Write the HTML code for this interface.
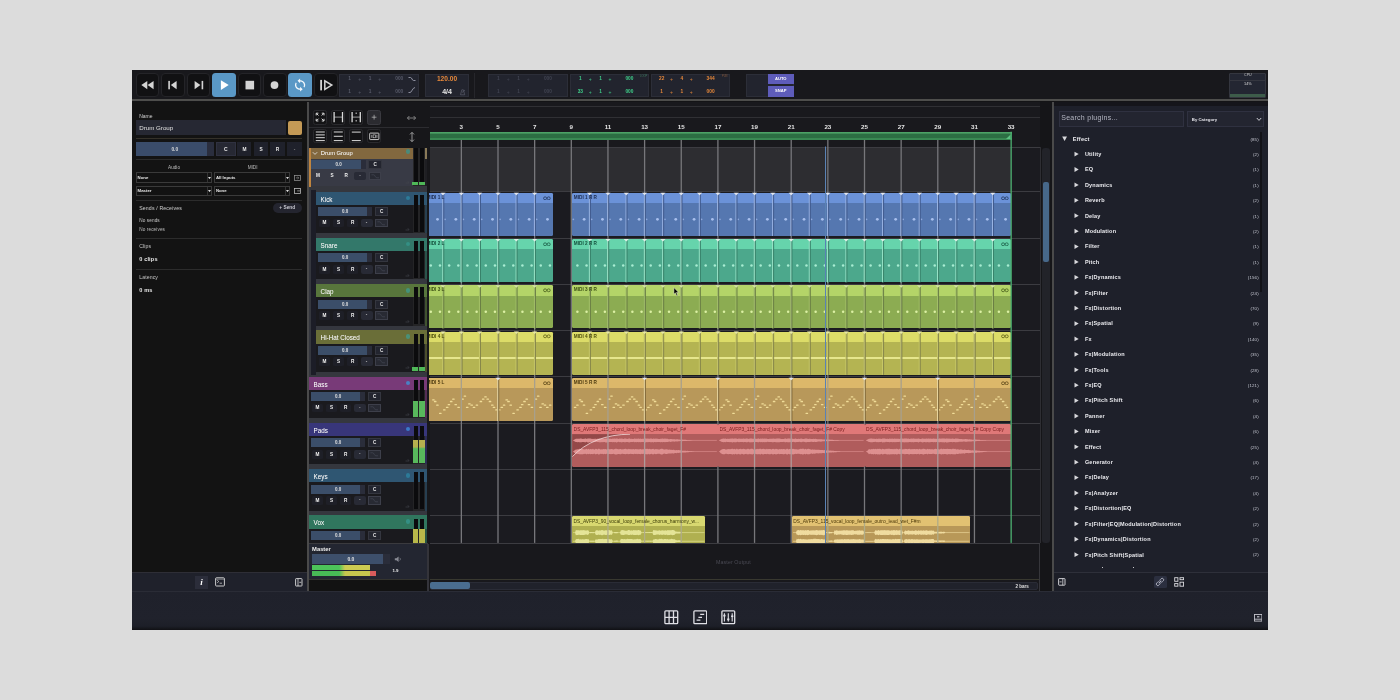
<!DOCTYPE html>
<html><head><meta charset="utf-8"><title>DAW</title>
<style>
html,body{margin:0;padding:0;}
body{width:1400px;height:700px;background:#dcdcdc;overflow:hidden;position:relative;font-family:"Liberation Sans",sans-serif;}
#r{position:absolute;left:0;top:0;width:1400px;height:700px;will-change:transform;filter:blur(0.4px);}
#r>div,#r>svg{position:absolute;box-sizing:border-box;}
.t{white-space:nowrap;font-weight:400;}
</style></head><body><div id="r">
<div style="left:132.00px;top:70.00px;width:1136.00px;height:560.00px;background:#141416;"></div>
<div style="left:132.00px;top:70.00px;width:1136.00px;height:30.00px;background:#18181c;"></div>
<div style="left:132.00px;top:99.00px;width:1136.00px;height:2.00px;background:#4e4e4c;"></div>
<div style="left:135.60px;top:73.20px;width:23.60px;height:24.20px;background:#111113;border-radius:4px;border:1px solid #242428;"></div>
<div style="left:161.20px;top:73.20px;width:23.60px;height:24.20px;background:#111113;border-radius:4px;border:1px solid #242428;"></div>
<div style="left:186.80px;top:73.20px;width:23.60px;height:24.20px;background:#111113;border-radius:4px;border:1px solid #242428;"></div>
<div style="left:211.90px;top:73.20px;width:24.30px;height:24.20px;background:#5a98c6;border-radius:3.5px;"></div>
<div style="left:237.60px;top:73.20px;width:23.60px;height:24.20px;background:#111113;border-radius:4px;border:1px solid #242428;"></div>
<div style="left:263.40px;top:73.20px;width:23.60px;height:24.20px;background:#111113;border-radius:4px;border:1px solid #242428;"></div>
<div style="left:288.10px;top:73.20px;width:24.30px;height:24.20px;background:#5a98c6;border-radius:3.5px;"></div>
<div style="left:314.00px;top:73.20px;width:23.60px;height:24.20px;background:#111113;border-radius:4px;border:1px solid #242428;"></div>
<svg style="left:135.60px;top:73.20px;" width="24" height="24.2" viewBox="0 0 24 24.2"><path d="M11.3 7.9v8.4l-6-4.2z M17.6 7.9v8.4l-6-4.2z" fill="#d4d4d4"/></svg>
<svg style="left:161.20px;top:73.20px;" width="24" height="24.2" viewBox="0 0 24 24.2"><rect x="7.3" y="7.9" width="1.6" height="8.4" fill="#d4d4d4"/><path d="M15.6 7.9v8.4l-5.8-4.2z" fill="#d4d4d4"/></svg>
<svg style="left:186.80px;top:73.20px;" width="24" height="24.2" viewBox="0 0 24 24.2"><rect x="14.6" y="7.9" width="1.6" height="8.4" fill="#d4d4d4"/><path d="M7.6 7.9v8.4l5.8-4.2z" fill="#d4d4d4"/></svg>
<svg style="left:211.90px;top:73.20px;" width="24.3" height="24.2" viewBox="0 0 24.3 24.2"><path d="M8.9 7.2v9.8l7.8-4.9z" fill="#fff"/></svg>
<svg style="left:237.60px;top:73.20px;" width="24" height="24.2" viewBox="0 0 24 24.2"><rect x="7.5" y="7.8" width="8.6" height="8.6" fill="#d4d4d4"/></svg>
<svg style="left:263.40px;top:73.20px;" width="24" height="24.2" viewBox="0 0 24 24.2"><circle cx="11.5" cy="12.1" r="3.9" fill="#d4d4d4"/></svg>
<svg style="left:288.10px;top:73.20px;" width="24.3" height="24.2" viewBox="0 0 24.3 24.2"><g transform="translate(12.1 12.0) scale(0.64 0.6) translate(-12 -12)"><path d="M12 4V1L8 5l4 4V6c3.31 0 6 2.69 6 6 0 1.01-.25 1.97-.7 2.8l1.46 1.46C19.54 15.03 20 13.57 20 12c0-4.42-3.58-8-8-8zm0 14c-3.31 0-6-2.69-6-6 0-1.01.25-1.97.7-2.8L5.24 7.74C4.46 8.97 4 10.43 4 12c0 4.42 3.58 8 8 8v3l4-4-4-4v3z" fill="#f4f8fc"/></g></svg>
<svg style="left:314.00px;top:73.20px;" width="24" height="24.2" viewBox="0 0 24 24.2"><rect x="6.2" y="6.9" width="1.8" height="10.5" fill="#d4d4d4"/><path d="M10.8 7.8v8.6l7-4.3z" fill="none" stroke="#d4d4d4" stroke-width="1.5" stroke-linejoin="miter"/></svg>
<div style="left:339.30px;top:73.70px;width:80.00px;height:23.00px;background:#22242e;border:1px solid #2c2e38;"></div>
<div class="t" style="left:349.70px;top:76.48px;font-size:4.8px;line-height:5.76px;color:#585b6a;width:10.00px;text-align:center;margin-left:-5px;font-weight:700;">1</div>
<div class="t" style="left:359.70px;top:76.36px;font-size:5px;line-height:6.00px;color:#585b6a;width:10.00px;text-align:center;margin-left:-5px;opacity:.9;">+</div>
<div class="t" style="left:370.10px;top:76.48px;font-size:4.8px;line-height:5.76px;color:#585b6a;width:10.00px;text-align:center;margin-left:-5px;font-weight:700;">1</div>
<div class="t" style="left:379.70px;top:76.36px;font-size:5px;line-height:6.00px;color:#585b6a;width:10.00px;text-align:center;margin-left:-5px;opacity:.9;">+</div>
<div class="t" style="left:399.30px;top:76.48px;font-size:4.8px;line-height:5.76px;color:#585b6a;width:16.00px;text-align:center;margin-left:-8px;font-weight:700;">000</div>
<div class="t" style="left:349.70px;top:89.18px;font-size:4.8px;line-height:5.76px;color:#585b6a;width:10.00px;text-align:center;margin-left:-5px;font-weight:700;">1</div>
<div class="t" style="left:359.70px;top:89.06px;font-size:5px;line-height:6.00px;color:#585b6a;width:10.00px;text-align:center;margin-left:-5px;opacity:.9;">+</div>
<div class="t" style="left:370.10px;top:89.18px;font-size:4.8px;line-height:5.76px;color:#585b6a;width:10.00px;text-align:center;margin-left:-5px;font-weight:700;">1</div>
<div class="t" style="left:379.70px;top:89.06px;font-size:5px;line-height:6.00px;color:#585b6a;width:10.00px;text-align:center;margin-left:-5px;opacity:.9;">+</div>
<div class="t" style="left:399.30px;top:89.18px;font-size:4.8px;line-height:5.76px;color:#585b6a;width:16.00px;text-align:center;margin-left:-8px;font-weight:700;">000</div>
<svg style="left:407.00px;top:75.00px;" width="10" height="20" viewBox="0 0 10 20"><path d="M1.5 2.5h2c1.5 0 1.5 3 3 3h2" fill="none" stroke="#9a9cab" stroke-width="0.9"/><path d="M1.5 17.5h1.5c2 0 2-4.5 5-5" fill="none" stroke="#9a9cab" stroke-width="0.9"/></svg>
<div style="left:425.00px;top:73.70px;width:44.00px;height:23.00px;background:#22242e;border:1px solid #2c2e38;"></div>
<div class="t" style="left:425.00px;top:75.32px;font-size:6.6px;line-height:7.92px;color:#e8893a;width:44.00px;text-align:center;font-weight:700;">120.00</div>
<div class="t" style="left:425.00px;top:87.88px;font-size:7px;line-height:8.40px;color:#e6e6e6;width:44.00px;text-align:center;font-weight:700;">4/4</div>
<svg style="left:458.00px;top:87.50px;" width="8" height="8" viewBox="0 0 8 8"><path d="M2.5 6.8l1.3-5h1.6l1.3 5z M4 4.5l3-2.5" fill="none" stroke="#5a5d6c" stroke-width="0.7"/></svg>
<div style="left:474.00px;top:73.00px;width:1.00px;height:24.50px;background:#26262b;"></div>
<div style="left:487.90px;top:73.70px;width:80.00px;height:23.00px;background:#22242e;border:1px solid #2c2e38;"></div>
<div class="t" style="left:498.30px;top:76.48px;font-size:4.8px;line-height:5.76px;color:#414452;width:10.00px;text-align:center;margin-left:-5px;font-weight:700;">1</div>
<div class="t" style="left:508.30px;top:76.36px;font-size:5px;line-height:6.00px;color:#414452;width:10.00px;text-align:center;margin-left:-5px;opacity:.9;">+</div>
<div class="t" style="left:518.70px;top:76.48px;font-size:4.8px;line-height:5.76px;color:#414452;width:10.00px;text-align:center;margin-left:-5px;font-weight:700;">1</div>
<div class="t" style="left:528.30px;top:76.36px;font-size:5px;line-height:6.00px;color:#414452;width:10.00px;text-align:center;margin-left:-5px;opacity:.9;">+</div>
<div class="t" style="left:547.90px;top:76.48px;font-size:4.8px;line-height:5.76px;color:#414452;width:16.00px;text-align:center;margin-left:-8px;font-weight:700;">000</div>
<div class="t" style="left:498.30px;top:89.18px;font-size:4.8px;line-height:5.76px;color:#414452;width:10.00px;text-align:center;margin-left:-5px;font-weight:700;">1</div>
<div class="t" style="left:508.30px;top:89.06px;font-size:5px;line-height:6.00px;color:#414452;width:10.00px;text-align:center;margin-left:-5px;opacity:.9;">+</div>
<div class="t" style="left:518.70px;top:89.18px;font-size:4.8px;line-height:5.76px;color:#414452;width:10.00px;text-align:center;margin-left:-5px;font-weight:700;">1</div>
<div class="t" style="left:528.30px;top:89.06px;font-size:5px;line-height:6.00px;color:#414452;width:10.00px;text-align:center;margin-left:-5px;opacity:.9;">+</div>
<div class="t" style="left:547.90px;top:89.18px;font-size:4.8px;line-height:5.76px;color:#414452;width:16.00px;text-align:center;margin-left:-8px;font-weight:700;">000</div>
<div style="left:570.00px;top:73.70px;width:79.30px;height:23.00px;background:#22242e;border:1px solid #2c2e38;"></div>
<div class="t" style="left:580.31px;top:76.48px;font-size:4.8px;line-height:5.76px;color:#3fd08a;width:10.00px;text-align:center;margin-left:-5px;font-weight:700;">1</div>
<div class="t" style="left:590.22px;top:76.36px;font-size:5px;line-height:6.00px;color:#3fd08a;width:10.00px;text-align:center;margin-left:-5px;opacity:.9;">+</div>
<div class="t" style="left:600.53px;top:76.48px;font-size:4.8px;line-height:5.76px;color:#3fd08a;width:10.00px;text-align:center;margin-left:-5px;font-weight:700;">1</div>
<div class="t" style="left:610.05px;top:76.36px;font-size:5px;line-height:6.00px;color:#3fd08a;width:10.00px;text-align:center;margin-left:-5px;opacity:.9;">+</div>
<div class="t" style="left:629.47px;top:76.48px;font-size:4.8px;line-height:5.76px;color:#3fd08a;width:16.00px;text-align:center;margin-left:-8px;font-weight:700;">000</div>
<div class="t" style="left:580.31px;top:89.18px;font-size:4.8px;line-height:5.76px;color:#3fd08a;width:10.00px;text-align:center;margin-left:-5px;font-weight:700;">33</div>
<div class="t" style="left:590.22px;top:89.06px;font-size:5px;line-height:6.00px;color:#3fd08a;width:10.00px;text-align:center;margin-left:-5px;opacity:.9;">+</div>
<div class="t" style="left:600.53px;top:89.18px;font-size:4.8px;line-height:5.76px;color:#3fd08a;width:10.00px;text-align:center;margin-left:-5px;font-weight:700;">1</div>
<div class="t" style="left:610.05px;top:89.06px;font-size:5px;line-height:6.00px;color:#3fd08a;width:10.00px;text-align:center;margin-left:-5px;opacity:.9;">+</div>
<div class="t" style="left:629.47px;top:89.18px;font-size:4.8px;line-height:5.76px;color:#3fd08a;width:16.00px;text-align:center;margin-left:-8px;font-weight:700;">000</div>
<div class="t" style="left:640.00px;top:74.77px;font-size:2.6px;line-height:3.12px;color:#3b7a5c;">LOOP</div>
<div style="left:651.40px;top:73.70px;width:78.90px;height:23.00px;background:#22242e;border:1px solid #2c2e38;"></div>
<div class="t" style="left:661.66px;top:76.48px;font-size:4.8px;line-height:5.76px;color:#e8893a;width:10.00px;text-align:center;margin-left:-5px;font-weight:700;">22</div>
<div class="t" style="left:671.52px;top:76.36px;font-size:5px;line-height:6.00px;color:#e8893a;width:10.00px;text-align:center;margin-left:-5px;opacity:.9;">+</div>
<div class="t" style="left:681.78px;top:76.48px;font-size:4.8px;line-height:5.76px;color:#e8893a;width:10.00px;text-align:center;margin-left:-5px;font-weight:700;">4</div>
<div class="t" style="left:691.24px;top:76.36px;font-size:5px;line-height:6.00px;color:#e8893a;width:10.00px;text-align:center;margin-left:-5px;opacity:.9;">+</div>
<div class="t" style="left:710.57px;top:76.48px;font-size:4.8px;line-height:5.76px;color:#e8893a;width:16.00px;text-align:center;margin-left:-8px;font-weight:700;">344</div>
<div class="t" style="left:661.66px;top:89.18px;font-size:4.8px;line-height:5.76px;color:#e8893a;width:10.00px;text-align:center;margin-left:-5px;font-weight:700;">1</div>
<div class="t" style="left:671.52px;top:89.06px;font-size:5px;line-height:6.00px;color:#e8893a;width:10.00px;text-align:center;margin-left:-5px;opacity:.9;">+</div>
<div class="t" style="left:681.78px;top:89.18px;font-size:4.8px;line-height:5.76px;color:#e8893a;width:10.00px;text-align:center;margin-left:-5px;font-weight:700;">1</div>
<div class="t" style="left:691.24px;top:89.06px;font-size:5px;line-height:6.00px;color:#e8893a;width:10.00px;text-align:center;margin-left:-5px;opacity:.9;">+</div>
<div class="t" style="left:710.57px;top:89.18px;font-size:4.8px;line-height:5.76px;color:#e8893a;width:16.00px;text-align:center;margin-left:-8px;font-weight:700;">000</div>
<div class="t" style="left:722.00px;top:74.77px;font-size:2.6px;line-height:3.12px;color:#8a5a3a;">PUN</div>
<div style="left:746.40px;top:73.70px;width:47.20px;height:23.00px;background:#22242e;border:1px solid #2c2e38;"></div>
<div style="left:767.90px;top:73.70px;width:25.70px;height:10.80px;background:#5e5cba;"></div>
<div style="left:767.90px;top:85.90px;width:25.70px;height:10.80px;background:#5e5cba;"></div>
<div class="t" style="left:767.90px;top:76.79px;font-size:4.1px;line-height:4.92px;color:#fff;width:25.70px;text-align:center;font-weight:700;">AUTO</div>
<div class="t" style="left:767.90px;top:88.99px;font-size:4.1px;line-height:4.92px;color:#fff;width:25.70px;text-align:center;font-weight:700;">SNAP</div>
<div style="left:1229.30px;top:72.60px;width:37.20px;height:25.30px;background:#232632;border:1px solid #34363f;border-radius:1px;"></div>
<div style="left:1230.30px;top:93.60px;width:35.20px;height:3.60px;background:#3d5c4a;"></div>
<div style="left:1230.00px;top:80.30px;width:36.00px;height:0.60px;background:#34363f;"></div>
<div class="t" style="left:1229.30px;top:73.48px;font-size:3.6px;line-height:4.32px;color:#ccc;width:37.20px;text-align:center;">CPU</div>
<div class="t" style="left:1229.30px;top:81.96px;font-size:3.8px;line-height:4.56px;color:#ddd;width:37.20px;text-align:center;">14%</div>
<div style="left:132.00px;top:101.50px;width:175.00px;height:488.50px;background:#131313;"></div>
<div class="t" style="left:139.20px;top:113.26px;font-size:5.0px;line-height:6.00px;color:#d0d0d0;">Name</div>
<div style="left:136.00px;top:120.30px;width:149.70px;height:14.40px;background:#262833;"></div>
<div class="t" style="left:139.20px;top:123.95px;font-size:6.2px;line-height:7.44px;color:#e0e0e0;">Drum Group</div>
<div style="left:287.90px;top:120.70px;width:14.20px;height:13.90px;background:#c49a56;border-radius:2px;"></div>
<div style="left:136.00px;top:138.10px;width:166.00px;height:0.70px;background:#34312a;"></div>
<div style="left:136.00px;top:141.90px;width:77.60px;height:13.80px;background:#2a2e3e;"></div>
<div style="left:136.00px;top:141.90px;width:71.00px;height:13.80px;background:#3a4c6a;"></div>
<div class="t" style="left:136.00px;top:146.88px;font-size:4.8px;line-height:5.76px;color:#ddd;width:77.60px;text-align:center;font-weight:700;">0.0</div>
<div style="left:215.70px;top:141.90px;width:20.00px;height:13.80px;background:#262833;border:1px solid #2f3140;"></div>
<div class="t" style="left:215.70px;top:145.96px;font-size:5px;line-height:6.00px;color:#e6e6e6;width:20.00px;text-align:center;font-weight:700;">C</div>
<div style="left:237.40px;top:141.90px;width:14.00px;height:13.80px;background:#1f212b;"></div>
<div class="t" style="left:237.40px;top:146.88px;font-size:4.8px;line-height:5.76px;color:#e6e6e6;width:14.00px;text-align:center;font-weight:700;">M</div>
<div style="left:254.00px;top:141.90px;width:14.00px;height:13.80px;background:#1f212b;"></div>
<div class="t" style="left:254.00px;top:146.88px;font-size:4.8px;line-height:5.76px;color:#e6e6e6;width:14.00px;text-align:center;font-weight:700;">S</div>
<div style="left:270.40px;top:141.90px;width:14.30px;height:13.80px;background:#1f212b;"></div>
<div class="t" style="left:270.40px;top:146.88px;font-size:4.8px;line-height:5.76px;color:#e6e6e6;width:14.30px;text-align:center;font-weight:700;">R</div>
<div style="left:286.90px;top:141.90px;width:15.20px;height:13.80px;background:#1f212b;"></div>
<div class="t" style="left:286.90px;top:146.88px;font-size:4.8px;line-height:5.76px;color:#888;width:15.20px;text-align:center;font-weight:700;">-</div>
<div style="left:136.00px;top:158.80px;width:166.00px;height:0.70px;background:#2c2c2c;"></div>
<div class="t" style="left:154.00px;top:165.13px;font-size:4.7px;line-height:5.64px;color:#bbb;width:40.00px;text-align:center;">Audio</div>
<div class="t" style="left:232.60px;top:165.13px;font-size:4.7px;line-height:5.64px;color:#bbb;width:40.00px;text-align:center;">MIDI</div>
<div style="left:136.00px;top:172.40px;width:75.70px;height:10.90px;background:#121212;border:1px solid #3a3a3a;"></div>
<div class="t" style="left:137.60px;top:175.32px;font-size:4.3px;line-height:5.16px;color:#e8e8e8;font-weight:700;">None</div>
<div style="left:207.10px;top:173.40px;width:0.60px;height:8.90px;background:#333;"></div>
<svg style="left:207.70px;top:176.85px;" width="3" height="2.4" viewBox="0 0 3 2.4"><path d="M0 0h3l-1.5 2.2z" fill="#ddd"/></svg>
<div style="left:214.30px;top:172.40px;width:75.40px;height:10.90px;background:#121212;border:1px solid #3a3a3a;"></div>
<div class="t" style="left:215.90px;top:175.32px;font-size:4.3px;line-height:5.16px;color:#e8e8e8;font-weight:700;">All Inputs</div>
<div style="left:285.10px;top:173.40px;width:0.60px;height:8.90px;background:#333;"></div>
<svg style="left:285.70px;top:176.85px;" width="3" height="2.4" viewBox="0 0 3 2.4"><path d="M0 0h3l-1.5 2.2z" fill="#ddd"/></svg>
<div style="left:136.00px;top:185.70px;width:75.70px;height:10.50px;background:#121212;border:1px solid #3a3a3a;"></div>
<div class="t" style="left:137.60px;top:188.42px;font-size:4.3px;line-height:5.16px;color:#e8e8e8;font-weight:700;">Master</div>
<div style="left:207.10px;top:186.70px;width:0.60px;height:8.50px;background:#333;"></div>
<svg style="left:207.70px;top:189.95px;" width="3" height="2.4" viewBox="0 0 3 2.4"><path d="M0 0h3l-1.5 2.2z" fill="#ddd"/></svg>
<div style="left:214.30px;top:185.70px;width:75.40px;height:10.50px;background:#121212;border:1px solid #3a3a3a;"></div>
<div class="t" style="left:215.90px;top:188.42px;font-size:4.3px;line-height:5.16px;color:#e8e8e8;font-weight:700;">None</div>
<div style="left:285.10px;top:186.70px;width:0.60px;height:8.50px;background:#333;"></div>
<svg style="left:285.70px;top:189.95px;" width="3" height="2.4" viewBox="0 0 3 2.4"><path d="M0 0h3l-1.5 2.2z" fill="#ddd"/></svg>
<svg style="left:293.50px;top:174.80px;" width="7" height="6" viewBox="0 0 7 6"><rect x="0.4" y="0.4" width="6" height="5" fill="none" stroke="#999" stroke-width="0.7"/><path d="M2 2.9h2.6M3.6 1.8l1.2 1.1-1.2 1.1" fill="none" stroke="#999" stroke-width="0.6"/></svg>
<svg style="left:293.50px;top:188.00px;" width="7" height="6" viewBox="0 0 7 6"><rect x="0.4" y="0.4" width="6" height="5" fill="none" stroke="#bbb" stroke-width="0.8"/><path d="M3.2 2.9h3" fill="none" stroke="#bbb" stroke-width="0.7"/></svg>
<div style="left:136.00px;top:200.30px;width:166.00px;height:0.70px;background:#2c2c2c;"></div>
<div class="t" style="left:139.20px;top:205.04px;font-size:5.2px;line-height:6.24px;color:#d0d0d0;letter-spacing:0.15px;">Sends / Receives</div>
<div style="left:272.60px;top:203.00px;width:29.40px;height:10.20px;background:#24252f;border-radius:5px;"></div>
<div class="t" style="left:272.60px;top:205.38px;font-size:4.8px;line-height:5.76px;color:#c8c8d0;width:29.40px;text-align:center;font-weight:700;">+ Send</div>
<div class="t" style="left:139.20px;top:217.63px;font-size:4.7px;line-height:5.64px;color:#c8c8c8;letter-spacing:0.1px;">No sends</div>
<div class="t" style="left:139.20px;top:227.03px;font-size:4.7px;line-height:5.64px;color:#bdbdbd;letter-spacing:0.1px;">No receives</div>
<div style="left:136.00px;top:238.40px;width:166.00px;height:0.70px;background:#2c2c2c;"></div>
<div class="t" style="left:139.20px;top:243.04px;font-size:5.2px;line-height:6.24px;color:#c4c4c4;letter-spacing:0.1px;">Clips</div>
<div class="t" style="left:139.20px;top:256.10px;font-size:5.6px;line-height:6.72px;color:#e6e6e6;font-weight:700;letter-spacing:0.15px;">0 clips</div>
<div style="left:136.00px;top:268.50px;width:166.00px;height:0.70px;background:#2c2c2c;"></div>
<div class="t" style="left:139.20px;top:273.84px;font-size:5.2px;line-height:6.24px;color:#c4c4c4;letter-spacing:0.1px;">Latency</div>
<div class="t" style="left:139.20px;top:287.00px;font-size:5.6px;line-height:6.72px;color:#e6e6e6;font-weight:700;letter-spacing:0.15px;">0 ms</div>
<div style="left:132.00px;top:572.20px;width:175.00px;height:19.20px;background:#1f212b;border-top:1px solid #2e2e36;"></div>
<div style="left:195.00px;top:575.60px;width:13.00px;height:13.00px;background:#2b2d3a;"></div>
<div class="t" style="left:195.00px;top:577.10px;font-size:9px;line-height:10.80px;color:#fff;width:13.00px;text-align:center;font-family:'Liberation Serif',serif;font-style:italic;font-weight:700;">i</div>
<svg style="left:215.40px;top:577.00px;" width="10" height="10" viewBox="0 0 10 10"><rect x="0.6" y="0.8" width="8.8" height="8.2" rx="0.8" fill="none" stroke="#ddd" stroke-width="0.9"/><path d="M2.2 3.2l1.6 1.3-1.6 1.3M4.6 6.2h2.4" fill="none" stroke="#ddd" stroke-width="0.7"/><path d="M0.6 2.2h8.8" stroke="#ddd" stroke-width="0.5"/></svg>
<svg style="left:294.60px;top:577.80px;" width="8" height="9" viewBox="0 0 8 9"><rect x="0.6" y="0.6" width="6.4" height="7.4" rx="0.6" fill="none" stroke="#ddd" stroke-width="0.9"/><path d="M3 0.6v7.4" stroke="#ddd" stroke-width="0.8"/><path d="M4.3 4.3h2" stroke="#ddd" stroke-width="0.8"/></svg>
<div style="left:307.00px;top:101.50px;width:1.50px;height:490.00px;background:#4a4a4a;"></div>
<div style="left:308.50px;top:101.50px;width:121.00px;height:488.50px;background:#17171a;"></div>
<div style="left:308.50px;top:126.60px;width:120.00px;height:0.70px;background:#2c2c30;"></div>
<div style="left:313.20px;top:110.40px;width:14.20px;height:14.20px;background:#131315;border:1px solid #2a2a2e;border-radius:2.5px;"></div>
<div style="left:331.00px;top:110.40px;width:14.20px;height:14.20px;background:#131315;border:1px solid #2a2a2e;border-radius:2.5px;"></div>
<div style="left:349.00px;top:110.40px;width:14.20px;height:14.20px;background:#131315;border:1px solid #2a2a2e;border-radius:2.5px;"></div>
<div style="left:366.80px;top:110.40px;width:14.20px;height:14.20px;background:#2b2b30;border:1px solid #3a3a40;border-radius:2.5px;"></div>
<div style="left:313.20px;top:129.00px;width:14.20px;height:14.20px;background:#131315;border:1px solid #2a2a2e;border-radius:2.5px;"></div>
<div style="left:331.00px;top:129.00px;width:14.20px;height:14.20px;background:#131315;border:1px solid #2a2a2e;border-radius:2.5px;"></div>
<div style="left:349.00px;top:129.00px;width:14.20px;height:14.20px;background:#131315;border:1px solid #2a2a2e;border-radius:2.5px;"></div>
<div style="left:366.80px;top:129.00px;width:14.20px;height:14.20px;background:#131315;border:1px solid #2a2a2e;border-radius:2.5px;"></div>
<svg style="left:313.20px;top:110.40px;" width="14.2" height="14.2" viewBox="0 0 14.2 14.2"><g fill="none" stroke="#dcdcdc" stroke-width="1"><path d="M3.2 5.4v-2.2h2.2M3.4 3.4l2.1 2.1 M11 5.4v-2.2h-2.2M10.8 3.4l-2.1 2.1 M3.2 8.8v2.2h2.2M3.4 10.8l2.1-2.1 M11 8.8v2.2h-2.2M10.8 10.8l-2.1-2.1"/></g></svg>
<svg style="left:331.00px;top:110.40px;" width="14.2" height="14.2" viewBox="0 0 14.2 14.2"><g fill="none" stroke="#dcdcdc"><path d="M3.1 2v10.2M11.5 2v10.2" stroke-width="1.3"/><path d="M3.1 7.1h8.4" stroke-width="0.8" opacity=".85"/></g></svg>
<svg style="left:349.00px;top:110.40px;" width="14.2" height="14.2" viewBox="0 0 14.2 14.2"><g fill="none" stroke="#dcdcdc"><path d="M3.1 2v10.2M11.3 2v10.2" stroke-width="1.3"/><path d="M3.1 7.1h8.2" stroke-width="0.8" opacity=".85"/><path d="M7.2 2.6v1.5M7.2 10v1.5" stroke-width="1.2" opacity=".8"/></g></svg>
<svg style="left:366.80px;top:110.40px;" width="14.2" height="14.2" viewBox="0 0 14.2 14.2"><path d="M7.1 4.8v4.8M4.7 7.2h4.8" fill="none" stroke="#c8c8c8" stroke-width="0.65"/></svg>
<svg style="left:313.20px;top:129.00px;" width="14.2" height="14.2" viewBox="0 0 14.2 14.2"><path d="M2.8 3h9M2.8 5.9h9M2.8 8.7h9M2.8 11.6h9" fill="none" stroke="#dcdcdc" stroke-width="1"/></svg>
<svg style="left:331.00px;top:129.00px;" width="14.2" height="14.2" viewBox="0 0 14.2 14.2"><path d="M2.8 3h9M2.8 7.3h9M2.8 11.6h9" fill="none" stroke="#dcdcdc" stroke-width="1"/></svg>
<svg style="left:349.00px;top:129.00px;" width="14.2" height="14.2" viewBox="0 0 14.2 14.2"><path d="M2.8 3.1h9M2.8 11.6h9" fill="none" stroke="#dcdcdc" stroke-width="1"/></svg>
<svg style="left:366.80px;top:129.00px;" width="14.2" height="14.2" viewBox="0 0 14.2 14.2"><rect x="2.7" y="4.1" width="9.2" height="6.5" rx="0.6" fill="none" stroke="#dcdcdc" stroke-width="0.9"/><path d="M4.8 5.8v3.1M9.9 5.8v3.1" fill="none" stroke="#dcdcdc" stroke-width="0.7"/><rect x="6.1" y="5.9" width="2.5" height="2.9" fill="none" stroke="#dcdcdc" stroke-width="0.6"/></svg>
<svg style="left:406.00px;top:113.50px;" width="11" height="8" viewBox="0 0 11 8"><path d="M1.5 4h8M3.4 2l-2 2 2 2M7.6 2l2 2-2 2" fill="none" stroke="#9a9a9a" stroke-width="0.8"/></svg>
<svg style="left:407.50px;top:130.50px;" width="8" height="12" viewBox="0 0 8 12"><path d="M4 1.5v9M2 3.4l2-2 2 2M2 8.6l2 2 2-2" fill="none" stroke="#b8b8b8" stroke-width="0.8"/></svg>
<div style="left:308.50px;top:147.90px;width:119.60px;height:395.10px;background:#35373e;"></div>
<div style="left:310.70px;top:147.90px;width:101.90px;height:38.50px;background:#383a45;"></div>
<div style="left:308.60px;top:147.90px;width:2.10px;height:39.50px;background:#c0853f;"></div>
<div style="left:310.70px;top:147.90px;width:101.90px;height:10.70px;background:#82683f;"></div>
<div class="t" style="left:320.80px;top:150.14px;font-size:5.8px;line-height:6.96px;color:#f4f4f4;text-shadow:0 0 0.3px rgba(255,255,255,.3);">Drum Group</div>
<svg style="left:312.20px;top:150.90px;" width="6" height="5" viewBox="0 0 6 5"><path d="M0.8 1.2l2.2 2.2 2.2-2.2" fill="none" stroke="#e8e8e8" stroke-width="0.8"/></svg>
<div style="left:405.5px;top:149.00px;width:4.6px;height:4.6px;border-radius:50%;background:#4a8a7a;"></div>
<div style="left:311.40px;top:160.00px;width:54.40px;height:9.00px;background:#2a2d3a;"></div>
<div style="left:311.40px;top:160.00px;width:49.40px;height:9.00px;background:#3b4e69;"></div>
<div class="t" style="left:311.40px;top:162.05px;font-size:4.5px;line-height:5.40px;color:#e0e0e0;width:54.40px;text-align:center;font-weight:700;">0.0</div>
<div style="left:368.40px;top:159.90px;width:13.40px;height:9.20px;background:#23252f;border:1px solid #34363f;"></div>
<div class="t" style="left:368.40px;top:161.99px;font-size:4.6px;line-height:5.52px;color:#e8e8e8;width:13.40px;text-align:center;font-weight:700;">C</div>
<div class="t" style="left:311.90px;top:173.33px;font-size:4.7px;line-height:5.64px;color:#f0f0f0;width:12.00px;text-align:center;font-weight:700;">M</div>
<div class="t" style="left:326.05px;top:173.33px;font-size:4.7px;line-height:5.64px;color:#f0f0f0;width:12.00px;text-align:center;font-weight:700;">S</div>
<div class="t" style="left:340.20px;top:173.33px;font-size:4.7px;line-height:5.64px;color:#f0f0f0;width:12.00px;text-align:center;font-weight:700;">R</div>
<div style="left:354.10px;top:171.60px;width:12.00px;height:8.80px;background:#282a35;border-radius:2px;"></div>
<div class="t" style="left:354.10px;top:172.89px;font-size:4.6px;line-height:5.52px;color:#c8c8c8;width:12.00px;text-align:center;font-weight:700;">-</div>
<div style="left:368.60px;top:171.50px;width:12.60px;height:8.80px;background:#282a33;border:1px solid #3d3f4a;"></div>
<svg style="left:368.60px;top:171.50px;" width="12.6" height="8.8" viewBox="0 0 12.6 8.8"><path d="M2.4 2.8h2.2c1.6 0 1.6 3 3.2 3h2.2" fill="none" stroke="#4a4d5a" stroke-width="0.6"/></svg>
<svg style="left:404.60px;top:179.90px;" width="5" height="4" viewBox="0 0 5 4"><path d="M0.5 3h3.6M2.8 1.2l1.4 1.8" fill="none" stroke="#44464f" stroke-width="0.6"/></svg>
<div style="left:412.60px;top:147.90px;width:12.60px;height:38.50px;background:#242426;"></div>
<div style="left:413.60px;top:148.40px;width:4.10px;height:36.80px;background:#0b0b0d;"></div>
<div style="left:419.60px;top:148.40px;width:4.50px;height:36.80px;background:#0b0b0d;"></div>
<div style="left:412.40px;top:181.50px;width:5.60px;height:3.50px;background:#4fb858;"></div>
<div style="left:419.00px;top:181.50px;width:5.70px;height:3.50px;background:#4fb858;"></div>
<div style="left:425.20px;top:147.90px;width:2.10px;height:10.70px;background:#8a7a58;"></div>
<div style="left:425.20px;top:158.60px;width:2.10px;height:27.80px;background:#1f1f23;"></div>
<div style="left:311.00px;top:189.60px;width:4.60px;height:46.25px;background:#1c1d27;"></div>
<div style="left:315.60px;top:191.60px;width:97.00px;height:41.65px;background:#1a1a1e;"></div>
<div style="left:315.60px;top:191.60px;width:111.70px;height:13.30px;background:#2f5672;"></div>
<div class="t" style="left:320.60px;top:195.74px;font-size:6.3px;line-height:7.56px;color:#f4f4f4;text-shadow:0 0 0.3px rgba(255,255,255,.3);">Kick</div>
<div style="left:405.5px;top:195.50px;width:4.6px;height:4.6px;border-radius:50%;background:#2c7a98;"></div>
<div style="left:317.90px;top:207.10px;width:54.40px;height:9.00px;background:#2a2d3a;"></div>
<div style="left:317.90px;top:207.10px;width:49.40px;height:9.00px;background:#3b4e69;"></div>
<div class="t" style="left:317.90px;top:209.15px;font-size:4.5px;line-height:5.40px;color:#e0e0e0;width:54.40px;text-align:center;font-weight:700;">0.0</div>
<div style="left:374.90px;top:207.00px;width:13.40px;height:9.20px;background:#23252f;border:1px solid #34363f;"></div>
<div class="t" style="left:374.90px;top:209.09px;font-size:4.6px;line-height:5.52px;color:#e8e8e8;width:13.40px;text-align:center;font-weight:700;">C</div>
<div style="left:318.80px;top:218.60px;width:11.20px;height:8.80px;background:#1e1f27;border-radius:1.5px;"></div>
<div class="t" style="left:318.40px;top:220.33px;font-size:4.7px;line-height:5.64px;color:#f0f0f0;width:12.00px;text-align:center;font-weight:700;">M</div>
<div style="left:332.95px;top:218.60px;width:11.20px;height:8.80px;background:#1e1f27;border-radius:1.5px;"></div>
<div class="t" style="left:332.55px;top:220.33px;font-size:4.7px;line-height:5.64px;color:#f0f0f0;width:12.00px;text-align:center;font-weight:700;">S</div>
<div style="left:347.10px;top:218.60px;width:11.20px;height:8.80px;background:#1e1f27;border-radius:1.5px;"></div>
<div class="t" style="left:346.70px;top:220.33px;font-size:4.7px;line-height:5.64px;color:#f0f0f0;width:12.00px;text-align:center;font-weight:700;">R</div>
<div style="left:360.60px;top:218.60px;width:12.00px;height:8.80px;background:#282a35;border-radius:2px;"></div>
<div class="t" style="left:360.60px;top:219.89px;font-size:4.6px;line-height:5.52px;color:#c8c8c8;width:12.00px;text-align:center;font-weight:700;">-</div>
<div style="left:375.10px;top:218.50px;width:12.60px;height:8.80px;background:#282a33;border:1px solid #3d3f4a;"></div>
<svg style="left:375.10px;top:218.50px;" width="12.6" height="8.8" viewBox="0 0 12.6 8.8"><path d="M2.4 2.8h2.2c1.6 0 1.6 3 3.2 3h2.2" fill="none" stroke="#4a4d5a" stroke-width="0.6"/></svg>
<svg style="left:404.60px;top:226.60px;" width="5" height="4" viewBox="0 0 5 4"><path d="M0.5 3h3.6M2.8 1.2l1.4 1.8" fill="none" stroke="#44464f" stroke-width="0.6"/></svg>
<div style="left:412.60px;top:204.90px;width:12.60px;height:28.35px;background:#242426;"></div>
<div style="left:413.60px;top:194.80px;width:4.10px;height:36.85px;background:#0b0b0d;"></div>
<div style="left:419.60px;top:194.80px;width:4.50px;height:36.85px;background:#0b0b0d;"></div>
<div style="left:425.20px;top:204.90px;width:2.10px;height:28.35px;background:#273f50;"></div>
<div style="left:311.00px;top:235.85px;width:4.60px;height:46.25px;background:#1c1d27;"></div>
<div style="left:315.60px;top:237.85px;width:97.00px;height:41.65px;background:#1a1a1e;"></div>
<div style="left:315.60px;top:237.85px;width:111.70px;height:13.30px;background:#33786a;"></div>
<div class="t" style="left:320.60px;top:241.99px;font-size:6.3px;line-height:7.56px;color:#f4f4f4;text-shadow:0 0 0.3px rgba(255,255,255,.3);">Snare</div>
<div style="left:405.5px;top:241.75px;width:4.6px;height:4.6px;border-radius:50%;background:#348f84;"></div>
<div style="left:317.90px;top:253.35px;width:54.40px;height:9.00px;background:#2a2d3a;"></div>
<div style="left:317.90px;top:253.35px;width:49.40px;height:9.00px;background:#3b4e69;"></div>
<div class="t" style="left:317.90px;top:255.40px;font-size:4.5px;line-height:5.40px;color:#e0e0e0;width:54.40px;text-align:center;font-weight:700;">0.0</div>
<div style="left:374.90px;top:253.25px;width:13.40px;height:9.20px;background:#23252f;border:1px solid #34363f;"></div>
<div class="t" style="left:374.90px;top:255.34px;font-size:4.6px;line-height:5.52px;color:#e8e8e8;width:13.40px;text-align:center;font-weight:700;">C</div>
<div style="left:318.80px;top:264.85px;width:11.20px;height:8.80px;background:#1e1f27;border-radius:1.5px;"></div>
<div class="t" style="left:318.40px;top:266.58px;font-size:4.7px;line-height:5.64px;color:#f0f0f0;width:12.00px;text-align:center;font-weight:700;">M</div>
<div style="left:332.95px;top:264.85px;width:11.20px;height:8.80px;background:#1e1f27;border-radius:1.5px;"></div>
<div class="t" style="left:332.55px;top:266.58px;font-size:4.7px;line-height:5.64px;color:#f0f0f0;width:12.00px;text-align:center;font-weight:700;">S</div>
<div style="left:347.10px;top:264.85px;width:11.20px;height:8.80px;background:#1e1f27;border-radius:1.5px;"></div>
<div class="t" style="left:346.70px;top:266.58px;font-size:4.7px;line-height:5.64px;color:#f0f0f0;width:12.00px;text-align:center;font-weight:700;">R</div>
<div style="left:360.60px;top:264.85px;width:12.00px;height:8.80px;background:#282a35;border-radius:2px;"></div>
<div class="t" style="left:360.60px;top:266.14px;font-size:4.6px;line-height:5.52px;color:#c8c8c8;width:12.00px;text-align:center;font-weight:700;">-</div>
<div style="left:375.10px;top:264.75px;width:12.60px;height:8.80px;background:#282a33;border:1px solid #3d3f4a;"></div>
<svg style="left:375.10px;top:264.75px;" width="12.6" height="8.8" viewBox="0 0 12.6 8.8"><path d="M2.4 2.8h2.2c1.6 0 1.6 3 3.2 3h2.2" fill="none" stroke="#4a4d5a" stroke-width="0.6"/></svg>
<svg style="left:404.60px;top:272.85px;" width="5" height="4" viewBox="0 0 5 4"><path d="M0.5 3h3.6M2.8 1.2l1.4 1.8" fill="none" stroke="#44464f" stroke-width="0.6"/></svg>
<div style="left:412.60px;top:251.15px;width:12.60px;height:28.35px;background:#242426;"></div>
<div style="left:413.60px;top:241.05px;width:4.10px;height:36.85px;background:#0b0b0d;"></div>
<div style="left:419.60px;top:241.05px;width:4.50px;height:36.85px;background:#0b0b0d;"></div>
<div style="left:425.20px;top:251.15px;width:2.10px;height:28.35px;background:#29544b;"></div>
<div style="left:311.00px;top:282.10px;width:4.60px;height:46.25px;background:#1c1d27;"></div>
<div style="left:315.60px;top:284.10px;width:97.00px;height:41.65px;background:#1a1a1e;"></div>
<div style="left:315.60px;top:284.10px;width:111.70px;height:13.30px;background:#58763c;"></div>
<div class="t" style="left:320.60px;top:288.24px;font-size:6.3px;line-height:7.56px;color:#f4f4f4;text-shadow:0 0 0.3px rgba(255,255,255,.3);">Clap</div>
<div style="left:405.5px;top:288.00px;width:4.6px;height:4.6px;border-radius:50%;background:#45927a;"></div>
<div style="left:317.90px;top:299.60px;width:54.40px;height:9.00px;background:#2a2d3a;"></div>
<div style="left:317.90px;top:299.60px;width:49.40px;height:9.00px;background:#3b4e69;"></div>
<div class="t" style="left:317.90px;top:301.65px;font-size:4.5px;line-height:5.40px;color:#e0e0e0;width:54.40px;text-align:center;font-weight:700;">0.0</div>
<div style="left:374.90px;top:299.50px;width:13.40px;height:9.20px;background:#23252f;border:1px solid #34363f;"></div>
<div class="t" style="left:374.90px;top:301.59px;font-size:4.6px;line-height:5.52px;color:#e8e8e8;width:13.40px;text-align:center;font-weight:700;">C</div>
<div style="left:318.80px;top:311.10px;width:11.20px;height:8.80px;background:#1e1f27;border-radius:1.5px;"></div>
<div class="t" style="left:318.40px;top:312.83px;font-size:4.7px;line-height:5.64px;color:#f0f0f0;width:12.00px;text-align:center;font-weight:700;">M</div>
<div style="left:332.95px;top:311.10px;width:11.20px;height:8.80px;background:#1e1f27;border-radius:1.5px;"></div>
<div class="t" style="left:332.55px;top:312.83px;font-size:4.7px;line-height:5.64px;color:#f0f0f0;width:12.00px;text-align:center;font-weight:700;">S</div>
<div style="left:347.10px;top:311.10px;width:11.20px;height:8.80px;background:#1e1f27;border-radius:1.5px;"></div>
<div class="t" style="left:346.70px;top:312.83px;font-size:4.7px;line-height:5.64px;color:#f0f0f0;width:12.00px;text-align:center;font-weight:700;">R</div>
<div style="left:360.60px;top:311.10px;width:12.00px;height:8.80px;background:#282a35;border-radius:2px;"></div>
<div class="t" style="left:360.60px;top:312.39px;font-size:4.6px;line-height:5.52px;color:#c8c8c8;width:12.00px;text-align:center;font-weight:700;">-</div>
<div style="left:375.10px;top:311.00px;width:12.60px;height:8.80px;background:#282a33;border:1px solid #3d3f4a;"></div>
<svg style="left:375.10px;top:311.00px;" width="12.6" height="8.8" viewBox="0 0 12.6 8.8"><path d="M2.4 2.8h2.2c1.6 0 1.6 3 3.2 3h2.2" fill="none" stroke="#4a4d5a" stroke-width="0.6"/></svg>
<svg style="left:404.60px;top:319.10px;" width="5" height="4" viewBox="0 0 5 4"><path d="M0.5 3h3.6M2.8 1.2l1.4 1.8" fill="none" stroke="#44464f" stroke-width="0.6"/></svg>
<div style="left:412.60px;top:297.40px;width:12.60px;height:28.35px;background:#242426;"></div>
<div style="left:413.60px;top:287.30px;width:4.10px;height:36.85px;background:#0b0b0d;"></div>
<div style="left:419.60px;top:287.30px;width:4.50px;height:36.85px;background:#0b0b0d;"></div>
<div style="left:425.20px;top:297.40px;width:2.10px;height:28.35px;background:#40532f;"></div>
<div style="left:311.00px;top:328.35px;width:4.60px;height:46.25px;background:#1c1d27;"></div>
<div style="left:315.60px;top:330.35px;width:97.00px;height:41.65px;background:#1a1a1e;"></div>
<div style="left:315.60px;top:330.35px;width:111.70px;height:13.30px;background:#6a6e38;"></div>
<div class="t" style="left:320.60px;top:334.49px;font-size:6.3px;line-height:7.56px;color:#f4f4f4;text-shadow:0 0 0.3px rgba(255,255,255,.3);">Hi-Hat Closed</div>
<div style="left:405.5px;top:334.25px;width:4.6px;height:4.6px;border-radius:50%;background:#4a9078;"></div>
<div style="left:317.90px;top:345.85px;width:54.40px;height:9.00px;background:#2a2d3a;"></div>
<div style="left:317.90px;top:345.85px;width:49.40px;height:9.00px;background:#3b4e69;"></div>
<div class="t" style="left:317.90px;top:347.90px;font-size:4.5px;line-height:5.40px;color:#e0e0e0;width:54.40px;text-align:center;font-weight:700;">0.0</div>
<div style="left:374.90px;top:345.75px;width:13.40px;height:9.20px;background:#23252f;border:1px solid #34363f;"></div>
<div class="t" style="left:374.90px;top:347.84px;font-size:4.6px;line-height:5.52px;color:#e8e8e8;width:13.40px;text-align:center;font-weight:700;">C</div>
<div style="left:318.80px;top:357.35px;width:11.20px;height:8.80px;background:#1e1f27;border-radius:1.5px;"></div>
<div class="t" style="left:318.40px;top:359.08px;font-size:4.7px;line-height:5.64px;color:#f0f0f0;width:12.00px;text-align:center;font-weight:700;">M</div>
<div style="left:332.95px;top:357.35px;width:11.20px;height:8.80px;background:#1e1f27;border-radius:1.5px;"></div>
<div class="t" style="left:332.55px;top:359.08px;font-size:4.7px;line-height:5.64px;color:#f0f0f0;width:12.00px;text-align:center;font-weight:700;">S</div>
<div style="left:347.10px;top:357.35px;width:11.20px;height:8.80px;background:#1e1f27;border-radius:1.5px;"></div>
<div class="t" style="left:346.70px;top:359.08px;font-size:4.7px;line-height:5.64px;color:#f0f0f0;width:12.00px;text-align:center;font-weight:700;">R</div>
<div style="left:360.60px;top:357.35px;width:12.00px;height:8.80px;background:#282a35;border-radius:2px;"></div>
<div class="t" style="left:360.60px;top:358.64px;font-size:4.6px;line-height:5.52px;color:#c8c8c8;width:12.00px;text-align:center;font-weight:700;">-</div>
<div style="left:375.10px;top:357.25px;width:12.60px;height:8.80px;background:#282a33;border:1px solid #3d3f4a;"></div>
<svg style="left:375.10px;top:357.25px;" width="12.6" height="8.8" viewBox="0 0 12.6 8.8"><path d="M2.4 2.8h2.2c1.6 0 1.6 3 3.2 3h2.2" fill="none" stroke="#4a4d5a" stroke-width="0.6"/></svg>
<svg style="left:404.60px;top:365.35px;" width="5" height="4" viewBox="0 0 5 4"><path d="M0.5 3h3.6M2.8 1.2l1.4 1.8" fill="none" stroke="#44464f" stroke-width="0.6"/></svg>
<div style="left:412.60px;top:343.65px;width:12.60px;height:28.35px;background:#242426;"></div>
<div style="left:413.60px;top:333.55px;width:4.10px;height:36.85px;background:#0b0b0d;"></div>
<div style="left:419.60px;top:333.55px;width:4.50px;height:36.85px;background:#0b0b0d;"></div>
<div style="left:412.40px;top:367.10px;width:5.60px;height:3.50px;background:#4fb858;"></div>
<div style="left:419.00px;top:367.10px;width:5.70px;height:3.50px;background:#4fb858;"></div>
<div style="left:425.20px;top:343.65px;width:2.10px;height:28.35px;background:#4b4e2c;"></div>
<div style="left:309.10px;top:376.60px;width:103.50px;height:41.65px;background:#1a1a1e;"></div>
<div style="left:309.10px;top:376.60px;width:118.20px;height:13.30px;background:#783a78;"></div>
<div class="t" style="left:313.60px;top:380.74px;font-size:6.3px;line-height:7.56px;color:#f4f4f4;text-shadow:0 0 0.3px rgba(255,255,255,.3);">Bass</div>
<div style="left:405.5px;top:380.50px;width:4.6px;height:4.6px;border-radius:50%;background:#4a80c4;"></div>
<div style="left:311.00px;top:392.10px;width:54.40px;height:9.00px;background:#2a2d3a;"></div>
<div style="left:311.00px;top:392.10px;width:49.40px;height:9.00px;background:#3b4e69;"></div>
<div class="t" style="left:311.00px;top:394.15px;font-size:4.5px;line-height:5.40px;color:#e0e0e0;width:54.40px;text-align:center;font-weight:700;">0.0</div>
<div style="left:368.00px;top:392.00px;width:13.40px;height:9.20px;background:#23252f;border:1px solid #34363f;"></div>
<div class="t" style="left:368.00px;top:394.09px;font-size:4.6px;line-height:5.52px;color:#e8e8e8;width:13.40px;text-align:center;font-weight:700;">C</div>
<div style="left:311.90px;top:403.60px;width:11.20px;height:8.80px;background:#1e1f27;border-radius:1.5px;"></div>
<div class="t" style="left:311.50px;top:405.33px;font-size:4.7px;line-height:5.64px;color:#f0f0f0;width:12.00px;text-align:center;font-weight:700;">M</div>
<div style="left:326.05px;top:403.60px;width:11.20px;height:8.80px;background:#1e1f27;border-radius:1.5px;"></div>
<div class="t" style="left:325.65px;top:405.33px;font-size:4.7px;line-height:5.64px;color:#f0f0f0;width:12.00px;text-align:center;font-weight:700;">S</div>
<div style="left:340.20px;top:403.60px;width:11.20px;height:8.80px;background:#1e1f27;border-radius:1.5px;"></div>
<div class="t" style="left:339.80px;top:405.33px;font-size:4.7px;line-height:5.64px;color:#f0f0f0;width:12.00px;text-align:center;font-weight:700;">R</div>
<div style="left:353.70px;top:403.60px;width:12.00px;height:8.80px;background:#282a35;border-radius:2px;"></div>
<div class="t" style="left:353.70px;top:404.89px;font-size:4.6px;line-height:5.52px;color:#c8c8c8;width:12.00px;text-align:center;font-weight:700;">-</div>
<div style="left:368.20px;top:403.50px;width:12.60px;height:8.80px;background:#282a33;border:1px solid #3d3f4a;"></div>
<svg style="left:368.20px;top:403.50px;" width="12.6" height="8.8" viewBox="0 0 12.6 8.8"><path d="M2.4 2.8h2.2c1.6 0 1.6 3 3.2 3h2.2" fill="none" stroke="#4a4d5a" stroke-width="0.6"/></svg>
<svg style="left:404.60px;top:411.60px;" width="5" height="4" viewBox="0 0 5 4"><path d="M0.5 3h3.6M2.8 1.2l1.4 1.8" fill="none" stroke="#44464f" stroke-width="0.6"/></svg>
<div style="left:412.60px;top:389.90px;width:12.60px;height:28.35px;background:#242426;"></div>
<div style="left:413.60px;top:379.80px;width:4.10px;height:36.85px;background:#0b0b0d;"></div>
<div style="left:419.60px;top:379.80px;width:4.50px;height:36.85px;background:#0b0b0d;"></div>
<div style="left:413.10px;top:401.17px;width:4.90px;height:15.48px;background:#58b85c;"></div>
<div style="left:419.20px;top:401.17px;width:5.40px;height:15.48px;background:#58b85c;"></div>
<div style="left:425.20px;top:389.90px;width:2.10px;height:28.35px;background:#542d54;"></div>
<div style="left:309.10px;top:422.85px;width:103.50px;height:41.65px;background:#1a1a1e;"></div>
<div style="left:309.10px;top:422.85px;width:118.20px;height:13.30px;background:#38367a;"></div>
<div class="t" style="left:313.60px;top:426.99px;font-size:6.3px;line-height:7.56px;color:#f4f4f4;text-shadow:0 0 0.3px rgba(255,255,255,.3);">Pads</div>
<div style="left:405.5px;top:426.75px;width:4.6px;height:4.6px;border-radius:50%;background:#3a7ac8;"></div>
<div style="left:311.00px;top:438.35px;width:54.40px;height:9.00px;background:#2a2d3a;"></div>
<div style="left:311.00px;top:438.35px;width:49.40px;height:9.00px;background:#3b4e69;"></div>
<div class="t" style="left:311.00px;top:440.40px;font-size:4.5px;line-height:5.40px;color:#e0e0e0;width:54.40px;text-align:center;font-weight:700;">0.0</div>
<div style="left:368.00px;top:438.25px;width:13.40px;height:9.20px;background:#23252f;border:1px solid #34363f;"></div>
<div class="t" style="left:368.00px;top:440.34px;font-size:4.6px;line-height:5.52px;color:#e8e8e8;width:13.40px;text-align:center;font-weight:700;">C</div>
<div style="left:311.90px;top:449.85px;width:11.20px;height:8.80px;background:#1e1f27;border-radius:1.5px;"></div>
<div class="t" style="left:311.50px;top:451.58px;font-size:4.7px;line-height:5.64px;color:#f0f0f0;width:12.00px;text-align:center;font-weight:700;">M</div>
<div style="left:326.05px;top:449.85px;width:11.20px;height:8.80px;background:#1e1f27;border-radius:1.5px;"></div>
<div class="t" style="left:325.65px;top:451.58px;font-size:4.7px;line-height:5.64px;color:#f0f0f0;width:12.00px;text-align:center;font-weight:700;">S</div>
<div style="left:340.20px;top:449.85px;width:11.20px;height:8.80px;background:#1e1f27;border-radius:1.5px;"></div>
<div class="t" style="left:339.80px;top:451.58px;font-size:4.7px;line-height:5.64px;color:#f0f0f0;width:12.00px;text-align:center;font-weight:700;">R</div>
<div style="left:353.70px;top:449.85px;width:12.00px;height:8.80px;background:#282a35;border-radius:2px;"></div>
<div class="t" style="left:353.70px;top:451.14px;font-size:4.6px;line-height:5.52px;color:#c8c8c8;width:12.00px;text-align:center;font-weight:700;">-</div>
<div style="left:368.20px;top:449.75px;width:12.60px;height:8.80px;background:#282a33;border:1px solid #3d3f4a;"></div>
<svg style="left:368.20px;top:449.75px;" width="12.6" height="8.8" viewBox="0 0 12.6 8.8"><path d="M2.4 2.8h2.2c1.6 0 1.6 3 3.2 3h2.2" fill="none" stroke="#4a4d5a" stroke-width="0.6"/></svg>
<svg style="left:404.60px;top:457.85px;" width="5" height="4" viewBox="0 0 5 4"><path d="M0.5 3h3.6M2.8 1.2l1.4 1.8" fill="none" stroke="#44464f" stroke-width="0.6"/></svg>
<div style="left:412.60px;top:436.15px;width:12.60px;height:28.35px;background:#242426;"></div>
<div style="left:413.60px;top:426.05px;width:4.10px;height:36.85px;background:#0b0b0d;"></div>
<div style="left:419.60px;top:426.05px;width:4.50px;height:36.85px;background:#0b0b0d;"></div>
<div style="left:413.10px;top:440.05px;width:4.90px;height:22.85px;background:linear-gradient(#b8b050 0%,#b4b04e 30%,#58b85c 38%);"></div>
<div style="left:419.20px;top:440.05px;width:5.40px;height:22.85px;background:linear-gradient(#b8b050 0%,#b4b04e 30%,#58b85c 38%);"></div>
<div style="left:425.20px;top:436.15px;width:2.10px;height:28.35px;background:#2c2b55;"></div>
<div style="left:309.10px;top:469.10px;width:103.50px;height:41.65px;background:#1a1a1e;"></div>
<div style="left:309.10px;top:469.10px;width:118.20px;height:13.30px;background:#2f5672;"></div>
<div class="t" style="left:313.60px;top:473.24px;font-size:6.3px;line-height:7.56px;color:#f4f4f4;text-shadow:0 0 0.3px rgba(255,255,255,.3);">Keys</div>
<div style="left:405.5px;top:473.00px;width:4.6px;height:4.6px;border-radius:50%;background:#2c7a98;"></div>
<div style="left:311.00px;top:484.60px;width:54.40px;height:9.00px;background:#2a2d3a;"></div>
<div style="left:311.00px;top:484.60px;width:49.40px;height:9.00px;background:#3b4e69;"></div>
<div class="t" style="left:311.00px;top:486.65px;font-size:4.5px;line-height:5.40px;color:#e0e0e0;width:54.40px;text-align:center;font-weight:700;">0.0</div>
<div style="left:368.00px;top:484.50px;width:13.40px;height:9.20px;background:#23252f;border:1px solid #34363f;"></div>
<div class="t" style="left:368.00px;top:486.59px;font-size:4.6px;line-height:5.52px;color:#e8e8e8;width:13.40px;text-align:center;font-weight:700;">C</div>
<div style="left:311.90px;top:496.10px;width:11.20px;height:8.80px;background:#1e1f27;border-radius:1.5px;"></div>
<div class="t" style="left:311.50px;top:497.83px;font-size:4.7px;line-height:5.64px;color:#f0f0f0;width:12.00px;text-align:center;font-weight:700;">M</div>
<div style="left:326.05px;top:496.10px;width:11.20px;height:8.80px;background:#1e1f27;border-radius:1.5px;"></div>
<div class="t" style="left:325.65px;top:497.83px;font-size:4.7px;line-height:5.64px;color:#f0f0f0;width:12.00px;text-align:center;font-weight:700;">S</div>
<div style="left:340.20px;top:496.10px;width:11.20px;height:8.80px;background:#1e1f27;border-radius:1.5px;"></div>
<div class="t" style="left:339.80px;top:497.83px;font-size:4.7px;line-height:5.64px;color:#f0f0f0;width:12.00px;text-align:center;font-weight:700;">R</div>
<div style="left:353.70px;top:496.10px;width:12.00px;height:8.80px;background:#282a35;border-radius:2px;"></div>
<div class="t" style="left:353.70px;top:497.39px;font-size:4.6px;line-height:5.52px;color:#c8c8c8;width:12.00px;text-align:center;font-weight:700;">-</div>
<div style="left:368.20px;top:496.00px;width:12.60px;height:8.80px;background:#282a33;border:1px solid #3d3f4a;"></div>
<svg style="left:368.20px;top:496.00px;" width="12.6" height="8.8" viewBox="0 0 12.6 8.8"><path d="M2.4 2.8h2.2c1.6 0 1.6 3 3.2 3h2.2" fill="none" stroke="#4a4d5a" stroke-width="0.6"/></svg>
<svg style="left:404.60px;top:504.10px;" width="5" height="4" viewBox="0 0 5 4"><path d="M0.5 3h3.6M2.8 1.2l1.4 1.8" fill="none" stroke="#44464f" stroke-width="0.6"/></svg>
<div style="left:412.60px;top:482.40px;width:12.60px;height:28.35px;background:#242426;"></div>
<div style="left:413.60px;top:472.30px;width:4.10px;height:36.85px;background:#0b0b0d;"></div>
<div style="left:419.60px;top:472.30px;width:4.50px;height:36.85px;background:#0b0b0d;"></div>
<div style="left:425.20px;top:482.40px;width:2.10px;height:28.35px;background:#273f50;"></div>
<div style="left:309.10px;top:515.35px;width:103.50px;height:27.65px;background:#1a1a1e;"></div>
<div style="left:309.10px;top:515.35px;width:118.20px;height:13.30px;background:#30765e;"></div>
<div class="t" style="left:313.60px;top:519.49px;font-size:6.3px;line-height:7.56px;color:#f4f4f4;text-shadow:0 0 0.3px rgba(255,255,255,.3);">Vox</div>
<div style="left:405.5px;top:519.25px;width:4.6px;height:4.6px;border-radius:50%;background:#348f84;"></div>
<div style="left:311.00px;top:530.85px;width:54.40px;height:9.00px;background:#2a2d3a;"></div>
<div style="left:311.00px;top:530.85px;width:49.40px;height:9.00px;background:#3b4e69;"></div>
<div class="t" style="left:311.00px;top:532.90px;font-size:4.5px;line-height:5.40px;color:#e0e0e0;width:54.40px;text-align:center;font-weight:700;">0.0</div>
<div style="left:368.00px;top:530.75px;width:13.40px;height:9.20px;background:#23252f;border:1px solid #34363f;"></div>
<div class="t" style="left:368.00px;top:532.84px;font-size:4.6px;line-height:5.52px;color:#e8e8e8;width:13.40px;text-align:center;font-weight:700;">C</div>
<div style="left:412.60px;top:528.65px;width:12.60px;height:14.35px;background:#242426;"></div>
<div style="left:413.60px;top:518.55px;width:4.10px;height:22.85px;background:#0b0b0d;"></div>
<div style="left:419.60px;top:518.55px;width:4.50px;height:22.85px;background:#0b0b0d;"></div>
<div style="left:413.10px;top:528.60px;width:4.90px;height:14.40px;background:#b8b84a;"></div>
<div style="left:419.20px;top:528.60px;width:5.40px;height:14.40px;background:#b8b84a;"></div>
<div style="left:425.20px;top:528.65px;width:2.10px;height:14.35px;background:#275344;"></div>
<div style="left:427.30px;top:147.90px;width:2.20px;height:395.10px;background:#18181b;"></div>
<div style="left:308.50px;top:542.90px;width:119.60px;height:1.00px;background:#3a3a3e;"></div>
<div style="left:308.90px;top:543.90px;width:118.20px;height:35.40px;background:#232631;"></div>
<div style="left:427.10px;top:543.90px;width:2.00px;height:46.80px;background:#34343a;"></div>
<div class="t" style="left:312.10px;top:546.19px;font-size:5.8px;line-height:6.96px;color:#f0f0f0;font-weight:700;">Master</div>
<div style="left:312.10px;top:554.30px;width:77.60px;height:9.30px;background:#2a2d3a;"></div>
<div style="left:312.10px;top:554.30px;width:70.80px;height:9.30px;background:#3d4f6b;"></div>
<div class="t" style="left:312.10px;top:556.06px;font-size:5.0px;line-height:6.00px;color:#e4e4e4;width:77.60px;text-align:center;font-weight:700;">0.0</div>
<svg style="left:393.60px;top:555.80px;" width="8" height="6.4" viewBox="0 0 8 6.4"><path d="M0.8 2.2h1.6l2.2-1.7v5.4l-2.2-1.7h-1.6z" fill="#888a94"/><path d="M5.6 1.8c1 .8 1 2 0 2.8" fill="none" stroke="#888a94" stroke-width="0.7"/></svg>
<div style="left:312.10px;top:565.40px;width:57.60px;height:4.60px;background:linear-gradient(90deg,#4cc45a 0%,#4cc45a 47%,#cccc52 57%,#cccc52 100%);"></div>
<div style="left:312.10px;top:571.10px;width:58.40px;height:4.90px;background:linear-gradient(90deg,#48ba56 0%,#48ba56 47%,#c6c64e 57%,#c6c64e 100%);"></div>
<div style="left:370.30px;top:571.10px;width:5.70px;height:4.90px;background:#d85c5c;"></div>
<div class="t" style="left:392.40px;top:568.31px;font-size:4.4px;line-height:5.28px;color:#ececec;font-weight:700;">1.9</div>
<div style="left:308.90px;top:579.30px;width:118.20px;height:0.80px;background:#34342e;"></div>
<div style="left:308.90px;top:580.10px;width:118.20px;height:10.60px;background:#121212;"></div>
<div style="left:429.50px;top:101.50px;width:610.00px;height:46.00px;background:#19191d;"></div>
<div style="left:429.50px;top:106.40px;width:610.00px;height:0.80px;background:#303034;"></div>
<div style="left:429.50px;top:116.60px;width:610.00px;height:0.80px;background:#303034;"></div>
<div style="left:429.50px;top:147.20px;width:610.00px;height:396.00px;background:#1b1b20;"></div>
<div style="left:429.50px;top:147.20px;width:581.50px;height:44.00px;background:#2d2d31;"></div>
<div style="left:429.50px;top:147.20px;width:610.00px;height:0.90px;background:#3c3c41;"></div>
<div style="left:429.50px;top:191.40px;width:610.00px;height:0.90px;background:#3c3c41;"></div>
<div style="left:429.50px;top:237.60px;width:610.00px;height:0.90px;background:#3c3c41;"></div>
<div style="left:429.50px;top:283.90px;width:610.00px;height:0.90px;background:#3c3c41;"></div>
<div style="left:429.50px;top:330.10px;width:610.00px;height:0.90px;background:#3c3c41;"></div>
<div style="left:429.50px;top:376.40px;width:610.00px;height:0.90px;background:#3c3c41;"></div>
<div style="left:429.50px;top:422.60px;width:610.00px;height:0.90px;background:#3c3c41;"></div>
<div style="left:429.50px;top:468.90px;width:610.00px;height:0.90px;background:#3c3c41;"></div>
<div style="left:429.50px;top:515.10px;width:610.00px;height:0.90px;background:#3c3c41;"></div>
<div style="left:429.50px;top:542.90px;width:610.00px;height:0.90px;background:#3c3c41;"></div>
<div class="t" style="left:451.35px;top:122.55px;font-size:6.2px;line-height:7.44px;color:#e4e4e4;width:20.00px;text-align:center;font-weight:700;">3</div>
<div class="t" style="left:488.00px;top:122.55px;font-size:6.2px;line-height:7.44px;color:#e4e4e4;width:20.00px;text-align:center;font-weight:700;">5</div>
<div class="t" style="left:524.65px;top:122.55px;font-size:6.2px;line-height:7.44px;color:#e4e4e4;width:20.00px;text-align:center;font-weight:700;">7</div>
<div class="t" style="left:561.30px;top:122.55px;font-size:6.2px;line-height:7.44px;color:#e4e4e4;width:20.00px;text-align:center;font-weight:700;">9</div>
<div class="t" style="left:597.95px;top:122.55px;font-size:6.2px;line-height:7.44px;color:#e4e4e4;width:20.00px;text-align:center;font-weight:700;">11</div>
<div class="t" style="left:634.60px;top:122.55px;font-size:6.2px;line-height:7.44px;color:#e4e4e4;width:20.00px;text-align:center;font-weight:700;">13</div>
<div class="t" style="left:671.25px;top:122.55px;font-size:6.2px;line-height:7.44px;color:#e4e4e4;width:20.00px;text-align:center;font-weight:700;">15</div>
<div class="t" style="left:707.90px;top:122.55px;font-size:6.2px;line-height:7.44px;color:#e4e4e4;width:20.00px;text-align:center;font-weight:700;">17</div>
<div class="t" style="left:744.55px;top:122.55px;font-size:6.2px;line-height:7.44px;color:#e4e4e4;width:20.00px;text-align:center;font-weight:700;">19</div>
<div class="t" style="left:781.20px;top:122.55px;font-size:6.2px;line-height:7.44px;color:#e4e4e4;width:20.00px;text-align:center;font-weight:700;">21</div>
<div class="t" style="left:817.85px;top:122.55px;font-size:6.2px;line-height:7.44px;color:#e4e4e4;width:20.00px;text-align:center;font-weight:700;">23</div>
<div class="t" style="left:854.50px;top:122.55px;font-size:6.2px;line-height:7.44px;color:#e4e4e4;width:20.00px;text-align:center;font-weight:700;">25</div>
<div class="t" style="left:891.15px;top:122.55px;font-size:6.2px;line-height:7.44px;color:#e4e4e4;width:20.00px;text-align:center;font-weight:700;">27</div>
<div class="t" style="left:927.80px;top:122.55px;font-size:6.2px;line-height:7.44px;color:#e4e4e4;width:20.00px;text-align:center;font-weight:700;">29</div>
<div class="t" style="left:964.45px;top:122.55px;font-size:6.2px;line-height:7.44px;color:#e4e4e4;width:20.00px;text-align:center;font-weight:700;">31</div>
<div class="t" style="left:1001.10px;top:122.55px;font-size:6.2px;line-height:7.44px;color:#e4e4e4;width:20.00px;text-align:center;font-weight:700;">33</div>
<div style="left:429.50px;top:131.70px;width:582.10px;height:8.20px;background:linear-gradient(#4ea468 0%,#4aa064 15%,#2c6e43 25%,#2c6e43 72%,#3a8a54 82%,#3a8a54 100%);"></div>
<svg style="left:1004.50px;top:133.60px;" width="6" height="6" viewBox="0 0 6 6"><path d="M5.6 0.4v4.6h-4.6z" fill="#5cc080"/></svg>
<svg style="left:0;top:0;" width="1400" height="700" viewBox="0 0 1400 700"><rect x="460.70" y="139.90" width="1.30" height="403.00" fill="#77777b"/><rect x="497.35" y="139.90" width="1.30" height="403.00" fill="#77777b"/><rect x="534.00" y="139.90" width="1.30" height="403.00" fill="#77777b"/><rect x="570.65" y="139.90" width="1.30" height="403.00" fill="#77777b"/><rect x="607.30" y="139.90" width="1.30" height="403.00" fill="#77777b"/><rect x="643.95" y="139.90" width="1.30" height="403.00" fill="#77777b"/><rect x="680.60" y="139.90" width="1.30" height="403.00" fill="#77777b"/><rect x="717.25" y="139.90" width="1.30" height="403.00" fill="#77777b"/><rect x="753.90" y="139.90" width="1.30" height="403.00" fill="#77777b"/><rect x="790.55" y="139.90" width="1.30" height="403.00" fill="#77777b"/><rect x="827.20" y="139.90" width="1.30" height="403.00" fill="#77777b"/><rect x="863.85" y="139.90" width="1.30" height="403.00" fill="#77777b"/><rect x="900.50" y="139.90" width="1.30" height="403.00" fill="#77777b"/><rect x="937.15" y="139.90" width="1.30" height="403.00" fill="#77777b"/><rect x="973.80" y="139.90" width="1.30" height="403.00" fill="#77777b"/></svg>
<div style="left:429.30px;top:192.90px;width:123.30px;height:43.10px;background:#5577b0;border-radius:0 1.5px 1.5px 0;"></div>
<div style="left:429.30px;top:192.90px;width:123.30px;height:10.20px;background:#6b92d8;border-radius:0 1.5px 0 0;"></div>
<svg style="left:0;top:0;" width="1400" height="700" viewBox="0 0 1400 700"><circle cx="437.53" cy="219.30" r="1.4" fill="#a9c0ee"/><circle cx="455.85" cy="219.30" r="1.4" fill="#a9c0ee"/><circle cx="445.04" cy="219.30" r="0.9" fill="#8ea8dc"/><circle cx="474.18" cy="219.30" r="1.4" fill="#a9c0ee"/><circle cx="463.37" cy="219.30" r="0.9" fill="#8ea8dc"/><circle cx="492.50" cy="219.30" r="1.4" fill="#a9c0ee"/><circle cx="481.69" cy="219.30" r="0.9" fill="#8ea8dc"/><circle cx="510.83" cy="219.30" r="1.4" fill="#a9c0ee"/><circle cx="500.02" cy="219.30" r="0.9" fill="#8ea8dc"/><circle cx="529.15" cy="219.30" r="1.4" fill="#a9c0ee"/><circle cx="518.34" cy="219.30" r="0.9" fill="#8ea8dc"/><circle cx="547.48" cy="219.30" r="1.4" fill="#a9c0ee"/><circle cx="536.67" cy="219.30" r="0.9" fill="#8ea8dc"/></svg>
<svg style="left:0;top:0;" width="1400" height="700" viewBox="0 0 1400 700"><rect x="460.70" y="192.90" width="1.30" height="43.10" fill="#8d97ad"/><rect x="497.35" y="192.90" width="1.30" height="43.10" fill="#8d97ad"/><rect x="534.00" y="192.90" width="1.30" height="43.10" fill="#8d97ad"/></svg>
<svg style="left:0;top:0;" width="1400" height="700" viewBox="0 0 1400 700"><rect x="442.28" y="192.90" width="1.05" height="43.10" fill="#9ab4e4"/><rect x="443.33" y="192.90" width="0.95" height="43.10" fill="#40598c"/><path d="M440.43 192.70h5.2l-2.6 2.6z" fill="#e4e8f0"/><rect x="460.60" y="192.90" width="1.05" height="43.10" fill="#9ab4e4"/><rect x="461.65" y="192.90" width="0.95" height="43.10" fill="#40598c"/><path d="M458.75 192.70h5.2l-2.6 2.6z" fill="#e4e8f0"/><rect x="478.93" y="192.90" width="1.05" height="43.10" fill="#9ab4e4"/><rect x="479.98" y="192.90" width="0.95" height="43.10" fill="#40598c"/><path d="M477.07 192.70h5.2l-2.6 2.6z" fill="#e4e8f0"/><rect x="497.25" y="192.90" width="1.05" height="43.10" fill="#9ab4e4"/><rect x="498.30" y="192.90" width="0.95" height="43.10" fill="#40598c"/><path d="M495.40 192.70h5.2l-2.6 2.6z" fill="#e4e8f0"/><rect x="515.58" y="192.90" width="1.05" height="43.10" fill="#9ab4e4"/><rect x="516.62" y="192.90" width="0.95" height="43.10" fill="#40598c"/><path d="M513.73 192.70h5.2l-2.6 2.6z" fill="#e4e8f0"/><rect x="533.90" y="192.90" width="1.05" height="43.10" fill="#9ab4e4"/><rect x="534.95" y="192.90" width="0.95" height="43.10" fill="#40598c"/><path d="M532.05 192.70h5.2l-2.6 2.6z" fill="#e4e8f0"/></svg>
<div class="t" style="left:429.30px;top:194.80px;width:60px;height:7px;overflow:hidden;"><span style="position:absolute;left:-2.80px;top:0;font-size:4.7px;font-weight:700;line-height:6.4px;color:#1c2c50;">MIDI 1 L</span></div>
<svg style="left:543.00px;top:195.50px;" width="8" height="4.6" viewBox="0 0 8 4.6"><ellipse cx="2.1" cy="2.3" rx="1.55" ry="1.45" fill="none" stroke="#1c2c50" stroke-width="0.7"/><ellipse cx="5.7" cy="2.3" rx="1.55" ry="1.45" fill="none" stroke="#1c2c50" stroke-width="0.7"/></svg>
<div style="left:572.00px;top:192.90px;width:438.60px;height:43.10px;background:#5577b0;border-radius:1.5px;"></div>
<div style="left:572.00px;top:192.90px;width:438.60px;height:10.20px;background:#6b92d8;border-radius:1.5px 1.5px 0 0;"></div>
<svg style="left:0;top:0;" width="1400" height="700" viewBox="0 0 1400 700"><circle cx="584.13" cy="219.30" r="1.4" fill="#a9c0ee"/><circle cx="573.32" cy="219.30" r="0.9" fill="#8ea8dc"/><circle cx="602.45" cy="219.30" r="1.4" fill="#a9c0ee"/><circle cx="591.64" cy="219.30" r="0.9" fill="#8ea8dc"/><circle cx="620.78" cy="219.30" r="1.4" fill="#a9c0ee"/><circle cx="609.97" cy="219.30" r="0.9" fill="#8ea8dc"/><circle cx="639.10" cy="219.30" r="1.4" fill="#a9c0ee"/><circle cx="628.29" cy="219.30" r="0.9" fill="#8ea8dc"/><circle cx="657.43" cy="219.30" r="1.4" fill="#a9c0ee"/><circle cx="646.62" cy="219.30" r="0.9" fill="#8ea8dc"/><circle cx="675.75" cy="219.30" r="1.4" fill="#a9c0ee"/><circle cx="664.94" cy="219.30" r="0.9" fill="#8ea8dc"/><circle cx="694.08" cy="219.30" r="1.4" fill="#a9c0ee"/><circle cx="683.27" cy="219.30" r="0.9" fill="#8ea8dc"/><circle cx="712.40" cy="219.30" r="1.4" fill="#a9c0ee"/><circle cx="701.59" cy="219.30" r="0.9" fill="#8ea8dc"/><circle cx="730.73" cy="219.30" r="1.4" fill="#a9c0ee"/><circle cx="719.92" cy="219.30" r="0.9" fill="#8ea8dc"/><circle cx="749.05" cy="219.30" r="1.4" fill="#a9c0ee"/><circle cx="738.24" cy="219.30" r="0.9" fill="#8ea8dc"/><circle cx="767.38" cy="219.30" r="1.4" fill="#a9c0ee"/><circle cx="756.57" cy="219.30" r="0.9" fill="#8ea8dc"/><circle cx="785.70" cy="219.30" r="1.4" fill="#a9c0ee"/><circle cx="774.89" cy="219.30" r="0.9" fill="#8ea8dc"/><circle cx="804.03" cy="219.30" r="1.4" fill="#a9c0ee"/><circle cx="793.22" cy="219.30" r="0.9" fill="#8ea8dc"/><circle cx="822.35" cy="219.30" r="1.4" fill="#a9c0ee"/><circle cx="811.54" cy="219.30" r="0.9" fill="#8ea8dc"/><circle cx="840.68" cy="219.30" r="1.4" fill="#a9c0ee"/><circle cx="829.87" cy="219.30" r="0.9" fill="#8ea8dc"/><circle cx="859.00" cy="219.30" r="1.4" fill="#a9c0ee"/><circle cx="848.19" cy="219.30" r="0.9" fill="#8ea8dc"/><circle cx="877.33" cy="219.30" r="1.4" fill="#a9c0ee"/><circle cx="866.52" cy="219.30" r="0.9" fill="#8ea8dc"/><circle cx="895.65" cy="219.30" r="1.4" fill="#a9c0ee"/><circle cx="884.84" cy="219.30" r="0.9" fill="#8ea8dc"/><circle cx="913.98" cy="219.30" r="1.4" fill="#a9c0ee"/><circle cx="903.17" cy="219.30" r="0.9" fill="#8ea8dc"/><circle cx="932.30" cy="219.30" r="1.4" fill="#a9c0ee"/><circle cx="921.49" cy="219.30" r="0.9" fill="#8ea8dc"/><circle cx="950.63" cy="219.30" r="1.4" fill="#a9c0ee"/><circle cx="939.82" cy="219.30" r="0.9" fill="#8ea8dc"/><circle cx="968.95" cy="219.30" r="1.4" fill="#a9c0ee"/><circle cx="958.14" cy="219.30" r="0.9" fill="#8ea8dc"/><circle cx="987.28" cy="219.30" r="1.4" fill="#a9c0ee"/><circle cx="976.47" cy="219.30" r="0.9" fill="#8ea8dc"/><circle cx="1005.60" cy="219.30" r="1.4" fill="#a9c0ee"/><circle cx="994.79" cy="219.30" r="0.9" fill="#8ea8dc"/></svg>
<svg style="left:0;top:0;" width="1400" height="700" viewBox="0 0 1400 700"><rect x="607.30" y="192.90" width="1.30" height="43.10" fill="#8d97ad"/><rect x="643.95" y="192.90" width="1.30" height="43.10" fill="#8d97ad"/><rect x="680.60" y="192.90" width="1.30" height="43.10" fill="#8d97ad"/><rect x="717.25" y="192.90" width="1.30" height="43.10" fill="#8d97ad"/><rect x="753.90" y="192.90" width="1.30" height="43.10" fill="#8d97ad"/><rect x="790.55" y="192.90" width="1.30" height="43.10" fill="#8d97ad"/><rect x="827.20" y="192.90" width="1.30" height="43.10" fill="#8d97ad"/><rect x="863.85" y="192.90" width="1.30" height="43.10" fill="#8d97ad"/><rect x="900.50" y="192.90" width="1.30" height="43.10" fill="#8d97ad"/><rect x="937.15" y="192.90" width="1.30" height="43.10" fill="#8d97ad"/><rect x="973.80" y="192.90" width="1.30" height="43.10" fill="#8d97ad"/></svg>
<svg style="left:0;top:0;" width="1400" height="700" viewBox="0 0 1400 700"><rect x="588.88" y="192.90" width="1.05" height="43.10" fill="#9ab4e4"/><rect x="589.92" y="192.90" width="0.95" height="43.10" fill="#40598c"/><path d="M587.02 192.70h5.2l-2.6 2.6z" fill="#e4e8f0"/><rect x="607.20" y="192.90" width="1.05" height="43.10" fill="#9ab4e4"/><rect x="608.25" y="192.90" width="0.95" height="43.10" fill="#40598c"/><path d="M605.35 192.70h5.2l-2.6 2.6z" fill="#e4e8f0"/><rect x="625.52" y="192.90" width="1.05" height="43.10" fill="#9ab4e4"/><rect x="626.57" y="192.90" width="0.95" height="43.10" fill="#40598c"/><path d="M623.67 192.70h5.2l-2.6 2.6z" fill="#e4e8f0"/><rect x="643.85" y="192.90" width="1.05" height="43.10" fill="#9ab4e4"/><rect x="644.90" y="192.90" width="0.95" height="43.10" fill="#40598c"/><path d="M642.00 192.70h5.2l-2.6 2.6z" fill="#e4e8f0"/><rect x="662.17" y="192.90" width="1.05" height="43.10" fill="#9ab4e4"/><rect x="663.22" y="192.90" width="0.95" height="43.10" fill="#40598c"/><path d="M660.32 192.70h5.2l-2.6 2.6z" fill="#e4e8f0"/><rect x="680.50" y="192.90" width="1.05" height="43.10" fill="#9ab4e4"/><rect x="681.55" y="192.90" width="0.95" height="43.10" fill="#40598c"/><path d="M678.65 192.70h5.2l-2.6 2.6z" fill="#e4e8f0"/><rect x="698.83" y="192.90" width="1.05" height="43.10" fill="#9ab4e4"/><rect x="699.88" y="192.90" width="0.95" height="43.10" fill="#40598c"/><path d="M696.98 192.70h5.2l-2.6 2.6z" fill="#e4e8f0"/><rect x="717.15" y="192.90" width="1.05" height="43.10" fill="#9ab4e4"/><rect x="718.20" y="192.90" width="0.95" height="43.10" fill="#40598c"/><path d="M715.30 192.70h5.2l-2.6 2.6z" fill="#e4e8f0"/><rect x="735.48" y="192.90" width="1.05" height="43.10" fill="#9ab4e4"/><rect x="736.52" y="192.90" width="0.95" height="43.10" fill="#40598c"/><path d="M733.62 192.70h5.2l-2.6 2.6z" fill="#e4e8f0"/><rect x="753.80" y="192.90" width="1.05" height="43.10" fill="#9ab4e4"/><rect x="754.85" y="192.90" width="0.95" height="43.10" fill="#40598c"/><path d="M751.95 192.70h5.2l-2.6 2.6z" fill="#e4e8f0"/><rect x="772.12" y="192.90" width="1.05" height="43.10" fill="#9ab4e4"/><rect x="773.17" y="192.90" width="0.95" height="43.10" fill="#40598c"/><path d="M770.27 192.70h5.2l-2.6 2.6z" fill="#e4e8f0"/><rect x="790.45" y="192.90" width="1.05" height="43.10" fill="#9ab4e4"/><rect x="791.50" y="192.90" width="0.95" height="43.10" fill="#40598c"/><path d="M788.60 192.70h5.2l-2.6 2.6z" fill="#e4e8f0"/><rect x="808.78" y="192.90" width="1.05" height="43.10" fill="#9ab4e4"/><rect x="809.83" y="192.90" width="0.95" height="43.10" fill="#40598c"/><path d="M806.93 192.70h5.2l-2.6 2.6z" fill="#e4e8f0"/><rect x="827.10" y="192.90" width="1.05" height="43.10" fill="#9ab4e4"/><rect x="828.15" y="192.90" width="0.95" height="43.10" fill="#40598c"/><path d="M825.25 192.70h5.2l-2.6 2.6z" fill="#e4e8f0"/><rect x="845.42" y="192.90" width="1.05" height="43.10" fill="#9ab4e4"/><rect x="846.47" y="192.90" width="0.95" height="43.10" fill="#40598c"/><path d="M843.57 192.70h5.2l-2.6 2.6z" fill="#e4e8f0"/><rect x="863.75" y="192.90" width="1.05" height="43.10" fill="#9ab4e4"/><rect x="864.80" y="192.90" width="0.95" height="43.10" fill="#40598c"/><path d="M861.90 192.70h5.2l-2.6 2.6z" fill="#e4e8f0"/><rect x="882.08" y="192.90" width="1.05" height="43.10" fill="#9ab4e4"/><rect x="883.12" y="192.90" width="0.95" height="43.10" fill="#40598c"/><path d="M880.23 192.70h5.2l-2.6 2.6z" fill="#e4e8f0"/><rect x="900.40" y="192.90" width="1.05" height="43.10" fill="#9ab4e4"/><rect x="901.45" y="192.90" width="0.95" height="43.10" fill="#40598c"/><path d="M898.55 192.70h5.2l-2.6 2.6z" fill="#e4e8f0"/><rect x="918.73" y="192.90" width="1.05" height="43.10" fill="#9ab4e4"/><rect x="919.77" y="192.90" width="0.95" height="43.10" fill="#40598c"/><path d="M916.88 192.70h5.2l-2.6 2.6z" fill="#e4e8f0"/><rect x="937.05" y="192.90" width="1.05" height="43.10" fill="#9ab4e4"/><rect x="938.10" y="192.90" width="0.95" height="43.10" fill="#40598c"/><path d="M935.20 192.70h5.2l-2.6 2.6z" fill="#e4e8f0"/><rect x="955.38" y="192.90" width="1.05" height="43.10" fill="#9ab4e4"/><rect x="956.42" y="192.90" width="0.95" height="43.10" fill="#40598c"/><path d="M953.52 192.70h5.2l-2.6 2.6z" fill="#e4e8f0"/><rect x="973.70" y="192.90" width="1.05" height="43.10" fill="#9ab4e4"/><rect x="974.75" y="192.90" width="0.95" height="43.10" fill="#40598c"/><path d="M971.85 192.70h5.2l-2.6 2.6z" fill="#e4e8f0"/><rect x="992.02" y="192.90" width="1.05" height="43.10" fill="#9ab4e4"/><rect x="993.07" y="192.90" width="0.95" height="43.10" fill="#40598c"/><path d="M990.17 192.70h5.2l-2.6 2.6z" fill="#e4e8f0"/></svg>
<div class="t" style="left:572.00px;top:194.80px;width:60px;height:7px;overflow:hidden;"><span style="position:absolute;left:1.80px;top:0;font-size:4.7px;font-weight:700;line-height:6.4px;color:#1c2c50;">MIDI 1 R R</span></div>
<svg style="left:1001.00px;top:195.50px;" width="8" height="4.6" viewBox="0 0 8 4.6"><ellipse cx="2.1" cy="2.3" rx="1.55" ry="1.45" fill="none" stroke="#1c2c50" stroke-width="0.7"/><ellipse cx="5.7" cy="2.3" rx="1.55" ry="1.45" fill="none" stroke="#1c2c50" stroke-width="0.7"/></svg>
<div style="left:429.30px;top:239.20px;width:123.30px;height:43.10px;background:#4ca88c;border-radius:0 1.5px 1.5px 0;"></div>
<div style="left:429.30px;top:239.20px;width:123.30px;height:10.20px;background:#66d4ac;border-radius:0 1.5px 0 0;"></div>
<svg style="left:0;top:0;" width="1400" height="700" viewBox="0 0 1400 700"><circle cx="430.80" cy="265.60" r="1.25" fill="#a8ecd2"/><circle cx="439.96" cy="265.60" r="1.25" fill="#a8ecd2"/><circle cx="449.13" cy="265.60" r="1.25" fill="#a8ecd2"/><circle cx="458.29" cy="265.60" r="1.25" fill="#a8ecd2"/><circle cx="467.45" cy="265.60" r="1.25" fill="#a8ecd2"/><circle cx="476.61" cy="265.60" r="1.25" fill="#a8ecd2"/><circle cx="485.78" cy="265.60" r="1.25" fill="#a8ecd2"/><circle cx="494.94" cy="265.60" r="1.25" fill="#a8ecd2"/><circle cx="504.10" cy="265.60" r="1.25" fill="#a8ecd2"/><circle cx="513.26" cy="265.60" r="1.25" fill="#a8ecd2"/><circle cx="522.43" cy="265.60" r="1.25" fill="#a8ecd2"/><circle cx="531.59" cy="265.60" r="1.25" fill="#a8ecd2"/><circle cx="540.75" cy="265.60" r="1.25" fill="#a8ecd2"/><circle cx="549.91" cy="265.60" r="1.25" fill="#a8ecd2"/></svg>
<svg style="left:0;top:0;" width="1400" height="700" viewBox="0 0 1400 700"><rect x="460.70" y="239.20" width="1.30" height="43.10" fill="#8dbcaa"/><rect x="497.35" y="239.20" width="1.30" height="43.10" fill="#8dbcaa"/><rect x="534.00" y="239.20" width="1.30" height="43.10" fill="#8dbcaa"/></svg>
<svg style="left:0;top:0;" width="1400" height="700" viewBox="0 0 1400 700"><rect x="442.28" y="239.20" width="1.05" height="43.10" fill="#98e4c8"/><rect x="443.33" y="239.20" width="0.95" height="43.10" fill="#378068"/><path d="M440.43 239.00h5.2l-2.6 2.6z" fill="#e0f0e8"/><rect x="460.60" y="239.20" width="1.05" height="43.10" fill="#98e4c8"/><rect x="461.65" y="239.20" width="0.95" height="43.10" fill="#378068"/><path d="M458.75 239.00h5.2l-2.6 2.6z" fill="#e0f0e8"/><rect x="478.93" y="239.20" width="1.05" height="43.10" fill="#98e4c8"/><rect x="479.98" y="239.20" width="0.95" height="43.10" fill="#378068"/><path d="M477.07 239.00h5.2l-2.6 2.6z" fill="#e0f0e8"/><rect x="497.25" y="239.20" width="1.05" height="43.10" fill="#98e4c8"/><rect x="498.30" y="239.20" width="0.95" height="43.10" fill="#378068"/><path d="M495.40 239.00h5.2l-2.6 2.6z" fill="#e0f0e8"/><rect x="515.58" y="239.20" width="1.05" height="43.10" fill="#98e4c8"/><rect x="516.62" y="239.20" width="0.95" height="43.10" fill="#378068"/><path d="M513.73 239.00h5.2l-2.6 2.6z" fill="#e0f0e8"/><rect x="533.90" y="239.20" width="1.05" height="43.10" fill="#98e4c8"/><rect x="534.95" y="239.20" width="0.95" height="43.10" fill="#378068"/><path d="M532.05 239.00h5.2l-2.6 2.6z" fill="#e0f0e8"/></svg>
<div class="t" style="left:429.30px;top:241.10px;width:60px;height:7px;overflow:hidden;"><span style="position:absolute;left:-2.80px;top:0;font-size:4.7px;font-weight:700;line-height:6.4px;color:#14503c;">MIDI 2 L</span></div>
<svg style="left:543.00px;top:241.80px;" width="8" height="4.6" viewBox="0 0 8 4.6"><ellipse cx="2.1" cy="2.3" rx="1.55" ry="1.45" fill="none" stroke="#14503c" stroke-width="0.7"/><ellipse cx="5.7" cy="2.3" rx="1.55" ry="1.45" fill="none" stroke="#14503c" stroke-width="0.7"/></svg>
<div style="left:572.00px;top:239.20px;width:438.60px;height:43.10px;background:#4ca88c;border-radius:1.5px;"></div>
<div style="left:572.00px;top:239.20px;width:438.60px;height:10.20px;background:#66d4ac;border-radius:1.5px 1.5px 0 0;"></div>
<svg style="left:0;top:0;" width="1400" height="700" viewBox="0 0 1400 700"><circle cx="577.40" cy="265.60" r="1.25" fill="#a8ecd2"/><circle cx="586.56" cy="265.60" r="1.25" fill="#a8ecd2"/><circle cx="595.73" cy="265.60" r="1.25" fill="#a8ecd2"/><circle cx="604.89" cy="265.60" r="1.25" fill="#a8ecd2"/><circle cx="614.05" cy="265.60" r="1.25" fill="#a8ecd2"/><circle cx="623.21" cy="265.60" r="1.25" fill="#a8ecd2"/><circle cx="632.38" cy="265.60" r="1.25" fill="#a8ecd2"/><circle cx="641.54" cy="265.60" r="1.25" fill="#a8ecd2"/><circle cx="650.70" cy="265.60" r="1.25" fill="#a8ecd2"/><circle cx="659.86" cy="265.60" r="1.25" fill="#a8ecd2"/><circle cx="669.03" cy="265.60" r="1.25" fill="#a8ecd2"/><circle cx="678.19" cy="265.60" r="1.25" fill="#a8ecd2"/><circle cx="687.35" cy="265.60" r="1.25" fill="#a8ecd2"/><circle cx="696.51" cy="265.60" r="1.25" fill="#a8ecd2"/><circle cx="705.68" cy="265.60" r="1.25" fill="#a8ecd2"/><circle cx="714.84" cy="265.60" r="1.25" fill="#a8ecd2"/><circle cx="724.00" cy="265.60" r="1.25" fill="#a8ecd2"/><circle cx="733.16" cy="265.60" r="1.25" fill="#a8ecd2"/><circle cx="742.33" cy="265.60" r="1.25" fill="#a8ecd2"/><circle cx="751.49" cy="265.60" r="1.25" fill="#a8ecd2"/><circle cx="760.65" cy="265.60" r="1.25" fill="#a8ecd2"/><circle cx="769.81" cy="265.60" r="1.25" fill="#a8ecd2"/><circle cx="778.98" cy="265.60" r="1.25" fill="#a8ecd2"/><circle cx="788.14" cy="265.60" r="1.25" fill="#a8ecd2"/><circle cx="797.30" cy="265.60" r="1.25" fill="#a8ecd2"/><circle cx="806.46" cy="265.60" r="1.25" fill="#a8ecd2"/><circle cx="815.63" cy="265.60" r="1.25" fill="#a8ecd2"/><circle cx="824.79" cy="265.60" r="1.25" fill="#a8ecd2"/><circle cx="833.95" cy="265.60" r="1.25" fill="#a8ecd2"/><circle cx="843.11" cy="265.60" r="1.25" fill="#a8ecd2"/><circle cx="852.28" cy="265.60" r="1.25" fill="#a8ecd2"/><circle cx="861.44" cy="265.60" r="1.25" fill="#a8ecd2"/><circle cx="870.60" cy="265.60" r="1.25" fill="#a8ecd2"/><circle cx="879.76" cy="265.60" r="1.25" fill="#a8ecd2"/><circle cx="888.93" cy="265.60" r="1.25" fill="#a8ecd2"/><circle cx="898.09" cy="265.60" r="1.25" fill="#a8ecd2"/><circle cx="907.25" cy="265.60" r="1.25" fill="#a8ecd2"/><circle cx="916.41" cy="265.60" r="1.25" fill="#a8ecd2"/><circle cx="925.58" cy="265.60" r="1.25" fill="#a8ecd2"/><circle cx="934.74" cy="265.60" r="1.25" fill="#a8ecd2"/><circle cx="943.90" cy="265.60" r="1.25" fill="#a8ecd2"/><circle cx="953.06" cy="265.60" r="1.25" fill="#a8ecd2"/><circle cx="962.23" cy="265.60" r="1.25" fill="#a8ecd2"/><circle cx="971.39" cy="265.60" r="1.25" fill="#a8ecd2"/><circle cx="980.55" cy="265.60" r="1.25" fill="#a8ecd2"/><circle cx="989.71" cy="265.60" r="1.25" fill="#a8ecd2"/><circle cx="998.88" cy="265.60" r="1.25" fill="#a8ecd2"/><circle cx="1008.04" cy="265.60" r="1.25" fill="#a8ecd2"/></svg>
<svg style="left:0;top:0;" width="1400" height="700" viewBox="0 0 1400 700"><rect x="607.30" y="239.20" width="1.30" height="43.10" fill="#8dbcaa"/><rect x="643.95" y="239.20" width="1.30" height="43.10" fill="#8dbcaa"/><rect x="680.60" y="239.20" width="1.30" height="43.10" fill="#8dbcaa"/><rect x="717.25" y="239.20" width="1.30" height="43.10" fill="#8dbcaa"/><rect x="753.90" y="239.20" width="1.30" height="43.10" fill="#8dbcaa"/><rect x="790.55" y="239.20" width="1.30" height="43.10" fill="#8dbcaa"/><rect x="827.20" y="239.20" width="1.30" height="43.10" fill="#8dbcaa"/><rect x="863.85" y="239.20" width="1.30" height="43.10" fill="#8dbcaa"/><rect x="900.50" y="239.20" width="1.30" height="43.10" fill="#8dbcaa"/><rect x="937.15" y="239.20" width="1.30" height="43.10" fill="#8dbcaa"/><rect x="973.80" y="239.20" width="1.30" height="43.10" fill="#8dbcaa"/></svg>
<svg style="left:0;top:0;" width="1400" height="700" viewBox="0 0 1400 700"><rect x="588.88" y="239.20" width="1.05" height="43.10" fill="#98e4c8"/><rect x="589.92" y="239.20" width="0.95" height="43.10" fill="#378068"/><path d="M587.02 239.00h5.2l-2.6 2.6z" fill="#e0f0e8"/><rect x="607.20" y="239.20" width="1.05" height="43.10" fill="#98e4c8"/><rect x="608.25" y="239.20" width="0.95" height="43.10" fill="#378068"/><path d="M605.35 239.00h5.2l-2.6 2.6z" fill="#e0f0e8"/><rect x="625.52" y="239.20" width="1.05" height="43.10" fill="#98e4c8"/><rect x="626.57" y="239.20" width="0.95" height="43.10" fill="#378068"/><path d="M623.67 239.00h5.2l-2.6 2.6z" fill="#e0f0e8"/><rect x="643.85" y="239.20" width="1.05" height="43.10" fill="#98e4c8"/><rect x="644.90" y="239.20" width="0.95" height="43.10" fill="#378068"/><path d="M642.00 239.00h5.2l-2.6 2.6z" fill="#e0f0e8"/><rect x="662.17" y="239.20" width="1.05" height="43.10" fill="#98e4c8"/><rect x="663.22" y="239.20" width="0.95" height="43.10" fill="#378068"/><path d="M660.32 239.00h5.2l-2.6 2.6z" fill="#e0f0e8"/><rect x="680.50" y="239.20" width="1.05" height="43.10" fill="#98e4c8"/><rect x="681.55" y="239.20" width="0.95" height="43.10" fill="#378068"/><path d="M678.65 239.00h5.2l-2.6 2.6z" fill="#e0f0e8"/><rect x="698.83" y="239.20" width="1.05" height="43.10" fill="#98e4c8"/><rect x="699.88" y="239.20" width="0.95" height="43.10" fill="#378068"/><path d="M696.98 239.00h5.2l-2.6 2.6z" fill="#e0f0e8"/><rect x="717.15" y="239.20" width="1.05" height="43.10" fill="#98e4c8"/><rect x="718.20" y="239.20" width="0.95" height="43.10" fill="#378068"/><path d="M715.30 239.00h5.2l-2.6 2.6z" fill="#e0f0e8"/><rect x="735.48" y="239.20" width="1.05" height="43.10" fill="#98e4c8"/><rect x="736.52" y="239.20" width="0.95" height="43.10" fill="#378068"/><path d="M733.62 239.00h5.2l-2.6 2.6z" fill="#e0f0e8"/><rect x="753.80" y="239.20" width="1.05" height="43.10" fill="#98e4c8"/><rect x="754.85" y="239.20" width="0.95" height="43.10" fill="#378068"/><path d="M751.95 239.00h5.2l-2.6 2.6z" fill="#e0f0e8"/><rect x="772.12" y="239.20" width="1.05" height="43.10" fill="#98e4c8"/><rect x="773.17" y="239.20" width="0.95" height="43.10" fill="#378068"/><path d="M770.27 239.00h5.2l-2.6 2.6z" fill="#e0f0e8"/><rect x="790.45" y="239.20" width="1.05" height="43.10" fill="#98e4c8"/><rect x="791.50" y="239.20" width="0.95" height="43.10" fill="#378068"/><path d="M788.60 239.00h5.2l-2.6 2.6z" fill="#e0f0e8"/><rect x="808.78" y="239.20" width="1.05" height="43.10" fill="#98e4c8"/><rect x="809.83" y="239.20" width="0.95" height="43.10" fill="#378068"/><path d="M806.93 239.00h5.2l-2.6 2.6z" fill="#e0f0e8"/><rect x="827.10" y="239.20" width="1.05" height="43.10" fill="#98e4c8"/><rect x="828.15" y="239.20" width="0.95" height="43.10" fill="#378068"/><path d="M825.25 239.00h5.2l-2.6 2.6z" fill="#e0f0e8"/><rect x="845.42" y="239.20" width="1.05" height="43.10" fill="#98e4c8"/><rect x="846.47" y="239.20" width="0.95" height="43.10" fill="#378068"/><path d="M843.57 239.00h5.2l-2.6 2.6z" fill="#e0f0e8"/><rect x="863.75" y="239.20" width="1.05" height="43.10" fill="#98e4c8"/><rect x="864.80" y="239.20" width="0.95" height="43.10" fill="#378068"/><path d="M861.90 239.00h5.2l-2.6 2.6z" fill="#e0f0e8"/><rect x="882.08" y="239.20" width="1.05" height="43.10" fill="#98e4c8"/><rect x="883.12" y="239.20" width="0.95" height="43.10" fill="#378068"/><path d="M880.23 239.00h5.2l-2.6 2.6z" fill="#e0f0e8"/><rect x="900.40" y="239.20" width="1.05" height="43.10" fill="#98e4c8"/><rect x="901.45" y="239.20" width="0.95" height="43.10" fill="#378068"/><path d="M898.55 239.00h5.2l-2.6 2.6z" fill="#e0f0e8"/><rect x="918.73" y="239.20" width="1.05" height="43.10" fill="#98e4c8"/><rect x="919.77" y="239.20" width="0.95" height="43.10" fill="#378068"/><path d="M916.88 239.00h5.2l-2.6 2.6z" fill="#e0f0e8"/><rect x="937.05" y="239.20" width="1.05" height="43.10" fill="#98e4c8"/><rect x="938.10" y="239.20" width="0.95" height="43.10" fill="#378068"/><path d="M935.20 239.00h5.2l-2.6 2.6z" fill="#e0f0e8"/><rect x="955.38" y="239.20" width="1.05" height="43.10" fill="#98e4c8"/><rect x="956.42" y="239.20" width="0.95" height="43.10" fill="#378068"/><path d="M953.52 239.00h5.2l-2.6 2.6z" fill="#e0f0e8"/><rect x="973.70" y="239.20" width="1.05" height="43.10" fill="#98e4c8"/><rect x="974.75" y="239.20" width="0.95" height="43.10" fill="#378068"/><path d="M971.85 239.00h5.2l-2.6 2.6z" fill="#e0f0e8"/><rect x="992.02" y="239.20" width="1.05" height="43.10" fill="#98e4c8"/><rect x="993.07" y="239.20" width="0.95" height="43.10" fill="#378068"/><path d="M990.17 239.00h5.2l-2.6 2.6z" fill="#e0f0e8"/></svg>
<div class="t" style="left:572.00px;top:241.10px;width:60px;height:7px;overflow:hidden;"><span style="position:absolute;left:1.80px;top:0;font-size:4.7px;font-weight:700;line-height:6.4px;color:#14503c;">MIDI 2 R R</span></div>
<svg style="left:1001.00px;top:241.80px;" width="8" height="4.6" viewBox="0 0 8 4.6"><ellipse cx="2.1" cy="2.3" rx="1.55" ry="1.45" fill="none" stroke="#14503c" stroke-width="0.7"/><ellipse cx="5.7" cy="2.3" rx="1.55" ry="1.45" fill="none" stroke="#14503c" stroke-width="0.7"/></svg>
<div style="left:429.30px;top:285.40px;width:123.30px;height:43.10px;background:#8cac52;border-radius:0 1.5px 1.5px 0;"></div>
<div style="left:429.30px;top:285.40px;width:123.30px;height:10.20px;background:#b4d468;border-radius:0 1.5px 0 0;"></div>
<svg style="left:0;top:0;" width="1400" height="700" viewBox="0 0 1400 700"><circle cx="430.80" cy="311.80" r="1.25" fill="#dcf0a4"/><circle cx="439.96" cy="311.80" r="1.25" fill="#dcf0a4"/><circle cx="449.13" cy="311.80" r="1.25" fill="#dcf0a4"/><circle cx="458.29" cy="311.80" r="1.25" fill="#dcf0a4"/><circle cx="467.45" cy="311.80" r="1.25" fill="#dcf0a4"/><circle cx="476.61" cy="311.80" r="1.25" fill="#dcf0a4"/><circle cx="485.78" cy="311.80" r="1.25" fill="#dcf0a4"/><circle cx="494.94" cy="311.80" r="1.25" fill="#dcf0a4"/><circle cx="504.10" cy="311.80" r="1.25" fill="#dcf0a4"/><circle cx="513.26" cy="311.80" r="1.25" fill="#dcf0a4"/><circle cx="522.43" cy="311.80" r="1.25" fill="#dcf0a4"/><circle cx="531.59" cy="311.80" r="1.25" fill="#dcf0a4"/><circle cx="540.75" cy="311.80" r="1.25" fill="#dcf0a4"/><circle cx="549.91" cy="311.80" r="1.25" fill="#dcf0a4"/></svg>
<svg style="left:0;top:0;" width="1400" height="700" viewBox="0 0 1400 700"><rect x="460.70" y="285.40" width="1.30" height="43.10" fill="#929a84"/><rect x="497.35" y="285.40" width="1.30" height="43.10" fill="#929a84"/><rect x="534.00" y="285.40" width="1.30" height="43.10" fill="#929a84"/></svg>
<svg style="left:0;top:0;" width="1400" height="700" viewBox="0 0 1400 700"><rect x="442.28" y="285.40" width="1.05" height="43.10" fill="#a4c068"/><rect x="443.33" y="285.40" width="0.95" height="43.10" fill="#687c44"/><path d="M440.43 285.20h5.2l-2.6 2.6z" fill="#d4e4a4"/><rect x="460.60" y="285.40" width="1.05" height="43.10" fill="#a4c068"/><rect x="461.65" y="285.40" width="0.95" height="43.10" fill="#687c44"/><path d="M458.75 285.20h5.2l-2.6 2.6z" fill="#d4e4a4"/><rect x="478.93" y="285.40" width="1.05" height="43.10" fill="#a4c068"/><rect x="479.98" y="285.40" width="0.95" height="43.10" fill="#687c44"/><path d="M477.07 285.20h5.2l-2.6 2.6z" fill="#d4e4a4"/><rect x="497.25" y="285.40" width="1.05" height="43.10" fill="#a4c068"/><rect x="498.30" y="285.40" width="0.95" height="43.10" fill="#687c44"/><path d="M495.40 285.20h5.2l-2.6 2.6z" fill="#d4e4a4"/><rect x="515.58" y="285.40" width="1.05" height="43.10" fill="#a4c068"/><rect x="516.62" y="285.40" width="0.95" height="43.10" fill="#687c44"/><path d="M513.73 285.20h5.2l-2.6 2.6z" fill="#d4e4a4"/><rect x="533.90" y="285.40" width="1.05" height="43.10" fill="#a4c068"/><rect x="534.95" y="285.40" width="0.95" height="43.10" fill="#687c44"/><path d="M532.05 285.20h5.2l-2.6 2.6z" fill="#d4e4a4"/></svg>
<div class="t" style="left:429.30px;top:287.30px;width:60px;height:7px;overflow:hidden;"><span style="position:absolute;left:-2.80px;top:0;font-size:4.7px;font-weight:700;line-height:6.4px;color:#3c5014;">MIDI 3 L</span></div>
<svg style="left:543.00px;top:288.00px;" width="8" height="4.6" viewBox="0 0 8 4.6"><ellipse cx="2.1" cy="2.3" rx="1.55" ry="1.45" fill="none" stroke="#3c5014" stroke-width="0.7"/><ellipse cx="5.7" cy="2.3" rx="1.55" ry="1.45" fill="none" stroke="#3c5014" stroke-width="0.7"/></svg>
<div style="left:572.00px;top:285.40px;width:438.60px;height:43.10px;background:#8cac52;border-radius:1.5px;"></div>
<div style="left:572.00px;top:285.40px;width:438.60px;height:10.20px;background:#b4d468;border-radius:1.5px 1.5px 0 0;"></div>
<svg style="left:0;top:0;" width="1400" height="700" viewBox="0 0 1400 700"><circle cx="577.40" cy="311.80" r="1.25" fill="#dcf0a4"/><circle cx="586.56" cy="311.80" r="1.25" fill="#dcf0a4"/><circle cx="595.73" cy="311.80" r="1.25" fill="#dcf0a4"/><circle cx="604.89" cy="311.80" r="1.25" fill="#dcf0a4"/><circle cx="614.05" cy="311.80" r="1.25" fill="#dcf0a4"/><circle cx="623.21" cy="311.80" r="1.25" fill="#dcf0a4"/><circle cx="632.38" cy="311.80" r="1.25" fill="#dcf0a4"/><circle cx="641.54" cy="311.80" r="1.25" fill="#dcf0a4"/><circle cx="650.70" cy="311.80" r="1.25" fill="#dcf0a4"/><circle cx="659.86" cy="311.80" r="1.25" fill="#dcf0a4"/><circle cx="669.03" cy="311.80" r="1.25" fill="#dcf0a4"/><circle cx="678.19" cy="311.80" r="1.25" fill="#dcf0a4"/><circle cx="687.35" cy="311.80" r="1.25" fill="#dcf0a4"/><circle cx="696.51" cy="311.80" r="1.25" fill="#dcf0a4"/><circle cx="705.68" cy="311.80" r="1.25" fill="#dcf0a4"/><circle cx="714.84" cy="311.80" r="1.25" fill="#dcf0a4"/><circle cx="724.00" cy="311.80" r="1.25" fill="#dcf0a4"/><circle cx="733.16" cy="311.80" r="1.25" fill="#dcf0a4"/><circle cx="742.33" cy="311.80" r="1.25" fill="#dcf0a4"/><circle cx="751.49" cy="311.80" r="1.25" fill="#dcf0a4"/><circle cx="760.65" cy="311.80" r="1.25" fill="#dcf0a4"/><circle cx="769.81" cy="311.80" r="1.25" fill="#dcf0a4"/><circle cx="778.98" cy="311.80" r="1.25" fill="#dcf0a4"/><circle cx="788.14" cy="311.80" r="1.25" fill="#dcf0a4"/><circle cx="797.30" cy="311.80" r="1.25" fill="#dcf0a4"/><circle cx="806.46" cy="311.80" r="1.25" fill="#dcf0a4"/><circle cx="815.63" cy="311.80" r="1.25" fill="#dcf0a4"/><circle cx="824.79" cy="311.80" r="1.25" fill="#dcf0a4"/><circle cx="833.95" cy="311.80" r="1.25" fill="#dcf0a4"/><circle cx="843.11" cy="311.80" r="1.25" fill="#dcf0a4"/><circle cx="852.28" cy="311.80" r="1.25" fill="#dcf0a4"/><circle cx="861.44" cy="311.80" r="1.25" fill="#dcf0a4"/><circle cx="870.60" cy="311.80" r="1.25" fill="#dcf0a4"/><circle cx="879.76" cy="311.80" r="1.25" fill="#dcf0a4"/><circle cx="888.93" cy="311.80" r="1.25" fill="#dcf0a4"/><circle cx="898.09" cy="311.80" r="1.25" fill="#dcf0a4"/><circle cx="907.25" cy="311.80" r="1.25" fill="#dcf0a4"/><circle cx="916.41" cy="311.80" r="1.25" fill="#dcf0a4"/><circle cx="925.58" cy="311.80" r="1.25" fill="#dcf0a4"/><circle cx="934.74" cy="311.80" r="1.25" fill="#dcf0a4"/><circle cx="943.90" cy="311.80" r="1.25" fill="#dcf0a4"/><circle cx="953.06" cy="311.80" r="1.25" fill="#dcf0a4"/><circle cx="962.23" cy="311.80" r="1.25" fill="#dcf0a4"/><circle cx="971.39" cy="311.80" r="1.25" fill="#dcf0a4"/><circle cx="980.55" cy="311.80" r="1.25" fill="#dcf0a4"/><circle cx="989.71" cy="311.80" r="1.25" fill="#dcf0a4"/><circle cx="998.88" cy="311.80" r="1.25" fill="#dcf0a4"/><circle cx="1008.04" cy="311.80" r="1.25" fill="#dcf0a4"/></svg>
<svg style="left:0;top:0;" width="1400" height="700" viewBox="0 0 1400 700"><rect x="607.30" y="285.40" width="1.30" height="43.10" fill="#929a84"/><rect x="643.95" y="285.40" width="1.30" height="43.10" fill="#929a84"/><rect x="680.60" y="285.40" width="1.30" height="43.10" fill="#929a84"/><rect x="717.25" y="285.40" width="1.30" height="43.10" fill="#929a84"/><rect x="753.90" y="285.40" width="1.30" height="43.10" fill="#929a84"/><rect x="790.55" y="285.40" width="1.30" height="43.10" fill="#929a84"/><rect x="827.20" y="285.40" width="1.30" height="43.10" fill="#929a84"/><rect x="863.85" y="285.40" width="1.30" height="43.10" fill="#929a84"/><rect x="900.50" y="285.40" width="1.30" height="43.10" fill="#929a84"/><rect x="937.15" y="285.40" width="1.30" height="43.10" fill="#929a84"/><rect x="973.80" y="285.40" width="1.30" height="43.10" fill="#929a84"/></svg>
<svg style="left:0;top:0;" width="1400" height="700" viewBox="0 0 1400 700"><rect x="588.88" y="285.40" width="1.05" height="43.10" fill="#a4c068"/><rect x="589.92" y="285.40" width="0.95" height="43.10" fill="#687c44"/><path d="M587.02 285.20h5.2l-2.6 2.6z" fill="#d4e4a4"/><rect x="607.20" y="285.40" width="1.05" height="43.10" fill="#a4c068"/><rect x="608.25" y="285.40" width="0.95" height="43.10" fill="#687c44"/><path d="M605.35 285.20h5.2l-2.6 2.6z" fill="#d4e4a4"/><rect x="625.52" y="285.40" width="1.05" height="43.10" fill="#a4c068"/><rect x="626.57" y="285.40" width="0.95" height="43.10" fill="#687c44"/><path d="M623.67 285.20h5.2l-2.6 2.6z" fill="#d4e4a4"/><rect x="643.85" y="285.40" width="1.05" height="43.10" fill="#a4c068"/><rect x="644.90" y="285.40" width="0.95" height="43.10" fill="#687c44"/><path d="M642.00 285.20h5.2l-2.6 2.6z" fill="#d4e4a4"/><rect x="662.17" y="285.40" width="1.05" height="43.10" fill="#a4c068"/><rect x="663.22" y="285.40" width="0.95" height="43.10" fill="#687c44"/><path d="M660.32 285.20h5.2l-2.6 2.6z" fill="#d4e4a4"/><rect x="680.50" y="285.40" width="1.05" height="43.10" fill="#a4c068"/><rect x="681.55" y="285.40" width="0.95" height="43.10" fill="#687c44"/><path d="M678.65 285.20h5.2l-2.6 2.6z" fill="#d4e4a4"/><rect x="698.83" y="285.40" width="1.05" height="43.10" fill="#a4c068"/><rect x="699.88" y="285.40" width="0.95" height="43.10" fill="#687c44"/><path d="M696.98 285.20h5.2l-2.6 2.6z" fill="#d4e4a4"/><rect x="717.15" y="285.40" width="1.05" height="43.10" fill="#a4c068"/><rect x="718.20" y="285.40" width="0.95" height="43.10" fill="#687c44"/><path d="M715.30 285.20h5.2l-2.6 2.6z" fill="#d4e4a4"/><rect x="735.48" y="285.40" width="1.05" height="43.10" fill="#a4c068"/><rect x="736.52" y="285.40" width="0.95" height="43.10" fill="#687c44"/><path d="M733.62 285.20h5.2l-2.6 2.6z" fill="#d4e4a4"/><rect x="753.80" y="285.40" width="1.05" height="43.10" fill="#a4c068"/><rect x="754.85" y="285.40" width="0.95" height="43.10" fill="#687c44"/><path d="M751.95 285.20h5.2l-2.6 2.6z" fill="#d4e4a4"/><rect x="772.12" y="285.40" width="1.05" height="43.10" fill="#a4c068"/><rect x="773.17" y="285.40" width="0.95" height="43.10" fill="#687c44"/><path d="M770.27 285.20h5.2l-2.6 2.6z" fill="#d4e4a4"/><rect x="790.45" y="285.40" width="1.05" height="43.10" fill="#a4c068"/><rect x="791.50" y="285.40" width="0.95" height="43.10" fill="#687c44"/><path d="M788.60 285.20h5.2l-2.6 2.6z" fill="#d4e4a4"/><rect x="808.78" y="285.40" width="1.05" height="43.10" fill="#a4c068"/><rect x="809.83" y="285.40" width="0.95" height="43.10" fill="#687c44"/><path d="M806.93 285.20h5.2l-2.6 2.6z" fill="#d4e4a4"/><rect x="827.10" y="285.40" width="1.05" height="43.10" fill="#a4c068"/><rect x="828.15" y="285.40" width="0.95" height="43.10" fill="#687c44"/><path d="M825.25 285.20h5.2l-2.6 2.6z" fill="#d4e4a4"/><rect x="845.42" y="285.40" width="1.05" height="43.10" fill="#a4c068"/><rect x="846.47" y="285.40" width="0.95" height="43.10" fill="#687c44"/><path d="M843.57 285.20h5.2l-2.6 2.6z" fill="#d4e4a4"/><rect x="863.75" y="285.40" width="1.05" height="43.10" fill="#a4c068"/><rect x="864.80" y="285.40" width="0.95" height="43.10" fill="#687c44"/><path d="M861.90 285.20h5.2l-2.6 2.6z" fill="#d4e4a4"/><rect x="882.08" y="285.40" width="1.05" height="43.10" fill="#a4c068"/><rect x="883.12" y="285.40" width="0.95" height="43.10" fill="#687c44"/><path d="M880.23 285.20h5.2l-2.6 2.6z" fill="#d4e4a4"/><rect x="900.40" y="285.40" width="1.05" height="43.10" fill="#a4c068"/><rect x="901.45" y="285.40" width="0.95" height="43.10" fill="#687c44"/><path d="M898.55 285.20h5.2l-2.6 2.6z" fill="#d4e4a4"/><rect x="918.73" y="285.40" width="1.05" height="43.10" fill="#a4c068"/><rect x="919.77" y="285.40" width="0.95" height="43.10" fill="#687c44"/><path d="M916.88 285.20h5.2l-2.6 2.6z" fill="#d4e4a4"/><rect x="937.05" y="285.40" width="1.05" height="43.10" fill="#a4c068"/><rect x="938.10" y="285.40" width="0.95" height="43.10" fill="#687c44"/><path d="M935.20 285.20h5.2l-2.6 2.6z" fill="#d4e4a4"/><rect x="955.38" y="285.40" width="1.05" height="43.10" fill="#a4c068"/><rect x="956.42" y="285.40" width="0.95" height="43.10" fill="#687c44"/><path d="M953.52 285.20h5.2l-2.6 2.6z" fill="#d4e4a4"/><rect x="973.70" y="285.40" width="1.05" height="43.10" fill="#a4c068"/><rect x="974.75" y="285.40" width="0.95" height="43.10" fill="#687c44"/><path d="M971.85 285.20h5.2l-2.6 2.6z" fill="#d4e4a4"/><rect x="992.02" y="285.40" width="1.05" height="43.10" fill="#a4c068"/><rect x="993.07" y="285.40" width="0.95" height="43.10" fill="#687c44"/><path d="M990.17 285.20h5.2l-2.6 2.6z" fill="#d4e4a4"/></svg>
<div class="t" style="left:572.00px;top:287.30px;width:60px;height:7px;overflow:hidden;"><span style="position:absolute;left:1.80px;top:0;font-size:4.7px;font-weight:700;line-height:6.4px;color:#3c5014;">MIDI 3 R R</span></div>
<svg style="left:1001.00px;top:288.00px;" width="8" height="4.6" viewBox="0 0 8 4.6"><ellipse cx="2.1" cy="2.3" rx="1.55" ry="1.45" fill="none" stroke="#3c5014" stroke-width="0.7"/><ellipse cx="5.7" cy="2.3" rx="1.55" ry="1.45" fill="none" stroke="#3c5014" stroke-width="0.7"/></svg>
<div style="left:429.30px;top:331.70px;width:123.30px;height:43.10px;background:#b4b452;border-radius:0 1.5px 1.5px 0;"></div>
<div style="left:429.30px;top:331.70px;width:123.30px;height:10.20px;background:#dcdc68;border-radius:0 1.5px 0 0;"></div>
<div style="left:429.30px;top:357.20px;width:123.30px;height:1.90px;background:#e6e68c;"></div>
<svg style="left:0;top:0;" width="1400" height="700" viewBox="0 0 1400 700"><rect x="460.70" y="331.70" width="1.30" height="43.10" fill="#9c9a84"/><rect x="497.35" y="331.70" width="1.30" height="43.10" fill="#9c9a84"/><rect x="534.00" y="331.70" width="1.30" height="43.10" fill="#9c9a84"/></svg>
<svg style="left:0;top:0;" width="1400" height="700" viewBox="0 0 1400 700"><rect x="442.28" y="331.70" width="1.05" height="43.10" fill="#c8c868"/><rect x="443.33" y="331.70" width="0.95" height="43.10" fill="#84844a"/><path d="M440.43 331.50h5.2l-2.6 2.6z" fill="#e8e8a8"/><rect x="460.60" y="331.70" width="1.05" height="43.10" fill="#c8c868"/><rect x="461.65" y="331.70" width="0.95" height="43.10" fill="#84844a"/><path d="M458.75 331.50h5.2l-2.6 2.6z" fill="#e8e8a8"/><rect x="478.93" y="331.70" width="1.05" height="43.10" fill="#c8c868"/><rect x="479.98" y="331.70" width="0.95" height="43.10" fill="#84844a"/><path d="M477.07 331.50h5.2l-2.6 2.6z" fill="#e8e8a8"/><rect x="497.25" y="331.70" width="1.05" height="43.10" fill="#c8c868"/><rect x="498.30" y="331.70" width="0.95" height="43.10" fill="#84844a"/><path d="M495.40 331.50h5.2l-2.6 2.6z" fill="#e8e8a8"/><rect x="515.58" y="331.70" width="1.05" height="43.10" fill="#c8c868"/><rect x="516.62" y="331.70" width="0.95" height="43.10" fill="#84844a"/><path d="M513.73 331.50h5.2l-2.6 2.6z" fill="#e8e8a8"/><rect x="533.90" y="331.70" width="1.05" height="43.10" fill="#c8c868"/><rect x="534.95" y="331.70" width="0.95" height="43.10" fill="#84844a"/><path d="M532.05 331.50h5.2l-2.6 2.6z" fill="#e8e8a8"/></svg>
<div class="t" style="left:429.30px;top:333.60px;width:60px;height:7px;overflow:hidden;"><span style="position:absolute;left:-2.80px;top:0;font-size:4.7px;font-weight:700;line-height:6.4px;color:#50500c;">MIDI 4 L</span></div>
<svg style="left:543.00px;top:334.30px;" width="8" height="4.6" viewBox="0 0 8 4.6"><ellipse cx="2.1" cy="2.3" rx="1.55" ry="1.45" fill="none" stroke="#50500c" stroke-width="0.7"/><ellipse cx="5.7" cy="2.3" rx="1.55" ry="1.45" fill="none" stroke="#50500c" stroke-width="0.7"/></svg>
<div style="left:572.00px;top:331.70px;width:438.60px;height:43.10px;background:#b4b452;border-radius:1.5px;"></div>
<div style="left:572.00px;top:331.70px;width:438.60px;height:10.20px;background:#dcdc68;border-radius:1.5px 1.5px 0 0;"></div>
<div style="left:572.00px;top:357.20px;width:438.60px;height:1.90px;background:#e6e68c;"></div>
<svg style="left:0;top:0;" width="1400" height="700" viewBox="0 0 1400 700"><rect x="607.30" y="331.70" width="1.30" height="43.10" fill="#9c9a84"/><rect x="643.95" y="331.70" width="1.30" height="43.10" fill="#9c9a84"/><rect x="680.60" y="331.70" width="1.30" height="43.10" fill="#9c9a84"/><rect x="717.25" y="331.70" width="1.30" height="43.10" fill="#9c9a84"/><rect x="753.90" y="331.70" width="1.30" height="43.10" fill="#9c9a84"/><rect x="790.55" y="331.70" width="1.30" height="43.10" fill="#9c9a84"/><rect x="827.20" y="331.70" width="1.30" height="43.10" fill="#9c9a84"/><rect x="863.85" y="331.70" width="1.30" height="43.10" fill="#9c9a84"/><rect x="900.50" y="331.70" width="1.30" height="43.10" fill="#9c9a84"/><rect x="937.15" y="331.70" width="1.30" height="43.10" fill="#9c9a84"/><rect x="973.80" y="331.70" width="1.30" height="43.10" fill="#9c9a84"/></svg>
<svg style="left:0;top:0;" width="1400" height="700" viewBox="0 0 1400 700"><rect x="588.88" y="331.70" width="1.05" height="43.10" fill="#c8c868"/><rect x="589.92" y="331.70" width="0.95" height="43.10" fill="#84844a"/><path d="M587.02 331.50h5.2l-2.6 2.6z" fill="#e8e8a8"/><rect x="607.20" y="331.70" width="1.05" height="43.10" fill="#c8c868"/><rect x="608.25" y="331.70" width="0.95" height="43.10" fill="#84844a"/><path d="M605.35 331.50h5.2l-2.6 2.6z" fill="#e8e8a8"/><rect x="625.52" y="331.70" width="1.05" height="43.10" fill="#c8c868"/><rect x="626.57" y="331.70" width="0.95" height="43.10" fill="#84844a"/><path d="M623.67 331.50h5.2l-2.6 2.6z" fill="#e8e8a8"/><rect x="643.85" y="331.70" width="1.05" height="43.10" fill="#c8c868"/><rect x="644.90" y="331.70" width="0.95" height="43.10" fill="#84844a"/><path d="M642.00 331.50h5.2l-2.6 2.6z" fill="#e8e8a8"/><rect x="662.17" y="331.70" width="1.05" height="43.10" fill="#c8c868"/><rect x="663.22" y="331.70" width="0.95" height="43.10" fill="#84844a"/><path d="M660.32 331.50h5.2l-2.6 2.6z" fill="#e8e8a8"/><rect x="680.50" y="331.70" width="1.05" height="43.10" fill="#c8c868"/><rect x="681.55" y="331.70" width="0.95" height="43.10" fill="#84844a"/><path d="M678.65 331.50h5.2l-2.6 2.6z" fill="#e8e8a8"/><rect x="698.83" y="331.70" width="1.05" height="43.10" fill="#c8c868"/><rect x="699.88" y="331.70" width="0.95" height="43.10" fill="#84844a"/><path d="M696.98 331.50h5.2l-2.6 2.6z" fill="#e8e8a8"/><rect x="717.15" y="331.70" width="1.05" height="43.10" fill="#c8c868"/><rect x="718.20" y="331.70" width="0.95" height="43.10" fill="#84844a"/><path d="M715.30 331.50h5.2l-2.6 2.6z" fill="#e8e8a8"/><rect x="735.48" y="331.70" width="1.05" height="43.10" fill="#c8c868"/><rect x="736.52" y="331.70" width="0.95" height="43.10" fill="#84844a"/><path d="M733.62 331.50h5.2l-2.6 2.6z" fill="#e8e8a8"/><rect x="753.80" y="331.70" width="1.05" height="43.10" fill="#c8c868"/><rect x="754.85" y="331.70" width="0.95" height="43.10" fill="#84844a"/><path d="M751.95 331.50h5.2l-2.6 2.6z" fill="#e8e8a8"/><rect x="772.12" y="331.70" width="1.05" height="43.10" fill="#c8c868"/><rect x="773.17" y="331.70" width="0.95" height="43.10" fill="#84844a"/><path d="M770.27 331.50h5.2l-2.6 2.6z" fill="#e8e8a8"/><rect x="790.45" y="331.70" width="1.05" height="43.10" fill="#c8c868"/><rect x="791.50" y="331.70" width="0.95" height="43.10" fill="#84844a"/><path d="M788.60 331.50h5.2l-2.6 2.6z" fill="#e8e8a8"/><rect x="808.78" y="331.70" width="1.05" height="43.10" fill="#c8c868"/><rect x="809.83" y="331.70" width="0.95" height="43.10" fill="#84844a"/><path d="M806.93 331.50h5.2l-2.6 2.6z" fill="#e8e8a8"/><rect x="827.10" y="331.70" width="1.05" height="43.10" fill="#c8c868"/><rect x="828.15" y="331.70" width="0.95" height="43.10" fill="#84844a"/><path d="M825.25 331.50h5.2l-2.6 2.6z" fill="#e8e8a8"/><rect x="845.42" y="331.70" width="1.05" height="43.10" fill="#c8c868"/><rect x="846.47" y="331.70" width="0.95" height="43.10" fill="#84844a"/><path d="M843.57 331.50h5.2l-2.6 2.6z" fill="#e8e8a8"/><rect x="863.75" y="331.70" width="1.05" height="43.10" fill="#c8c868"/><rect x="864.80" y="331.70" width="0.95" height="43.10" fill="#84844a"/><path d="M861.90 331.50h5.2l-2.6 2.6z" fill="#e8e8a8"/><rect x="882.08" y="331.70" width="1.05" height="43.10" fill="#c8c868"/><rect x="883.12" y="331.70" width="0.95" height="43.10" fill="#84844a"/><path d="M880.23 331.50h5.2l-2.6 2.6z" fill="#e8e8a8"/><rect x="900.40" y="331.70" width="1.05" height="43.10" fill="#c8c868"/><rect x="901.45" y="331.70" width="0.95" height="43.10" fill="#84844a"/><path d="M898.55 331.50h5.2l-2.6 2.6z" fill="#e8e8a8"/><rect x="918.73" y="331.70" width="1.05" height="43.10" fill="#c8c868"/><rect x="919.77" y="331.70" width="0.95" height="43.10" fill="#84844a"/><path d="M916.88 331.50h5.2l-2.6 2.6z" fill="#e8e8a8"/><rect x="937.05" y="331.70" width="1.05" height="43.10" fill="#c8c868"/><rect x="938.10" y="331.70" width="0.95" height="43.10" fill="#84844a"/><path d="M935.20 331.50h5.2l-2.6 2.6z" fill="#e8e8a8"/><rect x="955.38" y="331.70" width="1.05" height="43.10" fill="#c8c868"/><rect x="956.42" y="331.70" width="0.95" height="43.10" fill="#84844a"/><path d="M953.52 331.50h5.2l-2.6 2.6z" fill="#e8e8a8"/><rect x="973.70" y="331.70" width="1.05" height="43.10" fill="#c8c868"/><rect x="974.75" y="331.70" width="0.95" height="43.10" fill="#84844a"/><path d="M971.85 331.50h5.2l-2.6 2.6z" fill="#e8e8a8"/><rect x="992.02" y="331.70" width="1.05" height="43.10" fill="#c8c868"/><rect x="993.07" y="331.70" width="0.95" height="43.10" fill="#84844a"/><path d="M990.17 331.50h5.2l-2.6 2.6z" fill="#e8e8a8"/></svg>
<div class="t" style="left:572.00px;top:333.60px;width:60px;height:7px;overflow:hidden;"><span style="position:absolute;left:1.80px;top:0;font-size:4.7px;font-weight:700;line-height:6.4px;color:#50500c;">MIDI 4 R R</span></div>
<svg style="left:1001.00px;top:334.30px;" width="8" height="4.6" viewBox="0 0 8 4.6"><ellipse cx="2.1" cy="2.3" rx="1.55" ry="1.45" fill="none" stroke="#50500c" stroke-width="0.7"/><ellipse cx="5.7" cy="2.3" rx="1.55" ry="1.45" fill="none" stroke="#50500c" stroke-width="0.7"/></svg>
<div style="left:429.30px;top:377.90px;width:123.30px;height:43.10px;background:#b8985a;border-radius:0 1.5px 1.5px 0;"></div>
<div style="left:429.30px;top:377.90px;width:123.30px;height:10.20px;background:#dcb86a;border-radius:0 1.5px 0 0;"></div>
<svg style="left:0;top:0;" width="1400" height="700" viewBox="0 0 1400 700"><rect x="432.10" y="399.25" width="2.6" height="1.3" rx="0.5" fill="#f0dc98"/><rect x="433.90" y="400.85" width="2.6" height="1.3" rx="0.5" fill="#f0dc98"/><rect x="436.10" y="404.45" width="2.6" height="1.3" rx="0.5" fill="#f0dc98"/><rect x="439.00" y="412.65" width="2.6" height="1.3" rx="0.5" fill="#f0dc98"/><rect x="443.00" y="409.25" width="2.6" height="1.3" rx="0.5" fill="#f0dc98"/><rect x="445.90" y="406.75" width="2.6" height="1.3" rx="0.5" fill="#f0dc98"/><rect x="447.60" y="404.05" width="2.6" height="1.3" rx="0.5" fill="#f0dc98"/><rect x="449.90" y="400.85" width="2.6" height="1.3" rx="0.5" fill="#f0dc98"/><rect x="452.10" y="398.55" width="2.6" height="1.3" rx="0.5" fill="#f0dc98"/><rect x="454.40" y="404.05" width="2.6" height="1.3" rx="0.5" fill="#f0dc98"/><rect x="457.30" y="406.75" width="2.6" height="1.3" rx="0.5" fill="#f0dc98"/><rect x="461.30" y="398.55" width="2.6" height="1.3" rx="0.5" fill="#f0dc98"/><rect x="463.60" y="395.45" width="2.6" height="1.3" rx="0.5" fill="#f0dc98"/><rect x="465.90" y="406.75" width="2.6" height="1.3" rx="0.5" fill="#f0dc98"/><rect x="468.10" y="403.25" width="2.6" height="1.3" rx="0.5" fill="#f0dc98"/><rect x="470.40" y="404.45" width="2.6" height="1.3" rx="0.5" fill="#f0dc98"/><rect x="472.70" y="406.75" width="2.6" height="1.3" rx="0.5" fill="#f0dc98"/><rect x="475.60" y="404.45" width="2.6" height="1.3" rx="0.5" fill="#f0dc98"/><rect x="479.60" y="400.85" width="2.6" height="1.3" rx="0.5" fill="#f0dc98"/><rect x="481.90" y="398.55" width="2.6" height="1.3" rx="0.5" fill="#f0dc98"/><rect x="484.20" y="396.25" width="2.6" height="1.3" rx="0.5" fill="#f0dc98"/><rect x="486.40" y="398.55" width="2.6" height="1.3" rx="0.5" fill="#f0dc98"/><rect x="488.70" y="400.85" width="2.6" height="1.3" rx="0.5" fill="#f0dc98"/><rect x="491.00" y="404.45" width="2.6" height="1.3" rx="0.5" fill="#f0dc98"/><rect x="492.70" y="406.75" width="2.6" height="1.3" rx="0.5" fill="#f0dc98"/><rect x="495.20" y="409.25" width="2.6" height="1.3" rx="0.5" fill="#f0dc98"/><rect x="498.00" y="409.25" width="2.6" height="1.3" rx="0.5" fill="#f0dc98"/><rect x="500.50" y="406.75" width="2.6" height="1.3" rx="0.5" fill="#f0dc98"/><rect x="502.80" y="404.45" width="2.6" height="1.3" rx="0.5" fill="#f0dc98"/><rect x="505.40" y="399.25" width="2.6" height="1.3" rx="0.5" fill="#f0dc98"/><rect x="507.20" y="400.85" width="2.6" height="1.3" rx="0.5" fill="#f0dc98"/><rect x="509.40" y="404.45" width="2.6" height="1.3" rx="0.5" fill="#f0dc98"/><rect x="512.30" y="412.65" width="2.6" height="1.3" rx="0.5" fill="#f0dc98"/><rect x="516.30" y="409.25" width="2.6" height="1.3" rx="0.5" fill="#f0dc98"/><rect x="519.20" y="406.75" width="2.6" height="1.3" rx="0.5" fill="#f0dc98"/><rect x="520.90" y="404.05" width="2.6" height="1.3" rx="0.5" fill="#f0dc98"/><rect x="523.20" y="400.85" width="2.6" height="1.3" rx="0.5" fill="#f0dc98"/><rect x="525.40" y="398.55" width="2.6" height="1.3" rx="0.5" fill="#f0dc98"/><rect x="527.70" y="404.05" width="2.6" height="1.3" rx="0.5" fill="#f0dc98"/><rect x="530.60" y="406.75" width="2.6" height="1.3" rx="0.5" fill="#f0dc98"/><rect x="534.60" y="398.55" width="2.6" height="1.3" rx="0.5" fill="#f0dc98"/><rect x="536.90" y="395.45" width="2.6" height="1.3" rx="0.5" fill="#f0dc98"/><rect x="539.20" y="406.75" width="2.6" height="1.3" rx="0.5" fill="#f0dc98"/><rect x="541.40" y="403.25" width="2.6" height="1.3" rx="0.5" fill="#f0dc98"/><rect x="543.70" y="404.45" width="2.6" height="1.3" rx="0.5" fill="#f0dc98"/><rect x="546.00" y="406.75" width="2.6" height="1.3" rx="0.5" fill="#f0dc98"/><rect x="548.90" y="404.45" width="2.6" height="1.3" rx="0.5" fill="#f0dc98"/></svg>
<svg style="left:0;top:0;" width="1400" height="700" viewBox="0 0 1400 700"><rect x="460.70" y="377.90" width="1.30" height="43.10" fill="#a8a08c"/><rect x="497.35" y="377.90" width="1.30" height="43.10" fill="#a8a08c"/><rect x="534.00" y="377.90" width="1.30" height="43.10" fill="#a8a08c"/></svg>
<svg style="left:0;top:0;" width="1400" height="700" viewBox="0 0 1400 700"><rect x="497.25" y="377.90" width="1.05" height="43.10" fill="#ecd8a0"/><rect x="498.30" y="377.90" width="0.95" height="43.10" fill="#806838"/><path d="M495.40 377.70h5.2l-2.6 2.6z" fill="#e4e8f0"/></svg>
<div class="t" style="left:429.30px;top:379.80px;width:60px;height:7px;overflow:hidden;"><span style="position:absolute;left:-2.80px;top:0;font-size:4.7px;font-weight:700;line-height:6.4px;color:#4c3a10;">MIDI 5 L</span></div>
<svg style="left:543.00px;top:380.50px;" width="8" height="4.6" viewBox="0 0 8 4.6"><ellipse cx="2.1" cy="2.3" rx="1.55" ry="1.45" fill="none" stroke="#4c3a10" stroke-width="0.7"/><ellipse cx="5.7" cy="2.3" rx="1.55" ry="1.45" fill="none" stroke="#4c3a10" stroke-width="0.7"/></svg>
<div style="left:572.00px;top:377.90px;width:438.60px;height:43.10px;background:#b8985a;border-radius:1.5px;"></div>
<div style="left:572.00px;top:377.90px;width:438.60px;height:10.20px;background:#dcb86a;border-radius:1.5px 1.5px 0 0;"></div>
<svg style="left:0;top:0;" width="1400" height="700" viewBox="0 0 1400 700"><rect x="573.80" y="406.75" width="2.6" height="1.3" rx="0.5" fill="#f0dc98"/><rect x="576.10" y="404.45" width="2.6" height="1.3" rx="0.5" fill="#f0dc98"/><rect x="578.70" y="399.25" width="2.6" height="1.3" rx="0.5" fill="#f0dc98"/><rect x="580.50" y="400.85" width="2.6" height="1.3" rx="0.5" fill="#f0dc98"/><rect x="582.70" y="404.45" width="2.6" height="1.3" rx="0.5" fill="#f0dc98"/><rect x="585.60" y="412.65" width="2.6" height="1.3" rx="0.5" fill="#f0dc98"/><rect x="589.60" y="409.25" width="2.6" height="1.3" rx="0.5" fill="#f0dc98"/><rect x="592.50" y="406.75" width="2.6" height="1.3" rx="0.5" fill="#f0dc98"/><rect x="594.20" y="404.05" width="2.6" height="1.3" rx="0.5" fill="#f0dc98"/><rect x="596.50" y="400.85" width="2.6" height="1.3" rx="0.5" fill="#f0dc98"/><rect x="598.70" y="398.55" width="2.6" height="1.3" rx="0.5" fill="#f0dc98"/><rect x="601.00" y="404.05" width="2.6" height="1.3" rx="0.5" fill="#f0dc98"/><rect x="603.90" y="406.75" width="2.6" height="1.3" rx="0.5" fill="#f0dc98"/><rect x="607.90" y="398.55" width="2.6" height="1.3" rx="0.5" fill="#f0dc98"/><rect x="610.20" y="395.45" width="2.6" height="1.3" rx="0.5" fill="#f0dc98"/><rect x="612.50" y="406.75" width="2.6" height="1.3" rx="0.5" fill="#f0dc98"/><rect x="614.70" y="403.25" width="2.6" height="1.3" rx="0.5" fill="#f0dc98"/><rect x="617.00" y="404.45" width="2.6" height="1.3" rx="0.5" fill="#f0dc98"/><rect x="619.30" y="406.75" width="2.6" height="1.3" rx="0.5" fill="#f0dc98"/><rect x="622.20" y="404.45" width="2.6" height="1.3" rx="0.5" fill="#f0dc98"/><rect x="626.20" y="400.85" width="2.6" height="1.3" rx="0.5" fill="#f0dc98"/><rect x="628.50" y="398.55" width="2.6" height="1.3" rx="0.5" fill="#f0dc98"/><rect x="630.80" y="396.25" width="2.6" height="1.3" rx="0.5" fill="#f0dc98"/><rect x="633.00" y="398.55" width="2.6" height="1.3" rx="0.5" fill="#f0dc98"/><rect x="635.30" y="400.85" width="2.6" height="1.3" rx="0.5" fill="#f0dc98"/><rect x="637.60" y="404.45" width="2.6" height="1.3" rx="0.5" fill="#f0dc98"/><rect x="639.30" y="406.75" width="2.6" height="1.3" rx="0.5" fill="#f0dc98"/><rect x="641.80" y="409.25" width="2.6" height="1.3" rx="0.5" fill="#f0dc98"/><rect x="644.60" y="409.25" width="2.6" height="1.3" rx="0.5" fill="#f0dc98"/><rect x="647.10" y="406.75" width="2.6" height="1.3" rx="0.5" fill="#f0dc98"/><rect x="649.40" y="404.45" width="2.6" height="1.3" rx="0.5" fill="#f0dc98"/><rect x="652.00" y="399.25" width="2.6" height="1.3" rx="0.5" fill="#f0dc98"/><rect x="653.80" y="400.85" width="2.6" height="1.3" rx="0.5" fill="#f0dc98"/><rect x="656.00" y="404.45" width="2.6" height="1.3" rx="0.5" fill="#f0dc98"/><rect x="658.90" y="412.65" width="2.6" height="1.3" rx="0.5" fill="#f0dc98"/><rect x="662.90" y="409.25" width="2.6" height="1.3" rx="0.5" fill="#f0dc98"/><rect x="665.80" y="406.75" width="2.6" height="1.3" rx="0.5" fill="#f0dc98"/><rect x="667.50" y="404.05" width="2.6" height="1.3" rx="0.5" fill="#f0dc98"/><rect x="669.80" y="400.85" width="2.6" height="1.3" rx="0.5" fill="#f0dc98"/><rect x="672.00" y="398.55" width="2.6" height="1.3" rx="0.5" fill="#f0dc98"/><rect x="674.30" y="404.05" width="2.6" height="1.3" rx="0.5" fill="#f0dc98"/><rect x="677.20" y="406.75" width="2.6" height="1.3" rx="0.5" fill="#f0dc98"/><rect x="681.20" y="398.55" width="2.6" height="1.3" rx="0.5" fill="#f0dc98"/><rect x="683.50" y="395.45" width="2.6" height="1.3" rx="0.5" fill="#f0dc98"/><rect x="685.80" y="406.75" width="2.6" height="1.3" rx="0.5" fill="#f0dc98"/><rect x="688.00" y="403.25" width="2.6" height="1.3" rx="0.5" fill="#f0dc98"/><rect x="690.30" y="404.45" width="2.6" height="1.3" rx="0.5" fill="#f0dc98"/><rect x="692.60" y="406.75" width="2.6" height="1.3" rx="0.5" fill="#f0dc98"/><rect x="695.50" y="404.45" width="2.6" height="1.3" rx="0.5" fill="#f0dc98"/><rect x="699.50" y="400.85" width="2.6" height="1.3" rx="0.5" fill="#f0dc98"/><rect x="701.80" y="398.55" width="2.6" height="1.3" rx="0.5" fill="#f0dc98"/><rect x="704.10" y="396.25" width="2.6" height="1.3" rx="0.5" fill="#f0dc98"/><rect x="706.30" y="398.55" width="2.6" height="1.3" rx="0.5" fill="#f0dc98"/><rect x="708.60" y="400.85" width="2.6" height="1.3" rx="0.5" fill="#f0dc98"/><rect x="710.90" y="404.45" width="2.6" height="1.3" rx="0.5" fill="#f0dc98"/><rect x="712.60" y="406.75" width="2.6" height="1.3" rx="0.5" fill="#f0dc98"/><rect x="715.10" y="409.25" width="2.6" height="1.3" rx="0.5" fill="#f0dc98"/><rect x="717.90" y="409.25" width="2.6" height="1.3" rx="0.5" fill="#f0dc98"/><rect x="720.40" y="406.75" width="2.6" height="1.3" rx="0.5" fill="#f0dc98"/><rect x="722.70" y="404.45" width="2.6" height="1.3" rx="0.5" fill="#f0dc98"/><rect x="725.30" y="399.25" width="2.6" height="1.3" rx="0.5" fill="#f0dc98"/><rect x="727.10" y="400.85" width="2.6" height="1.3" rx="0.5" fill="#f0dc98"/><rect x="729.30" y="404.45" width="2.6" height="1.3" rx="0.5" fill="#f0dc98"/><rect x="732.20" y="412.65" width="2.6" height="1.3" rx="0.5" fill="#f0dc98"/><rect x="736.20" y="409.25" width="2.6" height="1.3" rx="0.5" fill="#f0dc98"/><rect x="739.10" y="406.75" width="2.6" height="1.3" rx="0.5" fill="#f0dc98"/><rect x="740.80" y="404.05" width="2.6" height="1.3" rx="0.5" fill="#f0dc98"/><rect x="743.10" y="400.85" width="2.6" height="1.3" rx="0.5" fill="#f0dc98"/><rect x="745.30" y="398.55" width="2.6" height="1.3" rx="0.5" fill="#f0dc98"/><rect x="747.60" y="404.05" width="2.6" height="1.3" rx="0.5" fill="#f0dc98"/><rect x="750.50" y="406.75" width="2.6" height="1.3" rx="0.5" fill="#f0dc98"/><rect x="754.50" y="398.55" width="2.6" height="1.3" rx="0.5" fill="#f0dc98"/><rect x="756.80" y="395.45" width="2.6" height="1.3" rx="0.5" fill="#f0dc98"/><rect x="759.10" y="406.75" width="2.6" height="1.3" rx="0.5" fill="#f0dc98"/><rect x="761.30" y="403.25" width="2.6" height="1.3" rx="0.5" fill="#f0dc98"/><rect x="763.60" y="404.45" width="2.6" height="1.3" rx="0.5" fill="#f0dc98"/><rect x="765.90" y="406.75" width="2.6" height="1.3" rx="0.5" fill="#f0dc98"/><rect x="768.80" y="404.45" width="2.6" height="1.3" rx="0.5" fill="#f0dc98"/><rect x="772.80" y="400.85" width="2.6" height="1.3" rx="0.5" fill="#f0dc98"/><rect x="775.10" y="398.55" width="2.6" height="1.3" rx="0.5" fill="#f0dc98"/><rect x="777.40" y="396.25" width="2.6" height="1.3" rx="0.5" fill="#f0dc98"/><rect x="779.60" y="398.55" width="2.6" height="1.3" rx="0.5" fill="#f0dc98"/><rect x="781.90" y="400.85" width="2.6" height="1.3" rx="0.5" fill="#f0dc98"/><rect x="784.20" y="404.45" width="2.6" height="1.3" rx="0.5" fill="#f0dc98"/><rect x="785.90" y="406.75" width="2.6" height="1.3" rx="0.5" fill="#f0dc98"/><rect x="788.40" y="409.25" width="2.6" height="1.3" rx="0.5" fill="#f0dc98"/><rect x="791.20" y="409.25" width="2.6" height="1.3" rx="0.5" fill="#f0dc98"/><rect x="793.70" y="406.75" width="2.6" height="1.3" rx="0.5" fill="#f0dc98"/><rect x="796.00" y="404.45" width="2.6" height="1.3" rx="0.5" fill="#f0dc98"/><rect x="798.60" y="399.25" width="2.6" height="1.3" rx="0.5" fill="#f0dc98"/><rect x="800.40" y="400.85" width="2.6" height="1.3" rx="0.5" fill="#f0dc98"/><rect x="802.60" y="404.45" width="2.6" height="1.3" rx="0.5" fill="#f0dc98"/><rect x="805.50" y="412.65" width="2.6" height="1.3" rx="0.5" fill="#f0dc98"/><rect x="809.50" y="409.25" width="2.6" height="1.3" rx="0.5" fill="#f0dc98"/><rect x="812.40" y="406.75" width="2.6" height="1.3" rx="0.5" fill="#f0dc98"/><rect x="814.10" y="404.05" width="2.6" height="1.3" rx="0.5" fill="#f0dc98"/><rect x="816.40" y="400.85" width="2.6" height="1.3" rx="0.5" fill="#f0dc98"/><rect x="818.60" y="398.55" width="2.6" height="1.3" rx="0.5" fill="#f0dc98"/><rect x="820.90" y="404.05" width="2.6" height="1.3" rx="0.5" fill="#f0dc98"/><rect x="823.80" y="406.75" width="2.6" height="1.3" rx="0.5" fill="#f0dc98"/><rect x="827.80" y="398.55" width="2.6" height="1.3" rx="0.5" fill="#f0dc98"/><rect x="830.10" y="395.45" width="2.6" height="1.3" rx="0.5" fill="#f0dc98"/><rect x="832.40" y="406.75" width="2.6" height="1.3" rx="0.5" fill="#f0dc98"/><rect x="834.60" y="403.25" width="2.6" height="1.3" rx="0.5" fill="#f0dc98"/><rect x="836.90" y="404.45" width="2.6" height="1.3" rx="0.5" fill="#f0dc98"/><rect x="839.20" y="406.75" width="2.6" height="1.3" rx="0.5" fill="#f0dc98"/><rect x="842.10" y="404.45" width="2.6" height="1.3" rx="0.5" fill="#f0dc98"/><rect x="846.10" y="400.85" width="2.6" height="1.3" rx="0.5" fill="#f0dc98"/><rect x="848.40" y="398.55" width="2.6" height="1.3" rx="0.5" fill="#f0dc98"/><rect x="850.70" y="396.25" width="2.6" height="1.3" rx="0.5" fill="#f0dc98"/><rect x="852.90" y="398.55" width="2.6" height="1.3" rx="0.5" fill="#f0dc98"/><rect x="855.20" y="400.85" width="2.6" height="1.3" rx="0.5" fill="#f0dc98"/><rect x="857.50" y="404.45" width="2.6" height="1.3" rx="0.5" fill="#f0dc98"/><rect x="859.20" y="406.75" width="2.6" height="1.3" rx="0.5" fill="#f0dc98"/><rect x="861.70" y="409.25" width="2.6" height="1.3" rx="0.5" fill="#f0dc98"/><rect x="864.50" y="409.25" width="2.6" height="1.3" rx="0.5" fill="#f0dc98"/><rect x="867.00" y="406.75" width="2.6" height="1.3" rx="0.5" fill="#f0dc98"/><rect x="869.30" y="404.45" width="2.6" height="1.3" rx="0.5" fill="#f0dc98"/><rect x="871.90" y="399.25" width="2.6" height="1.3" rx="0.5" fill="#f0dc98"/><rect x="873.70" y="400.85" width="2.6" height="1.3" rx="0.5" fill="#f0dc98"/><rect x="875.90" y="404.45" width="2.6" height="1.3" rx="0.5" fill="#f0dc98"/><rect x="878.80" y="412.65" width="2.6" height="1.3" rx="0.5" fill="#f0dc98"/><rect x="882.80" y="409.25" width="2.6" height="1.3" rx="0.5" fill="#f0dc98"/><rect x="885.70" y="406.75" width="2.6" height="1.3" rx="0.5" fill="#f0dc98"/><rect x="887.40" y="404.05" width="2.6" height="1.3" rx="0.5" fill="#f0dc98"/><rect x="889.70" y="400.85" width="2.6" height="1.3" rx="0.5" fill="#f0dc98"/><rect x="891.90" y="398.55" width="2.6" height="1.3" rx="0.5" fill="#f0dc98"/><rect x="894.20" y="404.05" width="2.6" height="1.3" rx="0.5" fill="#f0dc98"/><rect x="897.10" y="406.75" width="2.6" height="1.3" rx="0.5" fill="#f0dc98"/><rect x="901.10" y="398.55" width="2.6" height="1.3" rx="0.5" fill="#f0dc98"/><rect x="903.40" y="395.45" width="2.6" height="1.3" rx="0.5" fill="#f0dc98"/><rect x="905.70" y="406.75" width="2.6" height="1.3" rx="0.5" fill="#f0dc98"/><rect x="907.90" y="403.25" width="2.6" height="1.3" rx="0.5" fill="#f0dc98"/><rect x="910.20" y="404.45" width="2.6" height="1.3" rx="0.5" fill="#f0dc98"/><rect x="912.50" y="406.75" width="2.6" height="1.3" rx="0.5" fill="#f0dc98"/><rect x="915.40" y="404.45" width="2.6" height="1.3" rx="0.5" fill="#f0dc98"/><rect x="919.40" y="400.85" width="2.6" height="1.3" rx="0.5" fill="#f0dc98"/><rect x="921.70" y="398.55" width="2.6" height="1.3" rx="0.5" fill="#f0dc98"/><rect x="924.00" y="396.25" width="2.6" height="1.3" rx="0.5" fill="#f0dc98"/><rect x="926.20" y="398.55" width="2.6" height="1.3" rx="0.5" fill="#f0dc98"/><rect x="928.50" y="400.85" width="2.6" height="1.3" rx="0.5" fill="#f0dc98"/><rect x="930.80" y="404.45" width="2.6" height="1.3" rx="0.5" fill="#f0dc98"/><rect x="932.50" y="406.75" width="2.6" height="1.3" rx="0.5" fill="#f0dc98"/><rect x="935.00" y="409.25" width="2.6" height="1.3" rx="0.5" fill="#f0dc98"/><rect x="937.80" y="409.25" width="2.6" height="1.3" rx="0.5" fill="#f0dc98"/><rect x="940.30" y="406.75" width="2.6" height="1.3" rx="0.5" fill="#f0dc98"/><rect x="942.60" y="404.45" width="2.6" height="1.3" rx="0.5" fill="#f0dc98"/><rect x="945.20" y="399.25" width="2.6" height="1.3" rx="0.5" fill="#f0dc98"/><rect x="947.00" y="400.85" width="2.6" height="1.3" rx="0.5" fill="#f0dc98"/><rect x="949.20" y="404.45" width="2.6" height="1.3" rx="0.5" fill="#f0dc98"/><rect x="952.10" y="412.65" width="2.6" height="1.3" rx="0.5" fill="#f0dc98"/><rect x="956.10" y="409.25" width="2.6" height="1.3" rx="0.5" fill="#f0dc98"/><rect x="959.00" y="406.75" width="2.6" height="1.3" rx="0.5" fill="#f0dc98"/><rect x="960.70" y="404.05" width="2.6" height="1.3" rx="0.5" fill="#f0dc98"/><rect x="963.00" y="400.85" width="2.6" height="1.3" rx="0.5" fill="#f0dc98"/><rect x="965.20" y="398.55" width="2.6" height="1.3" rx="0.5" fill="#f0dc98"/><rect x="967.50" y="404.05" width="2.6" height="1.3" rx="0.5" fill="#f0dc98"/><rect x="970.40" y="406.75" width="2.6" height="1.3" rx="0.5" fill="#f0dc98"/><rect x="974.40" y="398.55" width="2.6" height="1.3" rx="0.5" fill="#f0dc98"/><rect x="976.70" y="395.45" width="2.6" height="1.3" rx="0.5" fill="#f0dc98"/><rect x="979.00" y="406.75" width="2.6" height="1.3" rx="0.5" fill="#f0dc98"/><rect x="981.20" y="403.25" width="2.6" height="1.3" rx="0.5" fill="#f0dc98"/><rect x="983.50" y="404.45" width="2.6" height="1.3" rx="0.5" fill="#f0dc98"/><rect x="985.80" y="406.75" width="2.6" height="1.3" rx="0.5" fill="#f0dc98"/><rect x="988.70" y="404.45" width="2.6" height="1.3" rx="0.5" fill="#f0dc98"/><rect x="992.70" y="400.85" width="2.6" height="1.3" rx="0.5" fill="#f0dc98"/><rect x="995.00" y="398.55" width="2.6" height="1.3" rx="0.5" fill="#f0dc98"/><rect x="997.30" y="396.25" width="2.6" height="1.3" rx="0.5" fill="#f0dc98"/><rect x="999.50" y="398.55" width="2.6" height="1.3" rx="0.5" fill="#f0dc98"/><rect x="1001.80" y="400.85" width="2.6" height="1.3" rx="0.5" fill="#f0dc98"/><rect x="1004.10" y="404.45" width="2.6" height="1.3" rx="0.5" fill="#f0dc98"/><rect x="1005.80" y="406.75" width="2.6" height="1.3" rx="0.5" fill="#f0dc98"/></svg>
<svg style="left:0;top:0;" width="1400" height="700" viewBox="0 0 1400 700"><rect x="607.30" y="377.90" width="1.30" height="43.10" fill="#a8a08c"/><rect x="643.95" y="377.90" width="1.30" height="43.10" fill="#a8a08c"/><rect x="680.60" y="377.90" width="1.30" height="43.10" fill="#a8a08c"/><rect x="717.25" y="377.90" width="1.30" height="43.10" fill="#a8a08c"/><rect x="753.90" y="377.90" width="1.30" height="43.10" fill="#a8a08c"/><rect x="790.55" y="377.90" width="1.30" height="43.10" fill="#a8a08c"/><rect x="827.20" y="377.90" width="1.30" height="43.10" fill="#a8a08c"/><rect x="863.85" y="377.90" width="1.30" height="43.10" fill="#a8a08c"/><rect x="900.50" y="377.90" width="1.30" height="43.10" fill="#a8a08c"/><rect x="937.15" y="377.90" width="1.30" height="43.10" fill="#a8a08c"/><rect x="973.80" y="377.90" width="1.30" height="43.10" fill="#a8a08c"/></svg>
<svg style="left:0;top:0;" width="1400" height="700" viewBox="0 0 1400 700"><rect x="643.85" y="377.90" width="1.05" height="43.10" fill="#ecd8a0"/><rect x="644.90" y="377.90" width="0.95" height="43.10" fill="#806838"/><path d="M642.00 377.70h5.2l-2.6 2.6z" fill="#e4e8f0"/><rect x="717.15" y="377.90" width="1.05" height="43.10" fill="#ecd8a0"/><rect x="718.20" y="377.90" width="0.95" height="43.10" fill="#806838"/><path d="M715.30 377.70h5.2l-2.6 2.6z" fill="#e4e8f0"/><rect x="790.45" y="377.90" width="1.05" height="43.10" fill="#ecd8a0"/><rect x="791.50" y="377.90" width="0.95" height="43.10" fill="#806838"/><path d="M788.60 377.70h5.2l-2.6 2.6z" fill="#e4e8f0"/><rect x="863.75" y="377.90" width="1.05" height="43.10" fill="#ecd8a0"/><rect x="864.80" y="377.90" width="0.95" height="43.10" fill="#806838"/><path d="M861.90 377.70h5.2l-2.6 2.6z" fill="#e4e8f0"/><rect x="937.05" y="377.90" width="1.05" height="43.10" fill="#ecd8a0"/><rect x="938.10" y="377.90" width="0.95" height="43.10" fill="#806838"/><path d="M935.20 377.70h5.2l-2.6 2.6z" fill="#e4e8f0"/></svg>
<div class="t" style="left:572.00px;top:379.80px;width:60px;height:7px;overflow:hidden;"><span style="position:absolute;left:1.80px;top:0;font-size:4.7px;font-weight:700;line-height:6.4px;color:#4c3a10;">MIDI 5 R R</span></div>
<svg style="left:1001.00px;top:380.50px;" width="8" height="4.6" viewBox="0 0 8 4.6"><ellipse cx="2.1" cy="2.3" rx="1.55" ry="1.45" fill="none" stroke="#4c3a10" stroke-width="0.7"/><ellipse cx="5.7" cy="2.3" rx="1.55" ry="1.45" fill="none" stroke="#4c3a10" stroke-width="0.7"/></svg>
<div style="left:572.00px;top:424.30px;width:146.10px;height:42.90px;background:#b05c5c;border-radius:1.5px;overflow:hidden;"></div>
<svg style="left:572.00px;top:424.30px;" width="146.10" height="42.90" viewBox="0 0 146.10 42.90"><path d="M0.4 32.6 C 14 18, 34 10.4, 58 10.2 L0.4 10.2Z" fill="#7c3838" opacity="0.55"/><path d="M1.20 16.40 L2.10 15.85 L3.00 15.17 L3.90 14.80 L4.80 14.68 L5.70 14.63 L6.60 14.86 L7.50 14.67 L8.40 14.61 L9.30 14.52 L10.20 14.91 L11.10 14.79 L12.00 14.91 L12.90 14.51 L13.80 14.57 L14.70 14.94 L15.60 14.41 L16.50 14.42 L17.40 14.59 L18.30 14.62 L19.20 14.87 L20.10 14.95 L21.00 14.66 L21.90 14.93 L22.80 14.85 L23.70 14.82 L24.60 14.94 L25.50 14.70 L26.40 14.71 L27.30 14.49 L28.20 14.67 L29.10 14.60 L30.00 14.68 L30.90 14.59 L31.80 14.70 L32.70 14.80 L33.60 14.40 L34.50 14.40 L35.40 14.49 L36.30 14.56 L37.20 14.78 L38.10 14.83 L39.00 14.80 L39.90 14.92 L40.80 14.53 L41.70 14.74 L42.60 14.49 L43.50 14.74 L44.40 14.42 L45.30 14.49 L46.20 14.96 L47.10 14.84 L48.00 14.45 L48.90 14.70 L49.80 14.41 L50.70 14.74 L51.60 14.92 L52.50 14.61 L53.40 14.52 L54.30 14.81 L55.20 14.91 L56.10 14.77 L57.00 14.42 L57.90 14.54 L58.80 14.89 L59.70 14.82 L60.60 14.90 L61.50 14.93 L62.40 14.51 L63.30 14.86 L64.20 14.65 L65.10 14.71 L66.00 14.85 L66.90 14.55 L67.80 14.89 L68.70 14.60 L69.60 14.89 L70.50 14.72 L71.40 14.84 L72.30 14.81 L73.20 14.42 L74.10 14.51 L75.00 14.79 L75.90 14.46 L76.80 14.84 L77.70 14.74 L78.60 14.48 L79.50 14.60 L80.40 14.90 L81.30 14.41 L82.20 14.84 L83.10 14.82 L84.00 14.53 L84.90 14.78 L85.80 14.79 L86.70 14.92 L87.60 14.91 L88.50 14.63 L89.40 14.82 L90.30 14.62 L91.20 14.80 L92.10 14.80 L93.00 14.58 L93.90 14.87 L94.80 14.87 L95.70 14.78 L96.60 15.14 L97.50 15.19 L98.40 14.91 L99.30 15.00 L100.20 15.28 L101.10 15.34 L102.00 15.18 L102.90 15.15 L103.80 15.46 L104.70 15.25 L105.60 15.33 L106.50 15.46 L107.40 15.56 L108.30 15.69 L109.20 15.74 L110.10 15.56 L111.00 15.77 L111.90 15.72 L112.80 15.85 L113.70 15.79 L114.60 15.88 L115.50 15.97 L116.40 16.03 L117.30 16.01 L118.20 16.12 L119.10 16.15 L120.00 16.16 L120.90 16.19 L121.80 16.25 L122.70 16.32 L123.60 16.30 L124.50 16.32 L125.40 16.33 L126.30 16.32 L127.20 16.32 L128.10 16.33 L129.00 16.32 L129.90 16.32 L130.80 16.31 L131.70 16.32 L132.60 16.32 L133.50 16.30 L134.40 16.30 L135.30 16.31 L136.20 16.31 L137.10 16.31 L138.00 16.32 L138.90 16.33 L139.80 16.33 L140.70 16.30 L141.60 16.31 L142.50 16.30 L143.40 16.33 L144.30 16.31 L144.30 16.49 L143.40 16.47 L142.50 16.50 L141.60 16.49 L140.70 16.50 L139.80 16.47 L138.90 16.47 L138.00 16.48 L137.10 16.49 L136.20 16.49 L135.30 16.49 L134.40 16.50 L133.50 16.50 L132.60 16.48 L131.70 16.48 L130.80 16.49 L129.90 16.48 L129.00 16.48 L128.10 16.47 L127.20 16.48 L126.30 16.48 L125.40 16.47 L124.50 16.48 L123.60 16.50 L122.70 16.48 L121.80 16.55 L120.90 16.61 L120.00 16.64 L119.10 16.65 L118.20 16.68 L117.30 16.79 L116.40 16.77 L115.50 16.83 L114.60 16.92 L113.70 17.01 L112.80 16.95 L111.90 17.08 L111.00 17.03 L110.10 17.24 L109.20 17.06 L108.30 17.11 L107.40 17.24 L106.50 17.34 L105.60 17.47 L104.70 17.55 L103.80 17.34 L102.90 17.65 L102.00 17.62 L101.10 17.46 L100.20 17.52 L99.30 17.80 L98.40 17.89 L97.50 17.61 L96.60 17.66 L95.70 18.02 L94.80 17.93 L93.90 17.93 L93.00 18.22 L92.10 18.00 L91.20 18.00 L90.30 18.18 L89.40 17.98 L88.50 18.17 L87.60 17.89 L86.70 17.88 L85.80 18.01 L84.90 18.02 L84.00 18.27 L83.10 17.98 L82.20 17.96 L81.30 18.39 L80.40 17.90 L79.50 18.20 L78.60 18.32 L77.70 18.06 L76.80 17.96 L75.90 18.34 L75.00 18.01 L74.10 18.29 L73.20 18.38 L72.30 17.99 L71.40 17.96 L70.50 18.08 L69.60 17.91 L68.70 18.20 L67.80 17.91 L66.90 18.25 L66.00 17.95 L65.10 18.09 L64.20 18.15 L63.30 17.94 L62.40 18.29 L61.50 17.87 L60.60 17.90 L59.70 17.98 L58.80 17.91 L57.90 18.26 L57.00 18.38 L56.10 18.03 L55.20 17.89 L54.30 17.99 L53.40 18.28 L52.50 18.19 L51.60 17.88 L50.70 18.06 L49.80 18.39 L48.90 18.10 L48.00 18.35 L47.10 17.96 L46.20 17.84 L45.30 18.31 L44.40 18.38 L43.50 18.06 L42.60 18.31 L41.70 18.06 L40.80 18.27 L39.90 17.88 L39.00 18.00 L38.10 17.97 L37.20 18.02 L36.30 18.24 L35.40 18.31 L34.50 18.40 L33.60 18.40 L32.70 18.00 L31.80 18.10 L30.90 18.21 L30.00 18.12 L29.10 18.20 L28.20 18.13 L27.30 18.31 L26.40 18.09 L25.50 18.10 L24.60 17.86 L23.70 17.98 L22.80 17.95 L21.90 17.87 L21.00 18.14 L20.10 17.85 L19.20 17.93 L18.30 18.18 L17.40 18.21 L16.50 18.38 L15.60 18.39 L14.70 17.86 L13.80 18.23 L12.90 18.29 L12.00 17.89 L11.10 18.01 L10.20 17.89 L9.30 18.28 L8.40 18.19 L7.50 18.13 L6.60 17.94 L5.70 18.17 L4.80 18.12 L3.90 18.00 L3.00 17.63 L2.10 16.95 L1.20 16.40Z" fill="#de9090"/><path d="M1 16.4H145.1" stroke="#de9090" stroke-width="0.5"/><path d="M1.20 27.60 L2.10 26.78 L3.00 25.95 L3.90 25.53 L4.80 25.50 L5.70 25.21 L6.60 25.29 L7.50 24.85 L8.40 24.95 L9.30 25.02 L10.20 25.06 L11.10 24.98 L12.00 25.39 L12.90 25.15 L13.80 25.38 L14.70 24.78 L15.60 25.46 L16.50 24.85 L17.40 25.45 L18.30 24.95 L19.20 25.24 L20.10 25.18 L21.00 24.83 L21.90 25.50 L22.80 25.46 L23.70 24.77 L24.60 25.10 L25.50 25.44 L26.40 24.71 L27.30 24.74 L28.20 25.42 L29.10 25.17 L30.00 25.40 L30.90 25.26 L31.80 25.01 L32.70 25.38 L33.60 24.95 L34.50 25.47 L35.40 25.37 L36.30 24.85 L37.20 25.19 L38.10 25.17 L39.00 25.03 L39.90 25.12 L40.80 25.20 L41.70 25.49 L42.60 24.92 L43.50 24.73 L44.40 24.72 L45.30 24.97 L46.20 25.22 L47.10 25.22 L48.00 24.95 L48.90 24.96 L49.80 25.42 L50.70 25.32 L51.60 25.22 L52.50 25.10 L53.40 24.85 L54.30 25.11 L55.20 25.49 L56.10 24.84 L57.00 25.16 L57.90 25.09 L58.80 25.33 L59.70 25.17 L60.60 25.20 L61.50 24.89 L62.40 25.43 L63.30 25.07 L64.20 25.37 L65.10 24.95 L66.00 25.48 L66.90 25.29 L67.80 25.23 L68.70 24.99 L69.60 25.47 L70.50 25.14 L71.40 25.34 L72.30 25.28 L73.20 25.13 L74.10 24.73 L75.00 25.12 L75.90 24.74 L76.80 25.38 L77.70 24.76 L78.60 25.22 L79.50 25.36 L80.40 24.90 L81.30 24.77 L82.20 25.51 L83.10 25.29 L84.00 24.89 L84.90 25.23 L85.80 25.32 L86.70 25.50 L87.60 25.48 L88.50 25.01 L89.40 24.71 L90.30 24.70 L91.20 25.17 L92.10 25.60 L93.00 25.44 L93.90 25.16 L94.80 25.20 L95.70 25.40 L96.60 25.74 L97.50 25.61 L98.40 25.71 L99.30 25.68 L100.20 25.96 L101.10 25.64 L102.00 25.74 L102.90 26.19 L103.80 26.19 L104.70 25.98 L105.60 26.32 L106.50 26.09 L107.40 26.34 L108.30 26.34 L109.20 26.40 L110.10 26.64 L111.00 26.68 L111.90 26.75 L112.80 26.69 L113.70 26.75 L114.60 26.96 L115.50 26.85 L116.40 27.02 L117.30 27.11 L118.20 27.14 L119.10 27.13 L120.00 27.26 L120.90 27.32 L121.80 27.36 L122.70 27.46 L123.60 27.46 L124.50 27.48 L125.40 27.47 L126.30 27.46 L127.20 27.46 L128.10 27.47 L129.00 27.48 L129.90 27.48 L130.80 27.47 L131.70 27.47 L132.60 27.49 L133.50 27.47 L134.40 27.46 L135.30 27.46 L136.20 27.46 L137.10 27.46 L138.00 27.47 L138.90 27.46 L139.80 27.48 L140.70 27.49 L141.60 27.48 L142.50 27.48 L143.40 27.46 L144.30 27.47 L144.30 27.73 L143.40 27.74 L142.50 27.72 L141.60 27.72 L140.70 27.71 L139.80 27.72 L138.90 27.74 L138.00 27.73 L137.10 27.74 L136.20 27.74 L135.30 27.74 L134.40 27.74 L133.50 27.73 L132.60 27.71 L131.70 27.73 L130.80 27.73 L129.90 27.72 L129.00 27.72 L128.10 27.73 L127.20 27.74 L126.30 27.74 L125.40 27.73 L124.50 27.72 L123.60 27.74 L122.70 27.74 L121.80 27.84 L120.90 27.88 L120.00 27.94 L119.10 28.07 L118.20 28.06 L117.30 28.09 L116.40 28.18 L115.50 28.35 L114.60 28.24 L113.70 28.45 L112.80 28.51 L111.90 28.45 L111.00 28.52 L110.10 28.56 L109.20 28.80 L108.30 28.86 L107.40 28.86 L106.50 29.11 L105.60 28.88 L104.70 29.22 L103.80 29.01 L102.90 29.01 L102.00 29.46 L101.10 29.56 L100.20 29.24 L99.30 29.52 L98.40 29.49 L97.50 29.59 L96.60 29.46 L95.70 29.80 L94.80 30.00 L93.90 30.04 L93.00 29.76 L92.10 29.60 L91.20 30.03 L90.30 30.50 L89.40 30.49 L88.50 30.19 L87.60 29.72 L86.70 29.70 L85.80 29.88 L84.90 29.97 L84.00 30.31 L83.10 29.91 L82.20 29.69 L81.30 30.43 L80.40 30.30 L79.50 29.84 L78.60 29.98 L77.70 30.44 L76.80 29.82 L75.90 30.46 L75.00 30.08 L74.10 30.47 L73.20 30.07 L72.30 29.92 L71.40 29.86 L70.50 30.06 L69.60 29.73 L68.70 30.21 L67.80 29.97 L66.90 29.91 L66.00 29.72 L65.10 30.25 L64.20 29.83 L63.30 30.13 L62.40 29.77 L61.50 30.31 L60.60 30.00 L59.70 30.03 L58.80 29.87 L57.90 30.11 L57.00 30.04 L56.10 30.36 L55.20 29.71 L54.30 30.09 L53.40 30.35 L52.50 30.10 L51.60 29.98 L50.70 29.88 L49.80 29.78 L48.90 30.24 L48.00 30.25 L47.10 29.98 L46.20 29.98 L45.30 30.23 L44.40 30.48 L43.50 30.47 L42.60 30.28 L41.70 29.71 L40.80 30.00 L39.90 30.08 L39.00 30.17 L38.10 30.03 L37.20 30.01 L36.30 30.35 L35.40 29.83 L34.50 29.73 L33.60 30.25 L32.70 29.82 L31.80 30.19 L30.90 29.94 L30.00 29.80 L29.10 30.03 L28.20 29.78 L27.30 30.46 L26.40 30.49 L25.50 29.76 L24.60 30.10 L23.70 30.43 L22.80 29.74 L21.90 29.70 L21.00 30.37 L20.10 30.02 L19.20 29.96 L18.30 30.25 L17.40 29.75 L16.50 30.35 L15.60 29.74 L14.70 30.42 L13.80 29.82 L12.90 30.05 L12.00 29.81 L11.10 30.22 L10.20 30.14 L9.30 30.18 L8.40 30.25 L7.50 30.35 L6.60 29.91 L5.70 29.99 L4.80 29.70 L3.90 29.67 L3.00 29.25 L2.10 28.42 L1.20 27.60Z" fill="#de9090"/><path d="M1 27.6H145.1" stroke="#de9090" stroke-width="0.5"/><path d="M0.4 32.6 C 14 18, 34 10.4, 58 10.2" fill="none" stroke="#f4dada" stroke-width="0.8"/></svg>
<div style="left:572.00px;top:424.30px;width:146.10px;height:10.10px;background:#e07878;border-radius:1.5px 1.5px 0 0;"></div>
<svg style="left:0;top:0;" width="1400" height="700" viewBox="0 0 1400 700"><rect x="607.30" y="424.30" width="1.30" height="42.90" fill="#b09a9a"/><rect x="643.95" y="424.30" width="1.30" height="42.90" fill="#b09a9a"/><rect x="680.60" y="424.30" width="1.30" height="42.90" fill="#b09a9a"/></svg>
<div class="t" style="left:573.60px;top:426.90px;width:143.10px;height:7px;overflow:hidden;font-size:4.9px;line-height:6px;color:#781c1c;">DS_AVFP3_115_chord_loop_break_choir_faget_F#</div>
<div style="left:717.90px;top:424.30px;width:146.80px;height:42.90px;background:#b05c5c;border-radius:1.5px;overflow:hidden;"></div>
<svg style="left:717.90px;top:424.30px;" width="146.80" height="42.90" viewBox="0 0 146.80 42.90"><path d="M1.20 16.40 L2.10 15.87 L3.00 15.36 L3.90 14.82 L4.80 14.73 L5.70 14.59 L6.60 14.82 L7.50 14.60 L8.40 14.95 L9.30 14.79 L10.20 14.77 L11.10 14.88 L12.00 14.54 L12.90 14.79 L13.80 14.52 L14.70 14.42 L15.60 14.82 L16.50 14.46 L17.40 14.51 L18.30 14.59 L19.20 14.94 L20.10 14.70 L21.00 14.61 L21.90 14.79 L22.80 14.83 L23.70 14.79 L24.60 14.82 L25.50 14.52 L26.40 14.77 L27.30 14.72 L28.20 14.60 L29.10 14.43 L30.00 14.80 L30.90 14.94 L31.80 14.41 L32.70 14.49 L33.60 14.52 L34.50 14.67 L35.40 14.83 L36.30 14.87 L37.20 14.79 L38.10 14.70 L39.00 14.92 L39.90 14.57 L40.80 14.55 L41.70 14.95 L42.60 14.49 L43.50 14.68 L44.40 14.45 L45.30 14.69 L46.20 14.51 L47.10 14.71 L48.00 14.62 L48.90 14.68 L49.80 14.95 L50.70 14.88 L51.60 14.83 L52.50 14.73 L53.40 14.75 L54.30 14.66 L55.20 14.59 L56.10 14.74 L57.00 14.78 L57.90 14.67 L58.80 14.43 L59.70 14.52 L60.60 14.59 L61.50 14.50 L62.40 14.83 L63.30 14.90 L64.20 14.91 L65.10 14.89 L66.00 14.95 L66.90 14.61 L67.80 14.45 L68.70 14.90 L69.60 14.58 L70.50 14.43 L71.40 14.53 L72.30 14.87 L73.20 14.60 L74.10 14.82 L75.00 14.86 L75.90 14.95 L76.80 14.67 L77.70 14.45 L78.60 14.90 L79.50 14.88 L80.40 14.74 L81.30 14.94 L82.20 14.70 L83.10 14.55 L84.00 14.70 L84.90 14.94 L85.80 14.94 L86.70 14.85 L87.60 14.59 L88.50 14.44 L89.40 14.68 L90.30 14.90 L91.20 14.86 L92.10 14.79 L93.00 15.00 L93.90 15.03 L94.80 14.92 L95.70 14.76 L96.60 15.09 L97.50 14.84 L98.40 14.90 L99.30 15.14 L100.20 15.26 L101.10 15.32 L102.00 15.18 L102.90 15.17 L103.80 15.21 L104.70 15.47 L105.60 15.44 L106.50 15.61 L107.40 15.57 L108.30 15.61 L109.20 15.70 L110.10 15.75 L111.00 15.58 L111.90 15.78 L112.80 15.78 L113.70 15.82 L114.60 15.87 L115.50 15.90 L116.40 15.96 L117.30 16.00 L118.20 16.10 L119.10 16.08 L120.00 16.12 L120.90 16.17 L121.80 16.24 L122.70 16.32 L123.60 16.31 L124.50 16.31 L125.40 16.33 L126.30 16.32 L127.20 16.32 L128.10 16.31 L129.00 16.32 L129.90 16.32 L130.80 16.32 L131.70 16.32 L132.60 16.31 L133.50 16.31 L134.40 16.32 L135.30 16.32 L136.20 16.31 L137.10 16.33 L138.00 16.30 L138.90 16.33 L139.80 16.31 L140.70 16.32 L141.60 16.30 L142.50 16.31 L143.40 16.32 L144.30 16.31 L145.20 16.30 L145.20 16.50 L144.30 16.49 L143.40 16.48 L142.50 16.49 L141.60 16.50 L140.70 16.48 L139.80 16.49 L138.90 16.47 L138.00 16.50 L137.10 16.47 L136.20 16.49 L135.30 16.48 L134.40 16.48 L133.50 16.49 L132.60 16.49 L131.70 16.48 L130.80 16.48 L129.90 16.48 L129.00 16.48 L128.10 16.49 L127.20 16.48 L126.30 16.48 L125.40 16.47 L124.50 16.49 L123.60 16.49 L122.70 16.48 L121.80 16.56 L120.90 16.63 L120.00 16.68 L119.10 16.72 L118.20 16.70 L117.30 16.80 L116.40 16.84 L115.50 16.90 L114.60 16.93 L113.70 16.98 L112.80 17.02 L111.90 17.02 L111.00 17.22 L110.10 17.05 L109.20 17.10 L108.30 17.19 L107.40 17.23 L106.50 17.19 L105.60 17.36 L104.70 17.33 L103.80 17.59 L102.90 17.63 L102.00 17.62 L101.10 17.48 L100.20 17.54 L99.30 17.66 L98.40 17.90 L97.50 17.96 L96.60 17.71 L95.70 18.04 L94.80 17.88 L93.90 17.77 L93.00 17.80 L92.10 18.01 L91.20 17.94 L90.30 17.90 L89.40 18.12 L88.50 18.36 L87.60 18.21 L86.70 17.95 L85.80 17.86 L84.90 17.86 L84.00 18.10 L83.10 18.25 L82.20 18.10 L81.30 17.86 L80.40 18.06 L79.50 17.92 L78.60 17.90 L77.70 18.35 L76.80 18.13 L75.90 17.85 L75.00 17.94 L74.10 17.98 L73.20 18.20 L72.30 17.93 L71.40 18.27 L70.50 18.37 L69.60 18.22 L68.70 17.90 L67.80 18.35 L66.90 18.19 L66.00 17.85 L65.10 17.91 L64.20 17.89 L63.30 17.90 L62.40 17.97 L61.50 18.30 L60.60 18.21 L59.70 18.28 L58.80 18.37 L57.90 18.13 L57.00 18.02 L56.10 18.06 L55.20 18.21 L54.30 18.14 L53.40 18.05 L52.50 18.07 L51.60 17.97 L50.70 17.92 L49.80 17.85 L48.90 18.12 L48.00 18.18 L47.10 18.09 L46.20 18.29 L45.30 18.11 L44.40 18.35 L43.50 18.12 L42.60 18.31 L41.70 17.85 L40.80 18.25 L39.90 18.23 L39.00 17.88 L38.10 18.10 L37.20 18.01 L36.30 17.93 L35.40 17.97 L34.50 18.13 L33.60 18.28 L32.70 18.31 L31.80 18.39 L30.90 17.86 L30.00 18.00 L29.10 18.37 L28.20 18.20 L27.30 18.08 L26.40 18.03 L25.50 18.28 L24.60 17.98 L23.70 18.01 L22.80 17.97 L21.90 18.01 L21.00 18.19 L20.10 18.10 L19.20 17.86 L18.30 18.21 L17.40 18.29 L16.50 18.34 L15.60 17.98 L14.70 18.38 L13.80 18.28 L12.90 18.01 L12.00 18.26 L11.10 17.92 L10.20 18.03 L9.30 18.01 L8.40 17.85 L7.50 18.20 L6.60 17.98 L5.70 18.21 L4.80 18.07 L3.90 17.98 L3.00 17.44 L2.10 16.93 L1.20 16.40Z" fill="#de9090"/><path d="M1 16.4H145.8" stroke="#de9090" stroke-width="0.5"/><path d="M1.20 27.60 L2.10 26.75 L3.00 25.81 L3.90 25.43 L4.80 24.89 L5.70 24.94 L6.60 24.97 L7.50 25.42 L8.40 25.49 L9.30 25.20 L10.20 24.91 L11.10 25.31 L12.00 25.10 L12.90 25.25 L13.80 24.82 L14.70 24.74 L15.60 25.19 L16.50 24.70 L17.40 25.46 L18.30 24.85 L19.20 24.80 L20.10 25.39 L21.00 24.94 L21.90 25.06 L22.80 24.74 L23.70 25.34 L24.60 25.07 L25.50 24.80 L26.40 24.99 L27.30 25.26 L28.20 25.45 L29.10 24.75 L30.00 25.13 L30.90 24.70 L31.80 25.40 L32.70 24.85 L33.60 24.85 L34.50 24.76 L35.40 25.50 L36.30 25.21 L37.20 25.47 L38.10 24.90 L39.00 25.22 L39.90 24.73 L40.80 25.21 L41.70 24.88 L42.60 24.81 L43.50 25.32 L44.40 25.06 L45.30 24.73 L46.20 25.08 L47.10 25.22 L48.00 25.30 L48.90 24.87 L49.80 25.36 L50.70 25.02 L51.60 25.06 L52.50 25.06 L53.40 25.41 L54.30 24.98 L55.20 24.77 L56.10 25.25 L57.00 25.24 L57.90 24.77 L58.80 25.04 L59.70 25.29 L60.60 25.50 L61.50 24.90 L62.40 25.23 L63.30 25.13 L64.20 25.29 L65.10 25.00 L66.00 24.92 L66.90 25.26 L67.80 25.45 L68.70 24.71 L69.60 24.77 L70.50 25.50 L71.40 25.05 L72.30 24.95 L73.20 25.18 L74.10 24.92 L75.00 24.73 L75.90 25.03 L76.80 25.19 L77.70 25.35 L78.60 25.31 L79.50 25.39 L80.40 25.42 L81.30 25.34 L82.20 24.83 L83.10 25.08 L84.00 24.86 L84.90 24.76 L85.80 24.85 L86.70 25.47 L87.60 24.76 L88.50 25.44 L89.40 24.89 L90.30 24.83 L91.20 25.01 L92.10 25.28 L93.00 25.59 L93.90 25.64 L94.80 25.30 L95.70 25.64 L96.60 25.51 L97.50 25.75 L98.40 25.87 L99.30 25.85 L100.20 25.66 L101.10 25.86 L102.00 25.98 L102.90 25.99 L103.80 26.02 L104.70 26.11 L105.60 26.21 L106.50 26.04 L107.40 26.20 L108.30 26.48 L109.20 26.51 L110.10 26.62 L111.00 26.62 L111.90 26.78 L112.80 26.63 L113.70 26.75 L114.60 26.85 L115.50 26.80 L116.40 27.00 L117.30 27.01 L118.20 27.02 L119.10 27.15 L120.00 27.21 L120.90 27.30 L121.80 27.31 L122.70 27.46 L123.60 27.48 L124.50 27.48 L125.40 27.47 L126.30 27.47 L127.20 27.47 L128.10 27.49 L129.00 27.47 L129.90 27.47 L130.80 27.46 L131.70 27.48 L132.60 27.48 L133.50 27.48 L134.40 27.47 L135.30 27.48 L136.20 27.50 L137.10 27.48 L138.00 27.46 L138.90 27.46 L139.80 27.48 L140.70 27.47 L141.60 27.49 L142.50 27.48 L143.40 27.47 L144.30 27.47 L145.20 27.49 L145.20 27.71 L144.30 27.73 L143.40 27.73 L142.50 27.72 L141.60 27.71 L140.70 27.73 L139.80 27.72 L138.90 27.74 L138.00 27.74 L137.10 27.72 L136.20 27.70 L135.30 27.72 L134.40 27.73 L133.50 27.72 L132.60 27.72 L131.70 27.72 L130.80 27.74 L129.90 27.73 L129.00 27.73 L128.10 27.71 L127.20 27.73 L126.30 27.73 L125.40 27.73 L124.50 27.72 L123.60 27.72 L122.70 27.74 L121.80 27.89 L120.90 27.90 L120.00 27.99 L119.10 28.05 L118.20 28.18 L117.30 28.19 L116.40 28.20 L115.50 28.40 L114.60 28.35 L113.70 28.45 L112.80 28.57 L111.90 28.42 L111.00 28.58 L110.10 28.58 L109.20 28.69 L108.30 28.72 L107.40 29.00 L106.50 29.16 L105.60 28.99 L104.70 29.09 L103.80 29.18 L102.90 29.21 L102.00 29.22 L101.10 29.34 L100.20 29.54 L99.30 29.35 L98.40 29.33 L97.50 29.45 L96.60 29.69 L95.70 29.56 L94.80 29.90 L93.90 29.56 L93.00 29.61 L92.10 29.92 L91.20 30.19 L90.30 30.37 L89.40 30.31 L88.50 29.76 L87.60 30.44 L86.70 29.73 L85.80 30.35 L84.90 30.44 L84.00 30.34 L83.10 30.12 L82.20 30.37 L81.30 29.86 L80.40 29.78 L79.50 29.81 L78.60 29.89 L77.70 29.85 L76.80 30.01 L75.90 30.17 L75.00 30.47 L74.10 30.28 L73.20 30.02 L72.30 30.25 L71.40 30.15 L70.50 29.70 L69.60 30.43 L68.70 30.49 L67.80 29.75 L66.90 29.94 L66.00 30.28 L65.10 30.20 L64.20 29.91 L63.30 30.07 L62.40 29.97 L61.50 30.30 L60.60 29.70 L59.70 29.91 L58.80 30.16 L57.90 30.43 L57.00 29.96 L56.10 29.95 L55.20 30.43 L54.30 30.22 L53.40 29.79 L52.50 30.14 L51.60 30.14 L50.70 30.18 L49.80 29.84 L48.90 30.33 L48.00 29.90 L47.10 29.98 L46.20 30.12 L45.30 30.47 L44.40 30.14 L43.50 29.88 L42.60 30.39 L41.70 30.32 L40.80 29.99 L39.90 30.47 L39.00 29.98 L38.10 30.30 L37.20 29.73 L36.30 29.99 L35.40 29.70 L34.50 30.44 L33.60 30.35 L32.70 30.35 L31.80 29.80 L30.90 30.50 L30.00 30.07 L29.10 30.45 L28.20 29.75 L27.30 29.94 L26.40 30.21 L25.50 30.40 L24.60 30.13 L23.70 29.86 L22.80 30.46 L21.90 30.14 L21.00 30.26 L20.10 29.81 L19.20 30.40 L18.30 30.35 L17.40 29.74 L16.50 30.50 L15.60 30.01 L14.70 30.46 L13.80 30.38 L12.90 29.95 L12.00 30.10 L11.10 29.89 L10.20 30.29 L9.30 30.00 L8.40 29.71 L7.50 29.78 L6.60 30.23 L5.70 30.26 L4.80 30.31 L3.90 29.77 L3.00 29.39 L2.10 28.45 L1.20 27.60Z" fill="#de9090"/><path d="M1 27.6H145.8" stroke="#de9090" stroke-width="0.5"/></svg>
<div style="left:717.90px;top:424.30px;width:146.80px;height:10.10px;background:#e07878;border-radius:1.5px 1.5px 0 0;"></div>
<svg style="left:0;top:0;" width="1400" height="700" viewBox="0 0 1400 700"><rect x="753.90" y="424.30" width="1.30" height="42.90" fill="#b09a9a"/><rect x="790.55" y="424.30" width="1.30" height="42.90" fill="#b09a9a"/><rect x="827.20" y="424.30" width="1.30" height="42.90" fill="#b09a9a"/></svg>
<div class="t" style="left:719.50px;top:426.90px;width:143.80px;height:7px;overflow:hidden;font-size:4.9px;line-height:6px;color:#781c1c;">DS_AVFP3_115_chord_loop_break_choir_faget_F# Copy</div>
<div style="left:864.50px;top:424.30px;width:146.80px;height:42.90px;background:#b05c5c;border-radius:1.5px;overflow:hidden;"></div>
<svg style="left:864.50px;top:424.30px;" width="146.80" height="42.90" viewBox="0 0 146.80 42.90"><path d="M1.20 16.40 L2.10 15.83 L3.00 15.28 L3.90 14.80 L4.80 14.84 L5.70 14.52 L6.60 14.51 L7.50 14.67 L8.40 14.68 L9.30 14.83 L10.20 14.96 L11.10 14.75 L12.00 14.63 L12.90 14.92 L13.80 14.52 L14.70 14.83 L15.60 14.83 L16.50 14.94 L17.40 14.40 L18.30 14.55 L19.20 14.47 L20.10 14.62 L21.00 14.94 L21.90 14.78 L22.80 14.68 L23.70 14.90 L24.60 14.43 L25.50 14.75 L26.40 14.87 L27.30 14.50 L28.20 14.89 L29.10 14.44 L30.00 14.71 L30.90 14.65 L31.80 14.77 L32.70 14.69 L33.60 14.86 L34.50 14.94 L35.40 14.48 L36.30 14.83 L37.20 14.52 L38.10 14.84 L39.00 14.42 L39.90 14.46 L40.80 14.54 L41.70 14.53 L42.60 14.63 L43.50 14.55 L44.40 14.89 L45.30 14.69 L46.20 14.50 L47.10 14.85 L48.00 14.44 L48.90 14.46 L49.80 14.73 L50.70 14.76 L51.60 14.71 L52.50 14.74 L53.40 14.40 L54.30 14.74 L55.20 14.94 L56.10 14.91 L57.00 14.56 L57.90 14.40 L58.80 14.68 L59.70 14.68 L60.60 14.65 L61.50 14.54 L62.40 14.84 L63.30 14.62 L64.20 14.65 L65.10 14.61 L66.00 14.86 L66.90 14.86 L67.80 14.77 L68.70 14.44 L69.60 14.77 L70.50 14.63 L71.40 14.79 L72.30 14.90 L73.20 14.92 L74.10 14.50 L75.00 14.52 L75.90 14.75 L76.80 14.58 L77.70 14.58 L78.60 14.46 L79.50 14.42 L80.40 14.73 L81.30 14.41 L82.20 14.42 L83.10 14.63 L84.00 14.47 L84.90 14.69 L85.80 14.75 L86.70 14.82 L87.60 14.47 L88.50 14.87 L89.40 14.92 L90.30 14.51 L91.20 14.55 L92.10 14.76 L93.00 14.62 L93.90 15.07 L94.80 15.00 L95.70 15.03 L96.60 15.01 L97.50 15.17 L98.40 15.25 L99.30 15.18 L100.20 14.99 L101.10 15.01 L102.00 15.15 L102.90 15.29 L103.80 15.42 L104.70 15.22 L105.60 15.41 L106.50 15.40 L107.40 15.65 L108.30 15.63 L109.20 15.51 L110.10 15.57 L111.00 15.60 L111.90 15.71 L112.80 15.79 L113.70 15.81 L114.60 15.81 L115.50 15.94 L116.40 15.95 L117.30 16.03 L118.20 16.02 L119.10 16.14 L120.00 16.12 L120.90 16.15 L121.80 16.25 L122.70 16.31 L123.60 16.31 L124.50 16.30 L125.40 16.31 L126.30 16.32 L127.20 16.32 L128.10 16.30 L129.00 16.30 L129.90 16.32 L130.80 16.33 L131.70 16.33 L132.60 16.33 L133.50 16.32 L134.40 16.32 L135.30 16.30 L136.20 16.31 L137.10 16.32 L138.00 16.31 L138.90 16.32 L139.80 16.31 L140.70 16.32 L141.60 16.32 L142.50 16.32 L143.40 16.32 L144.30 16.31 L145.20 16.31 L145.20 16.49 L144.30 16.49 L143.40 16.48 L142.50 16.48 L141.60 16.48 L140.70 16.48 L139.80 16.49 L138.90 16.48 L138.00 16.49 L137.10 16.48 L136.20 16.49 L135.30 16.50 L134.40 16.48 L133.50 16.48 L132.60 16.47 L131.70 16.47 L130.80 16.47 L129.90 16.48 L129.00 16.50 L128.10 16.50 L127.20 16.48 L126.30 16.48 L125.40 16.49 L124.50 16.50 L123.60 16.49 L122.70 16.49 L121.80 16.55 L120.90 16.65 L120.00 16.68 L119.10 16.66 L118.20 16.78 L117.30 16.77 L116.40 16.85 L115.50 16.86 L114.60 16.99 L113.70 16.99 L112.80 17.01 L111.90 17.09 L111.00 17.20 L110.10 17.23 L109.20 17.29 L108.30 17.17 L107.40 17.15 L106.50 17.40 L105.60 17.39 L104.70 17.58 L103.80 17.38 L102.90 17.51 L102.00 17.65 L101.10 17.79 L100.20 17.81 L99.30 17.62 L98.40 17.55 L97.50 17.63 L96.60 17.79 L95.70 17.77 L94.80 17.80 L93.90 17.73 L93.00 18.18 L92.10 18.04 L91.20 18.25 L90.30 18.29 L89.40 17.88 L88.50 17.93 L87.60 18.33 L86.70 17.98 L85.80 18.05 L84.90 18.11 L84.00 18.33 L83.10 18.17 L82.20 18.38 L81.30 18.39 L80.40 18.07 L79.50 18.38 L78.60 18.34 L77.70 18.22 L76.80 18.22 L75.90 18.05 L75.00 18.28 L74.10 18.30 L73.20 17.88 L72.30 17.90 L71.40 18.01 L70.50 18.17 L69.60 18.03 L68.70 18.36 L67.80 18.03 L66.90 17.94 L66.00 17.94 L65.10 18.19 L64.20 18.15 L63.30 18.18 L62.40 17.96 L61.50 18.26 L60.60 18.15 L59.70 18.12 L58.80 18.12 L57.90 18.40 L57.00 18.24 L56.10 17.89 L55.20 17.86 L54.30 18.06 L53.40 18.40 L52.50 18.06 L51.60 18.09 L50.70 18.04 L49.80 18.07 L48.90 18.34 L48.00 18.36 L47.10 17.95 L46.20 18.30 L45.30 18.11 L44.40 17.91 L43.50 18.25 L42.60 18.17 L41.70 18.27 L40.80 18.26 L39.90 18.34 L39.00 18.38 L38.10 17.96 L37.20 18.28 L36.30 17.97 L35.40 18.32 L34.50 17.86 L33.60 17.94 L32.70 18.11 L31.80 18.03 L30.90 18.15 L30.00 18.09 L29.10 18.36 L28.20 17.91 L27.30 18.30 L26.40 17.93 L25.50 18.05 L24.60 18.37 L23.70 17.90 L22.80 18.12 L21.90 18.02 L21.00 17.86 L20.10 18.18 L19.20 18.33 L18.30 18.25 L17.40 18.40 L16.50 17.86 L15.60 17.97 L14.70 17.97 L13.80 18.28 L12.90 17.88 L12.00 18.17 L11.10 18.05 L10.20 17.84 L9.30 17.97 L8.40 18.12 L7.50 18.13 L6.60 18.29 L5.70 18.28 L4.80 17.96 L3.90 18.00 L3.00 17.52 L2.10 16.97 L1.20 16.40Z" fill="#de9090"/><path d="M1 16.4H145.8" stroke="#de9090" stroke-width="0.5"/><path d="M1.20 27.60 L2.10 26.91 L3.00 26.29 L3.90 24.89 L4.80 25.36 L5.70 25.41 L6.60 24.98 L7.50 25.23 L8.40 24.79 L9.30 25.32 L10.20 24.73 L11.10 25.25 L12.00 25.02 L12.90 24.76 L13.80 24.96 L14.70 24.76 L15.60 24.94 L16.50 25.47 L17.40 24.80 L18.30 25.03 L19.20 25.26 L20.10 25.36 L21.00 24.82 L21.90 25.04 L22.80 24.75 L23.70 24.88 L24.60 24.73 L25.50 25.05 L26.40 24.94 L27.30 25.01 L28.20 25.30 L29.10 24.74 L30.00 25.26 L30.90 24.88 L31.80 24.74 L32.70 24.98 L33.60 25.40 L34.50 24.84 L35.40 24.97 L36.30 25.36 L37.20 25.47 L38.10 25.08 L39.00 25.49 L39.90 24.76 L40.80 25.10 L41.70 25.09 L42.60 25.18 L43.50 24.98 L44.40 24.77 L45.30 25.26 L46.20 25.21 L47.10 25.04 L48.00 25.27 L48.90 25.03 L49.80 25.07 L50.70 25.16 L51.60 24.97 L52.50 25.08 L53.40 25.44 L54.30 24.70 L55.20 25.22 L56.10 25.16 L57.00 25.18 L57.90 24.76 L58.80 24.74 L59.70 25.10 L60.60 25.19 L61.50 25.43 L62.40 24.78 L63.30 25.37 L64.20 25.07 L65.10 25.23 L66.00 25.25 L66.90 25.22 L67.80 25.36 L68.70 25.48 L69.60 25.08 L70.50 24.87 L71.40 24.99 L72.30 25.35 L73.20 24.95 L74.10 25.47 L75.00 25.18 L75.90 24.84 L76.80 24.76 L77.70 25.14 L78.60 24.82 L79.50 25.11 L80.40 25.09 L81.30 25.04 L82.20 24.71 L83.10 24.91 L84.00 25.13 L84.90 24.92 L85.80 24.99 L86.70 25.22 L87.60 24.88 L88.50 24.85 L89.40 25.02 L90.30 24.75 L91.20 25.53 L92.10 25.21 L93.00 25.17 L93.90 25.45 L94.80 25.64 L95.70 25.33 L96.60 25.57 L97.50 25.75 L98.40 25.95 L99.30 25.44 L100.20 25.88 L101.10 26.07 L102.00 26.08 L102.90 26.11 L103.80 25.87 L104.70 26.27 L105.60 26.28 L106.50 26.42 L107.40 26.32 L108.30 26.49 L109.20 26.50 L110.10 26.42 L111.00 26.43 L111.90 26.53 L112.80 26.84 L113.70 26.80 L114.60 26.74 L115.50 27.00 L116.40 27.02 L117.30 27.03 L118.20 27.11 L119.10 27.12 L120.00 27.19 L120.90 27.29 L121.80 27.37 L122.70 27.49 L123.60 27.48 L124.50 27.49 L125.40 27.47 L126.30 27.49 L127.20 27.46 L128.10 27.47 L129.00 27.49 L129.90 27.48 L130.80 27.47 L131.70 27.49 L132.60 27.48 L133.50 27.49 L134.40 27.46 L135.30 27.50 L136.20 27.47 L137.10 27.46 L138.00 27.46 L138.90 27.49 L139.80 27.47 L140.70 27.49 L141.60 27.48 L142.50 27.46 L143.40 27.46 L144.30 27.50 L145.20 27.48 L145.20 27.72 L144.30 27.70 L143.40 27.74 L142.50 27.74 L141.60 27.72 L140.70 27.71 L139.80 27.73 L138.90 27.71 L138.00 27.74 L137.10 27.74 L136.20 27.73 L135.30 27.70 L134.40 27.74 L133.50 27.71 L132.60 27.72 L131.70 27.71 L130.80 27.73 L129.90 27.72 L129.00 27.71 L128.10 27.73 L127.20 27.74 L126.30 27.71 L125.40 27.73 L124.50 27.71 L123.60 27.72 L122.70 27.71 L121.80 27.83 L120.90 27.91 L120.00 28.01 L119.10 28.08 L118.20 28.09 L117.30 28.17 L116.40 28.18 L115.50 28.20 L114.60 28.46 L113.70 28.40 L112.80 28.36 L111.90 28.67 L111.00 28.77 L110.10 28.78 L109.20 28.70 L108.30 28.71 L107.40 28.88 L106.50 28.78 L105.60 28.92 L104.70 28.93 L103.80 29.33 L102.90 29.09 L102.00 29.12 L101.10 29.13 L100.20 29.32 L99.30 29.76 L98.40 29.25 L97.50 29.45 L96.60 29.63 L95.70 29.87 L94.80 29.56 L93.90 29.75 L93.00 30.03 L92.10 29.99 L91.20 29.67 L90.30 30.45 L89.40 30.18 L88.50 30.35 L87.60 30.32 L86.70 29.98 L85.80 30.21 L84.90 30.28 L84.00 30.07 L83.10 30.29 L82.20 30.49 L81.30 30.16 L80.40 30.11 L79.50 30.09 L78.60 30.38 L77.70 30.06 L76.80 30.44 L75.90 30.36 L75.00 30.02 L74.10 29.73 L73.20 30.25 L72.30 29.85 L71.40 30.21 L70.50 30.33 L69.60 30.12 L68.70 29.72 L67.80 29.84 L66.90 29.98 L66.00 29.95 L65.10 29.97 L64.20 30.13 L63.30 29.83 L62.40 30.42 L61.50 29.77 L60.60 30.01 L59.70 30.10 L58.80 30.46 L57.90 30.44 L57.00 30.02 L56.10 30.04 L55.20 29.98 L54.30 30.50 L53.40 29.76 L52.50 30.12 L51.60 30.23 L50.70 30.04 L49.80 30.13 L48.90 30.17 L48.00 29.93 L47.10 30.16 L46.20 29.99 L45.30 29.94 L44.40 30.43 L43.50 30.22 L42.60 30.02 L41.70 30.11 L40.80 30.10 L39.90 30.44 L39.00 29.71 L38.10 30.12 L37.20 29.73 L36.30 29.84 L35.40 30.23 L34.50 30.36 L33.60 29.80 L32.70 30.22 L31.80 30.46 L30.90 30.32 L30.00 29.94 L29.10 30.46 L28.20 29.90 L27.30 30.19 L26.40 30.26 L25.50 30.15 L24.60 30.47 L23.70 30.32 L22.80 30.45 L21.90 30.16 L21.00 30.38 L20.10 29.84 L19.20 29.94 L18.30 30.17 L17.40 30.40 L16.50 29.73 L15.60 30.26 L14.70 30.44 L13.80 30.24 L12.90 30.44 L12.00 30.18 L11.10 29.95 L10.20 30.47 L9.30 29.88 L8.40 30.41 L7.50 29.97 L6.60 30.22 L5.70 29.79 L4.80 29.84 L3.90 30.31 L3.00 28.91 L2.10 28.29 L1.20 27.60Z" fill="#de9090"/><path d="M1 27.6H145.8" stroke="#de9090" stroke-width="0.5"/></svg>
<div style="left:864.50px;top:424.30px;width:146.80px;height:10.10px;background:#e07878;border-radius:1.5px 1.5px 0 0;"></div>
<svg style="left:0;top:0;" width="1400" height="700" viewBox="0 0 1400 700"><rect x="900.50" y="424.30" width="1.30" height="42.90" fill="#b09a9a"/><rect x="937.15" y="424.30" width="1.30" height="42.90" fill="#b09a9a"/><rect x="973.80" y="424.30" width="1.30" height="42.90" fill="#b09a9a"/></svg>
<div class="t" style="left:866.10px;top:426.90px;width:143.80px;height:7px;overflow:hidden;font-size:4.9px;line-height:6px;color:#781c1c;">DS_AVFP3_115_chord_loop_break_choir_faget_F# Copy Copy</div>
<div style="left:571.80px;top:516.40px;width:133.60px;height:26.50px;background:#b0b050;border-radius:1.5px 1.5px 0 0;overflow:hidden;"></div>
<svg style="left:571.80px;top:516.40px;" width="133.60" height="26.50" viewBox="0 0 133.60 26.50"><path d="M1.20 16.47 L2.10 16.48 L3.00 16.48 L3.90 14.06 L4.80 14.31 L5.70 14.23 L6.60 14.33 L7.50 14.45 L8.40 14.20 L9.30 14.31 L10.20 14.16 L11.10 14.25 L12.00 14.12 L12.90 14.41 L13.80 14.62 L14.70 14.62 L15.60 14.20 L16.50 14.61 L17.40 16.46 L18.30 16.02 L19.20 16.12 L20.10 15.99 L21.00 16.13 L21.90 15.97 L22.80 16.45 L23.70 14.57 L24.60 14.20 L25.50 14.19 L26.40 14.64 L27.30 14.24 L28.20 14.64 L29.10 14.06 L30.00 14.23 L30.90 14.01 L31.80 14.69 L32.70 14.50 L33.60 14.28 L34.50 14.29 L35.40 14.60 L36.30 14.08 L37.20 14.11 L38.10 14.51 L39.00 14.62 L39.90 14.24 L40.80 16.47 L41.70 16.46 L42.60 15.93 L43.50 15.95 L44.40 16.03 L45.30 16.01 L46.20 16.47 L47.10 16.46 L48.00 16.47 L48.90 14.19 L49.80 14.34 L50.70 14.09 L51.60 14.25 L52.50 14.49 L53.40 14.63 L54.30 14.68 L55.20 14.70 L56.10 14.10 L57.00 14.09 L57.90 14.18 L58.80 14.65 L59.70 14.25 L60.60 14.64 L61.50 14.08 L62.40 14.25 L63.30 14.18 L64.20 14.28 L65.10 14.42 L66.00 14.11 L66.90 14.03 L67.80 14.55 L68.70 14.41 L69.60 16.46 L70.50 16.46 L71.40 16.17 L72.30 16.16 L73.20 16.08 L74.10 16.19 L75.00 16.19 L75.90 16.13 L76.80 16.19 L77.70 16.09 L78.60 16.18 L79.50 16.09 L80.40 16.47 L81.30 14.08 L82.20 14.18 L83.10 14.20 L84.00 14.57 L84.90 14.61 L85.80 14.71 L86.70 14.60 L87.60 14.24 L88.50 14.68 L89.40 14.56 L90.30 14.32 L91.20 14.62 L92.10 14.49 L93.00 14.56 L93.90 14.24 L94.80 14.64 L95.70 14.00 L96.60 14.29 L97.50 14.21 L98.40 14.33 L99.30 14.37 L100.20 14.02 L101.10 14.08 L102.00 14.13 L102.90 14.71 L103.80 15.68 L104.70 15.58 L105.60 15.67 L106.50 15.70 L107.40 15.66 L108.30 15.80 L109.20 16.46 L110.10 16.45 L111.00 16.48 L111.90 16.47 L112.80 16.46 L113.70 16.47 L114.60 16.46 L115.50 16.45 L116.40 16.45 L117.30 16.47 L118.20 16.48 L119.10 16.45 L120.00 16.46 L120.90 16.45 L121.80 16.45 L122.70 16.48 L123.60 16.46 L124.50 16.47 L125.40 16.45 L126.30 16.46 L127.20 16.48 L128.10 16.47 L129.00 16.46 L129.90 16.48 L130.80 16.48 L131.70 16.47 L131.70 16.73 L130.80 16.72 L129.90 16.72 L129.00 16.74 L128.10 16.73 L127.20 16.72 L126.30 16.74 L125.40 16.75 L124.50 16.73 L123.60 16.74 L122.70 16.72 L121.80 16.75 L120.90 16.75 L120.00 16.74 L119.10 16.75 L118.20 16.72 L117.30 16.73 L116.40 16.75 L115.50 16.75 L114.60 16.74 L113.70 16.73 L112.80 16.74 L111.90 16.73 L111.00 16.72 L110.10 16.75 L109.20 16.74 L108.30 17.40 L107.40 17.54 L106.50 17.50 L105.60 17.53 L104.70 17.62 L103.80 17.52 L102.90 18.49 L102.00 19.07 L101.10 19.12 L100.20 19.18 L99.30 18.83 L98.40 18.87 L97.50 18.99 L96.60 18.91 L95.70 19.20 L94.80 18.56 L93.90 18.96 L93.00 18.64 L92.10 18.71 L91.20 18.58 L90.30 18.88 L89.40 18.64 L88.50 18.52 L87.60 18.96 L86.70 18.60 L85.80 18.49 L84.90 18.59 L84.00 18.63 L83.10 19.00 L82.20 19.02 L81.30 19.12 L80.40 16.73 L79.50 17.11 L78.60 17.02 L77.70 17.11 L76.80 17.01 L75.90 17.07 L75.00 17.01 L74.10 17.01 L73.20 17.12 L72.30 17.04 L71.40 17.03 L70.50 16.74 L69.60 16.74 L68.70 18.79 L67.80 18.65 L66.90 19.17 L66.00 19.09 L65.10 18.78 L64.20 18.92 L63.30 19.02 L62.40 18.95 L61.50 19.12 L60.60 18.56 L59.70 18.95 L58.80 18.55 L57.90 19.02 L57.00 19.11 L56.10 19.10 L55.20 18.50 L54.30 18.52 L53.40 18.57 L52.50 18.71 L51.60 18.95 L50.70 19.11 L49.80 18.86 L48.90 19.01 L48.00 16.73 L47.10 16.74 L46.20 16.73 L45.30 17.19 L44.40 17.17 L43.50 17.25 L42.60 17.27 L41.70 16.74 L40.80 16.73 L39.90 18.96 L39.00 18.58 L38.10 18.69 L37.20 19.09 L36.30 19.12 L35.40 18.60 L34.50 18.91 L33.60 18.92 L32.70 18.70 L31.80 18.51 L30.90 19.19 L30.00 18.97 L29.10 19.14 L28.20 18.56 L27.30 18.96 L26.40 18.56 L25.50 19.01 L24.60 19.00 L23.70 18.63 L22.80 16.75 L21.90 17.23 L21.00 17.07 L20.10 17.21 L19.20 17.08 L18.30 17.18 L17.40 16.74 L16.50 18.59 L15.60 19.00 L14.70 18.58 L13.80 18.58 L12.90 18.79 L12.00 19.08 L11.10 18.95 L10.20 19.04 L9.30 18.89 L8.40 19.00 L7.50 18.75 L6.60 18.87 L5.70 18.97 L4.80 18.89 L3.90 19.14 L3.00 16.72 L2.10 16.72 L1.20 16.73Z" fill="#e4e498"/><path d="M1 16.6H132.6" stroke="#e4e498" stroke-width="0.5"/><path d="M1.20 25.07 L2.10 25.10 L3.00 25.09 L3.90 23.32 L4.80 22.98 L5.70 23.02 L6.60 22.87 L7.50 23.41 L8.40 23.19 L9.30 23.45 L10.20 23.33 L11.10 23.13 L12.00 23.45 L12.90 23.34 L13.80 23.04 L14.70 23.11 L15.60 23.32 L16.50 23.08 L17.40 25.06 L18.30 24.77 L19.20 24.63 L20.10 24.65 L21.00 24.71 L21.90 24.74 L22.80 25.06 L23.70 23.25 L24.60 23.41 L25.50 23.41 L26.40 22.90 L27.30 23.07 L28.20 22.93 L29.10 22.98 L30.00 23.11 L30.90 22.82 L31.80 23.22 L32.70 23.10 L33.60 22.91 L34.50 23.06 L35.40 22.89 L36.30 23.08 L37.20 23.00 L38.10 23.44 L39.00 23.32 L39.90 23.28 L40.80 25.09 L41.70 25.09 L42.60 24.66 L43.50 24.63 L44.40 24.55 L45.30 24.61 L46.20 25.08 L47.10 25.09 L48.00 25.09 L48.90 22.84 L49.80 23.04 L50.70 23.06 L51.60 23.36 L52.50 22.98 L53.40 23.36 L54.30 23.22 L55.20 22.81 L56.10 23.04 L57.00 23.10 L57.90 23.01 L58.80 22.91 L59.70 22.95 L60.60 23.32 L61.50 23.45 L62.40 23.26 L63.30 23.29 L64.20 23.33 L65.10 22.84 L66.00 22.88 L66.90 23.26 L67.80 23.03 L68.70 23.21 L69.60 25.06 L70.50 25.08 L71.40 24.82 L72.30 24.82 L73.20 24.78 L74.10 24.82 L75.00 24.78 L75.90 24.73 L76.80 24.80 L77.70 24.82 L78.60 24.72 L79.50 24.79 L80.40 25.09 L81.30 23.44 L82.20 23.40 L83.10 23.05 L84.00 22.94 L84.90 23.19 L85.80 23.43 L86.70 23.22 L87.60 22.80 L88.50 23.12 L89.40 22.82 L90.30 22.89 L91.20 23.46 L92.10 22.99 L93.00 23.01 L93.90 23.11 L94.80 23.29 L95.70 23.04 L96.60 23.40 L97.50 23.18 L98.40 23.17 L99.30 22.83 L100.20 22.88 L101.10 23.30 L102.00 23.14 L102.90 23.35 L103.80 24.26 L104.70 24.27 L105.60 24.43 L106.50 24.34 L107.40 24.35 L108.30 24.47 L109.20 25.07 L110.10 25.07 L111.00 25.06 L111.90 25.07 L112.80 25.10 L113.70 25.08 L114.60 25.10 L115.50 25.06 L116.40 25.06 L117.30 25.06 L118.20 25.08 L119.10 25.09 L120.00 25.06 L120.90 25.06 L121.80 25.09 L122.70 25.08 L123.60 25.09 L124.50 25.07 L125.40 25.07 L126.30 25.09 L127.20 25.08 L128.10 25.07 L129.00 25.09 L129.90 25.06 L130.80 25.08 L131.70 25.09 L131.70 25.31 L130.80 25.32 L129.90 25.34 L129.00 25.31 L128.10 25.33 L127.20 25.32 L126.30 25.31 L125.40 25.33 L124.50 25.33 L123.60 25.31 L122.70 25.32 L121.80 25.31 L120.90 25.34 L120.00 25.34 L119.10 25.31 L118.20 25.32 L117.30 25.34 L116.40 25.34 L115.50 25.34 L114.60 25.30 L113.70 25.32 L112.80 25.30 L111.90 25.33 L111.00 25.34 L110.10 25.33 L109.20 25.33 L108.30 25.93 L107.40 26.05 L106.50 26.06 L105.60 25.97 L104.70 26.13 L103.80 26.14 L102.90 27.05 L102.00 27.26 L101.10 27.10 L100.20 27.52 L99.30 27.57 L98.40 27.23 L97.50 27.22 L96.60 27.00 L95.70 27.36 L94.80 27.11 L93.90 27.29 L93.00 27.39 L92.10 27.41 L91.20 26.94 L90.30 27.51 L89.40 27.58 L88.50 27.28 L87.60 27.60 L86.70 27.18 L85.80 26.97 L84.90 27.21 L84.00 27.46 L83.10 27.35 L82.20 27.00 L81.30 26.96 L80.40 25.31 L79.50 25.61 L78.60 25.68 L77.70 25.58 L76.80 25.60 L75.90 25.67 L75.00 25.62 L74.10 25.58 L73.20 25.62 L72.30 25.58 L71.40 25.58 L70.50 25.32 L69.60 25.34 L68.70 27.19 L67.80 27.37 L66.90 27.14 L66.00 27.52 L65.10 27.56 L64.20 27.07 L63.30 27.11 L62.40 27.14 L61.50 26.95 L60.60 27.08 L59.70 27.45 L58.80 27.49 L57.90 27.39 L57.00 27.30 L56.10 27.36 L55.20 27.59 L54.30 27.18 L53.40 27.04 L52.50 27.42 L51.60 27.04 L50.70 27.34 L49.80 27.36 L48.90 27.56 L48.00 25.31 L47.10 25.31 L46.20 25.32 L45.30 25.79 L44.40 25.85 L43.50 25.77 L42.60 25.74 L41.70 25.31 L40.80 25.31 L39.90 27.12 L39.00 27.08 L38.10 26.96 L37.20 27.40 L36.30 27.32 L35.40 27.51 L34.50 27.34 L33.60 27.49 L32.70 27.30 L31.80 27.18 L30.90 27.58 L30.00 27.29 L29.10 27.42 L28.20 27.47 L27.30 27.33 L26.40 27.50 L25.50 26.99 L24.60 26.99 L23.70 27.15 L22.80 25.34 L21.90 25.66 L21.00 25.69 L20.10 25.75 L19.20 25.77 L18.30 25.63 L17.40 25.34 L16.50 27.32 L15.60 27.08 L14.70 27.29 L13.80 27.36 L12.90 27.06 L12.00 26.95 L11.10 27.27 L10.20 27.07 L9.30 26.95 L8.40 27.21 L7.50 26.99 L6.60 27.53 L5.70 27.38 L4.80 27.42 L3.90 27.08 L3.00 25.31 L2.10 25.30 L1.20 25.33Z" fill="#e4e498"/><path d="M1 25.2H132.6" stroke="#e4e498" stroke-width="0.5"/></svg>
<div style="left:571.80px;top:516.40px;width:133.60px;height:10.10px;background:#d8d870;border-radius:1.5px 1.5px 0 0;"></div>
<svg style="left:0;top:0;" width="1400" height="700" viewBox="0 0 1400 700"><rect x="607.30" y="516.40" width="1.30" height="26.50" fill="#b0ac88"/><rect x="643.95" y="516.40" width="1.30" height="26.50" fill="#b0ac88"/><rect x="680.60" y="516.40" width="1.30" height="26.50" fill="#b0ac88"/></svg>
<div class="t" style="left:573.40px;top:519.00px;width:130.60px;height:7px;overflow:hidden;font-size:4.9px;line-height:6px;color:#3c3c08;">DS_AVFP3_90_vocal_loop_female_chorus_harmony_w...</div>
<div style="left:791.60px;top:516.40px;width:178.80px;height:26.50px;background:#b89858;border-radius:1.5px 1.5px 0 0;overflow:hidden;"></div>
<svg style="left:791.60px;top:516.40px;" width="178.80" height="26.50" viewBox="0 0 178.80 26.50"><path d="M1.20 16.50 L2.10 16.49 L3.00 16.50 L3.90 16.48 L4.80 14.56 L5.70 14.33 L6.60 14.05 L7.50 14.44 L8.40 14.02 L9.30 14.20 L10.20 14.33 L11.10 14.27 L12.00 14.30 L12.90 14.47 L13.80 14.00 L14.70 14.43 L15.60 14.01 L16.50 14.11 L17.40 14.71 L18.30 14.54 L19.20 14.38 L20.10 14.13 L21.00 14.60 L21.90 14.28 L22.80 14.46 L23.70 14.16 L24.60 14.05 L25.50 14.17 L26.40 14.59 L27.30 14.17 L28.20 14.41 L29.10 14.12 L30.00 14.39 L30.90 14.07 L31.80 14.01 L32.70 14.13 L33.60 16.48 L34.50 16.48 L35.40 15.91 L36.30 16.00 L37.20 15.82 L38.10 15.94 L39.00 16.03 L39.90 15.94 L40.80 16.49 L41.70 16.50 L42.60 14.29 L43.50 14.84 L44.40 14.32 L45.30 14.55 L46.20 14.80 L47.10 14.68 L48.00 14.62 L48.90 14.84 L49.80 14.42 L50.70 14.49 L51.60 14.27 L52.50 14.37 L53.40 14.40 L54.30 14.26 L55.20 14.30 L56.10 14.49 L57.00 14.56 L57.90 14.57 L58.80 14.38 L59.70 14.31 L60.60 14.37 L61.50 14.37 L62.40 14.90 L63.30 14.64 L64.20 14.86 L65.10 14.53 L66.00 14.54 L66.90 14.55 L67.80 14.35 L68.70 14.77 L69.60 14.44 L70.50 14.53 L71.40 14.78 L72.30 16.47 L73.20 16.50 L74.10 16.38 L75.00 16.37 L75.90 16.37 L76.80 16.34 L77.70 16.37 L78.60 16.35 L79.50 16.39 L80.40 16.38 L81.30 16.50 L82.20 16.48 L83.10 14.42 L84.00 14.16 L84.90 14.65 L85.80 14.39 L86.70 14.03 L87.60 14.72 L88.50 14.25 L89.40 14.23 L90.30 14.20 L91.20 14.32 L92.10 14.36 L93.00 14.03 L93.90 14.52 L94.80 14.22 L95.70 14.24 L96.60 14.20 L97.50 14.38 L98.40 14.72 L99.30 14.16 L100.20 14.52 L101.10 14.16 L102.00 14.01 L102.90 14.16 L103.80 14.43 L104.70 14.10 L105.60 14.45 L106.50 14.50 L107.40 14.31 L108.30 14.25 L109.20 14.23 L110.10 14.33 L111.00 16.49 L111.90 16.48 L112.80 14.70 L113.70 14.52 L114.60 14.91 L115.50 14.83 L116.40 14.35 L117.30 14.77 L118.20 14.64 L119.10 14.88 L120.00 14.41 L120.90 14.70 L121.80 14.88 L122.70 14.74 L123.60 14.31 L124.50 14.42 L125.40 14.91 L126.30 14.29 L127.20 14.87 L128.10 14.60 L129.00 14.57 L129.90 14.40 L130.80 14.82 L131.70 14.37 L132.60 14.74 L133.50 14.43 L134.40 14.31 L135.30 14.53 L136.20 14.91 L137.10 14.48 L138.00 14.63 L138.90 14.44 L139.80 14.40 L140.70 14.84 L141.60 14.54 L142.50 15.78 L143.40 15.71 L144.30 15.79 L145.20 15.79 L146.10 15.75 L147.00 15.90 L147.90 15.73 L148.80 15.80 L149.70 15.78 L150.60 15.91 L151.50 15.81 L152.40 15.84 L153.30 16.50 L154.20 16.47 L155.10 16.48 L156.00 16.49 L156.90 16.50 L157.80 16.47 L158.70 16.50 L159.60 16.49 L160.50 16.49 L161.40 16.48 L162.30 16.48 L163.20 16.48 L164.10 16.49 L165.00 16.47 L165.90 16.48 L166.80 16.49 L167.70 16.48 L168.60 16.47 L169.50 16.49 L170.40 16.50 L171.30 16.50 L172.20 16.47 L173.10 16.50 L174.00 16.48 L174.90 16.50 L175.80 16.50 L176.70 16.50 L176.70 16.70 L175.80 16.70 L174.90 16.70 L174.00 16.72 L173.10 16.70 L172.20 16.73 L171.30 16.70 L170.40 16.70 L169.50 16.71 L168.60 16.73 L167.70 16.72 L166.80 16.71 L165.90 16.72 L165.00 16.73 L164.10 16.71 L163.20 16.72 L162.30 16.72 L161.40 16.72 L160.50 16.71 L159.60 16.71 L158.70 16.70 L157.80 16.73 L156.90 16.70 L156.00 16.71 L155.10 16.72 L154.20 16.73 L153.30 16.70 L152.40 17.36 L151.50 17.39 L150.60 17.29 L149.70 17.42 L148.80 17.40 L147.90 17.47 L147.00 17.30 L146.10 17.45 L145.20 17.41 L144.30 17.41 L143.40 17.49 L142.50 17.42 L141.60 18.66 L140.70 18.36 L139.80 18.80 L138.90 18.76 L138.00 18.57 L137.10 18.72 L136.20 18.29 L135.30 18.67 L134.40 18.89 L133.50 18.77 L132.60 18.46 L131.70 18.83 L130.80 18.38 L129.90 18.80 L129.00 18.63 L128.10 18.60 L127.20 18.33 L126.30 18.91 L125.40 18.29 L124.50 18.78 L123.60 18.89 L122.70 18.46 L121.80 18.32 L120.90 18.50 L120.00 18.79 L119.10 18.32 L118.20 18.56 L117.30 18.43 L116.40 18.85 L115.50 18.37 L114.60 18.29 L113.70 18.68 L112.80 18.50 L111.90 16.72 L111.00 16.71 L110.10 18.87 L109.20 18.97 L108.30 18.95 L107.40 18.89 L106.50 18.70 L105.60 18.75 L104.70 19.10 L103.80 18.77 L102.90 19.04 L102.00 19.19 L101.10 19.04 L100.20 18.68 L99.30 19.04 L98.40 18.48 L97.50 18.82 L96.60 19.00 L95.70 18.96 L94.80 18.98 L93.90 18.68 L93.00 19.17 L92.10 18.84 L91.20 18.88 L90.30 19.00 L89.40 18.97 L88.50 18.95 L87.60 18.48 L86.70 19.17 L85.80 18.81 L84.90 18.55 L84.00 19.04 L83.10 18.78 L82.20 16.72 L81.30 16.70 L80.40 16.82 L79.50 16.81 L78.60 16.85 L77.70 16.83 L76.80 16.86 L75.90 16.83 L75.00 16.83 L74.10 16.82 L73.20 16.70 L72.30 16.73 L71.40 18.42 L70.50 18.67 L69.60 18.76 L68.70 18.43 L67.80 18.85 L66.90 18.65 L66.00 18.66 L65.10 18.67 L64.20 18.34 L63.30 18.56 L62.40 18.30 L61.50 18.83 L60.60 18.83 L59.70 18.89 L58.80 18.82 L57.90 18.63 L57.00 18.64 L56.10 18.71 L55.20 18.90 L54.30 18.94 L53.40 18.80 L52.50 18.83 L51.60 18.93 L50.70 18.71 L49.80 18.78 L48.90 18.36 L48.00 18.58 L47.10 18.52 L46.20 18.40 L45.30 18.65 L44.40 18.88 L43.50 18.36 L42.60 18.91 L41.70 16.70 L40.80 16.71 L39.90 17.26 L39.00 17.17 L38.10 17.26 L37.20 17.38 L36.30 17.20 L35.40 17.29 L34.50 16.72 L33.60 16.72 L32.70 19.07 L31.80 19.19 L30.90 19.13 L30.00 18.81 L29.10 19.08 L28.20 18.79 L27.30 19.03 L26.40 18.61 L25.50 19.03 L24.60 19.15 L23.70 19.04 L22.80 18.74 L21.90 18.92 L21.00 18.60 L20.10 19.07 L19.20 18.82 L18.30 18.66 L17.40 18.49 L16.50 19.09 L15.60 19.19 L14.70 18.77 L13.80 19.20 L12.90 18.73 L12.00 18.90 L11.10 18.93 L10.20 18.87 L9.30 19.00 L8.40 19.18 L7.50 18.76 L6.60 19.15 L5.70 18.87 L4.80 18.64 L3.90 16.72 L3.00 16.70 L2.10 16.71 L1.20 16.70Z" fill="#f0dca0"/><path d="M1 16.6H177.8" stroke="#f0dca0" stroke-width="0.5"/><path d="M1.20 25.08 L2.10 25.11 L3.00 25.09 L3.90 25.10 L4.80 22.84 L5.70 23.20 L6.60 22.85 L7.50 23.37 L8.40 22.80 L9.30 23.19 L10.20 23.35 L11.10 23.24 L12.00 23.05 L12.90 23.45 L13.80 23.21 L14.70 23.46 L15.60 23.43 L16.50 23.36 L17.40 23.32 L18.30 23.29 L19.20 22.95 L20.10 23.19 L21.00 22.90 L21.90 22.87 L22.80 22.87 L23.70 22.84 L24.60 23.09 L25.50 23.02 L26.40 22.88 L27.30 23.11 L28.20 23.38 L29.10 23.12 L30.00 23.12 L30.90 23.35 L31.80 23.41 L32.70 23.35 L33.60 25.09 L34.50 25.09 L35.40 24.55 L36.30 24.60 L37.20 24.68 L38.10 24.68 L39.00 24.55 L39.90 24.57 L40.80 25.10 L41.70 25.11 L42.60 23.57 L43.50 23.54 L44.40 23.57 L45.30 23.28 L46.20 23.46 L47.10 23.31 L48.00 23.39 L48.90 23.31 L49.80 23.19 L50.70 23.17 L51.60 23.55 L52.50 23.06 L53.40 23.13 L54.30 23.15 L55.20 23.37 L56.10 23.07 L57.00 23.15 L57.90 23.50 L58.80 23.23 L59.70 23.13 L60.60 23.19 L61.50 23.10 L62.40 23.32 L63.30 23.24 L64.20 23.60 L65.10 23.24 L66.00 23.56 L66.90 23.21 L67.80 23.10 L68.70 23.42 L69.60 23.60 L70.50 23.62 L71.40 23.33 L72.30 25.11 L73.20 25.09 L74.10 24.99 L75.00 24.99 L75.90 24.98 L76.80 25.02 L77.70 25.00 L78.60 25.02 L79.50 24.99 L80.40 24.97 L81.30 25.11 L82.20 25.09 L83.10 22.80 L84.00 23.25 L84.90 23.33 L85.80 23.30 L86.70 22.91 L87.60 23.42 L88.50 22.95 L89.40 23.30 L90.30 22.96 L91.20 22.88 L92.10 22.90 L93.00 23.34 L93.90 23.10 L94.80 23.26 L95.70 22.88 L96.60 23.27 L97.50 23.36 L98.40 23.20 L99.30 23.41 L100.20 23.32 L101.10 23.00 L102.00 23.25 L102.90 23.35 L103.80 22.84 L104.70 23.30 L105.60 22.94 L106.50 23.01 L107.40 23.10 L108.30 23.04 L109.20 23.08 L110.10 22.91 L111.00 25.09 L111.90 25.10 L112.80 23.25 L113.70 23.34 L114.60 23.09 L115.50 23.57 L116.40 23.37 L117.30 23.06 L118.20 23.60 L119.10 23.20 L120.00 23.10 L120.90 23.28 L121.80 23.61 L122.70 23.18 L123.60 23.49 L124.50 23.33 L125.40 23.15 L126.30 23.46 L127.20 23.50 L128.10 23.57 L129.00 23.44 L129.90 23.58 L130.80 23.22 L131.70 23.14 L132.60 23.61 L133.50 23.33 L134.40 23.17 L135.30 23.17 L136.20 23.48 L137.10 23.32 L138.00 23.23 L138.90 23.33 L139.80 23.04 L140.70 23.09 L141.60 23.06 L142.50 24.57 L143.40 24.59 L144.30 24.46 L145.20 24.46 L146.10 24.53 L147.00 24.54 L147.90 24.41 L148.80 24.41 L149.70 24.59 L150.60 24.57 L151.50 24.43 L152.40 24.50 L153.30 25.11 L154.20 25.08 L155.10 25.10 L156.00 25.11 L156.90 25.10 L157.80 25.10 L158.70 25.09 L159.60 25.09 L160.50 25.11 L161.40 25.10 L162.30 25.08 L163.20 25.10 L164.10 25.08 L165.00 25.08 L165.90 25.09 L166.80 25.09 L167.70 25.11 L168.60 25.08 L169.50 25.10 L170.40 25.10 L171.30 25.10 L172.20 25.10 L173.10 25.09 L174.00 25.10 L174.90 25.08 L175.80 25.09 L176.70 25.09 L176.70 25.31 L175.80 25.31 L174.90 25.32 L174.00 25.30 L173.10 25.31 L172.20 25.30 L171.30 25.30 L170.40 25.30 L169.50 25.30 L168.60 25.32 L167.70 25.29 L166.80 25.31 L165.90 25.31 L165.00 25.32 L164.10 25.32 L163.20 25.30 L162.30 25.32 L161.40 25.30 L160.50 25.29 L159.60 25.31 L158.70 25.31 L157.80 25.30 L156.90 25.30 L156.00 25.29 L155.10 25.30 L154.20 25.32 L153.30 25.29 L152.40 25.90 L151.50 25.97 L150.60 25.83 L149.70 25.81 L148.80 25.99 L147.90 25.99 L147.00 25.86 L146.10 25.87 L145.20 25.94 L144.30 25.94 L143.40 25.81 L142.50 25.83 L141.60 27.34 L140.70 27.31 L139.80 27.36 L138.90 27.07 L138.00 27.17 L137.10 27.08 L136.20 26.92 L135.30 27.23 L134.40 27.23 L133.50 27.07 L132.60 26.79 L131.70 27.26 L130.80 27.18 L129.90 26.82 L129.00 26.96 L128.10 26.83 L127.20 26.90 L126.30 26.94 L125.40 27.25 L124.50 27.07 L123.60 26.91 L122.70 27.22 L121.80 26.79 L120.90 27.12 L120.00 27.30 L119.10 27.20 L118.20 26.80 L117.30 27.34 L116.40 27.03 L115.50 26.83 L114.60 27.31 L113.70 27.06 L112.80 27.15 L111.90 25.30 L111.00 25.31 L110.10 27.49 L109.20 27.32 L108.30 27.36 L107.40 27.30 L106.50 27.39 L105.60 27.46 L104.70 27.10 L103.80 27.56 L102.90 27.05 L102.00 27.15 L101.10 27.40 L100.20 27.08 L99.30 26.99 L98.40 27.20 L97.50 27.04 L96.60 27.13 L95.70 27.52 L94.80 27.14 L93.90 27.30 L93.00 27.06 L92.10 27.50 L91.20 27.52 L90.30 27.44 L89.40 27.10 L88.50 27.45 L87.60 26.98 L86.70 27.49 L85.80 27.10 L84.90 27.07 L84.00 27.15 L83.10 27.60 L82.20 25.31 L81.30 25.29 L80.40 25.43 L79.50 25.41 L78.60 25.38 L77.70 25.40 L76.80 25.38 L75.90 25.42 L75.00 25.41 L74.10 25.41 L73.20 25.31 L72.30 25.29 L71.40 27.07 L70.50 26.78 L69.60 26.80 L68.70 26.98 L67.80 27.30 L66.90 27.19 L66.00 26.84 L65.10 27.16 L64.20 26.80 L63.30 27.16 L62.40 27.08 L61.50 27.30 L60.60 27.21 L59.70 27.27 L58.80 27.17 L57.90 26.90 L57.00 27.25 L56.10 27.33 L55.20 27.03 L54.30 27.25 L53.40 27.27 L52.50 27.34 L51.60 26.85 L50.70 27.23 L49.80 27.21 L48.90 27.09 L48.00 27.01 L47.10 27.09 L46.20 26.94 L45.30 27.12 L44.40 26.83 L43.50 26.86 L42.60 26.83 L41.70 25.29 L40.80 25.30 L39.90 25.83 L39.00 25.85 L38.10 25.72 L37.20 25.72 L36.30 25.80 L35.40 25.85 L34.50 25.31 L33.60 25.31 L32.70 27.05 L31.80 26.99 L30.90 27.05 L30.00 27.28 L29.10 27.28 L28.20 27.02 L27.30 27.29 L26.40 27.52 L25.50 27.38 L24.60 27.31 L23.70 27.56 L22.80 27.53 L21.90 27.53 L21.00 27.50 L20.10 27.21 L19.20 27.45 L18.30 27.11 L17.40 27.08 L16.50 27.04 L15.60 26.97 L14.70 26.94 L13.80 27.19 L12.90 26.95 L12.00 27.35 L11.10 27.16 L10.20 27.05 L9.30 27.21 L8.40 27.60 L7.50 27.03 L6.60 27.55 L5.70 27.20 L4.80 27.56 L3.90 25.30 L3.00 25.31 L2.10 25.29 L1.20 25.32Z" fill="#f0dca0"/><path d="M1 25.2H177.8" stroke="#f0dca0" stroke-width="0.5"/></svg>
<div style="left:791.60px;top:516.40px;width:178.80px;height:10.10px;background:#e2c272;border-radius:1.5px 1.5px 0 0;"></div>
<svg style="left:0;top:0;" width="1400" height="700" viewBox="0 0 1400 700"><rect x="827.20" y="516.40" width="1.30" height="26.50" fill="#b0ac88"/><rect x="863.85" y="516.40" width="1.30" height="26.50" fill="#b0ac88"/><rect x="900.50" y="516.40" width="1.30" height="26.50" fill="#b0ac88"/><rect x="937.15" y="516.40" width="1.30" height="26.50" fill="#b0ac88"/></svg>
<div class="t" style="left:793.20px;top:519.00px;width:175.80px;height:7px;overflow:hidden;font-size:4.9px;line-height:6px;color:#4c3808;">DS_AVFP3_115_vocal_loop_female_outro_lead_wet_F#m</div>
<svg style="left:0;top:0;" width="1400" height="700" viewBox="0 0 1400 700"><rect x="825.00" y="146.50" width="1.00" height="396.50" fill="#5a82b4"/><rect x="1010.50" y="131.70" width="1.30" height="411.20" fill="#4cb070"/></svg>
<div style="left:429.50px;top:542.90px;width:610.00px;height:0.90px;background:#3c3c41;"></div>
<div style="left:429.50px;top:543.80px;width:610.00px;height:35.60px;background:#18181c;"></div>
<div class="t" style="left:716.00px;top:558.78px;font-size:5.3px;line-height:6.36px;color:#4a4a54;letter-spacing:0.1px;">Master Output</div>
<div style="left:429.50px;top:579.30px;width:610.00px;height:0.80px;background:#38382f;"></div>
<div style="left:429.50px;top:580.10px;width:610.00px;height:10.60px;background:#18181c;"></div>
<div style="left:429.50px;top:581.70px;width:608.00px;height:8.30px;background:#20222b;border:1px solid #2a2c36;border-radius:2px;"></div>
<div style="left:430.30px;top:582.10px;width:40.00px;height:7.30px;background:#4a6d90;border-radius:2px;"></div>
<div class="t" style="left:1015.40px;top:583.55px;font-size:4.5px;line-height:5.40px;color:#e0e0e0;font-weight:700;">2 bars</div>
<div style="left:1039.00px;top:543.80px;width:0.90px;height:47.00px;background:#36363b;"></div>
<div style="left:1039.50px;top:101.50px;width:13.00px;height:488.50px;background:#151518;"></div>
<div style="left:1039.50px;top:147.20px;width:1.00px;height:396.00px;background:#2e2e33;"></div>
<div style="left:1042.20px;top:148.00px;width:7.60px;height:395.00px;background:#222329;border-radius:3px;"></div>
<div style="left:1042.60px;top:182.40px;width:6.80px;height:80.00px;background:#47688a;border-radius:2px;"></div>
<div style="left:1052.40px;top:101.50px;width:2.00px;height:489.50px;background:#4a4a4a;"></div>
<svg style="left:0;top:0;" width="1400" height="700" viewBox="0 0 1400 700"><path d="M673.9 287.6v6.6l1.5-1.4 1.2 2.9 1.1-.5-1.2-2.8h2.1z" fill="#000" stroke="#e8f0d0" stroke-width="0.5"/></svg>
<div style="left:1054.10px;top:101.50px;width:213.90px;height:488.50px;background:#1e202a;"></div>
<div style="left:1054.10px;top:101.50px;width:213.90px;height:4.50px;background:#15151a;"></div>
<div style="left:1059.10px;top:111.30px;width:124.50px;height:16.20px;background:#232530;border:1px solid #2f3140;"></div>
<div class="t" style="left:1061.20px;top:113.88px;font-size:7.0px;line-height:8.40px;color:#b4b6c2;letter-spacing:0.28px;">Search plugins...</div>
<div style="left:1186.80px;top:111.30px;width:77.00px;height:16.20px;background:#232530;border:1px solid #2f3140;"></div>
<div class="t" style="left:1191.80px;top:117.07px;font-size:4.3px;line-height:5.16px;color:#e0e0e6;font-weight:700;">By Category</div>
<svg style="left:1255.60px;top:117.40px;" width="6" height="5" viewBox="0 0 6 5"><path d="M0.8 1l2.2 2.4 2.2-2.4" fill="none" stroke="#e0e0e6" stroke-width="0.9"/></svg>
<div style="left:1260.00px;top:132.00px;width:2.40px;height:160.00px;background:#121217;"></div>
<div class="t" style="left:1072.80px;top:135.50px;font-size:5.6px;line-height:6.72px;color:#ececf0;font-weight:700;letter-spacing:0.22px;">Effect</div>
<div class="t" style="left:1228.80px;top:136.51px;font-size:4.4px;line-height:5.28px;color:#c4c6d0;width:30.00px;text-align:right;letter-spacing:0.15px;">(85)</div>
<div class="t" style="left:1084.90px;top:150.97px;font-size:5.5px;line-height:6.60px;color:#ececf0;font-weight:700;letter-spacing:0.2px;">Utility</div>
<div class="t" style="left:1228.80px;top:151.92px;font-size:4.4px;line-height:5.28px;color:#c4c6d0;width:30.00px;text-align:right;letter-spacing:0.15px;">(2)</div>
<div class="t" style="left:1084.90px;top:166.37px;font-size:5.5px;line-height:6.60px;color:#ececf0;font-weight:700;letter-spacing:0.2px;">EQ</div>
<div class="t" style="left:1228.80px;top:167.32px;font-size:4.4px;line-height:5.28px;color:#c4c6d0;width:30.00px;text-align:right;letter-spacing:0.15px;">(1)</div>
<div class="t" style="left:1084.90px;top:181.78px;font-size:5.5px;line-height:6.60px;color:#ececf0;font-weight:700;letter-spacing:0.2px;">Dynamics</div>
<div class="t" style="left:1228.80px;top:182.73px;font-size:4.4px;line-height:5.28px;color:#c4c6d0;width:30.00px;text-align:right;letter-spacing:0.15px;">(1)</div>
<div class="t" style="left:1084.90px;top:197.18px;font-size:5.5px;line-height:6.60px;color:#ececf0;font-weight:700;letter-spacing:0.2px;">Reverb</div>
<div class="t" style="left:1228.80px;top:198.13px;font-size:4.4px;line-height:5.28px;color:#c4c6d0;width:30.00px;text-align:right;letter-spacing:0.15px;">(2)</div>
<div class="t" style="left:1084.90px;top:212.59px;font-size:5.5px;line-height:6.60px;color:#ececf0;font-weight:700;letter-spacing:0.2px;">Delay</div>
<div class="t" style="left:1228.80px;top:213.54px;font-size:4.4px;line-height:5.28px;color:#c4c6d0;width:30.00px;text-align:right;letter-spacing:0.15px;">(1)</div>
<div class="t" style="left:1084.90px;top:227.99px;font-size:5.5px;line-height:6.60px;color:#ececf0;font-weight:700;letter-spacing:0.2px;">Modulation</div>
<div class="t" style="left:1228.80px;top:228.94px;font-size:4.4px;line-height:5.28px;color:#c4c6d0;width:30.00px;text-align:right;letter-spacing:0.15px;">(2)</div>
<div class="t" style="left:1084.90px;top:243.40px;font-size:5.5px;line-height:6.60px;color:#ececf0;font-weight:700;letter-spacing:0.2px;">Filter</div>
<div class="t" style="left:1228.80px;top:244.35px;font-size:4.4px;line-height:5.28px;color:#c4c6d0;width:30.00px;text-align:right;letter-spacing:0.15px;">(1)</div>
<div class="t" style="left:1084.90px;top:258.80px;font-size:5.5px;line-height:6.60px;color:#ececf0;font-weight:700;letter-spacing:0.2px;">Pitch</div>
<div class="t" style="left:1228.80px;top:259.75px;font-size:4.4px;line-height:5.28px;color:#c4c6d0;width:30.00px;text-align:right;letter-spacing:0.15px;">(1)</div>
<div class="t" style="left:1084.90px;top:274.21px;font-size:5.5px;line-height:6.60px;color:#ececf0;font-weight:700;letter-spacing:0.2px;">Fx|Dynamics</div>
<div class="t" style="left:1228.80px;top:275.16px;font-size:4.4px;line-height:5.28px;color:#c4c6d0;width:30.00px;text-align:right;letter-spacing:0.15px;">(156)</div>
<div class="t" style="left:1084.90px;top:289.61px;font-size:5.5px;line-height:6.60px;color:#ececf0;font-weight:700;letter-spacing:0.2px;">Fx|Filter</div>
<div class="t" style="left:1228.80px;top:290.56px;font-size:4.4px;line-height:5.28px;color:#c4c6d0;width:30.00px;text-align:right;letter-spacing:0.15px;">(24)</div>
<div class="t" style="left:1084.90px;top:305.02px;font-size:5.5px;line-height:6.60px;color:#ececf0;font-weight:700;letter-spacing:0.2px;">Fx|Distortion</div>
<div class="t" style="left:1228.80px;top:305.97px;font-size:4.4px;line-height:5.28px;color:#c4c6d0;width:30.00px;text-align:right;letter-spacing:0.15px;">(70)</div>
<div class="t" style="left:1084.90px;top:320.42px;font-size:5.5px;line-height:6.60px;color:#ececf0;font-weight:700;letter-spacing:0.2px;">Fx|Spatial</div>
<div class="t" style="left:1228.80px;top:321.37px;font-size:4.4px;line-height:5.28px;color:#c4c6d0;width:30.00px;text-align:right;letter-spacing:0.15px;">(9)</div>
<div class="t" style="left:1084.90px;top:335.83px;font-size:5.5px;line-height:6.60px;color:#ececf0;font-weight:700;letter-spacing:0.2px;">Fx</div>
<div class="t" style="left:1228.80px;top:336.78px;font-size:4.4px;line-height:5.28px;color:#c4c6d0;width:30.00px;text-align:right;letter-spacing:0.15px;">(140)</div>
<div class="t" style="left:1084.90px;top:351.23px;font-size:5.5px;line-height:6.60px;color:#ececf0;font-weight:700;letter-spacing:0.2px;">Fx|Modulation</div>
<div class="t" style="left:1228.80px;top:352.18px;font-size:4.4px;line-height:5.28px;color:#c4c6d0;width:30.00px;text-align:right;letter-spacing:0.15px;">(35)</div>
<div class="t" style="left:1084.90px;top:366.64px;font-size:5.5px;line-height:6.60px;color:#ececf0;font-weight:700;letter-spacing:0.2px;">Fx|Tools</div>
<div class="t" style="left:1228.80px;top:367.59px;font-size:4.4px;line-height:5.28px;color:#c4c6d0;width:30.00px;text-align:right;letter-spacing:0.15px;">(28)</div>
<div class="t" style="left:1084.90px;top:382.04px;font-size:5.5px;line-height:6.60px;color:#ececf0;font-weight:700;letter-spacing:0.2px;">Fx|EQ</div>
<div class="t" style="left:1228.80px;top:382.99px;font-size:4.4px;line-height:5.28px;color:#c4c6d0;width:30.00px;text-align:right;letter-spacing:0.15px;">(121)</div>
<div class="t" style="left:1084.90px;top:397.45px;font-size:5.5px;line-height:6.60px;color:#ececf0;font-weight:700;letter-spacing:0.2px;">Fx|Pitch Shift</div>
<div class="t" style="left:1228.80px;top:398.40px;font-size:4.4px;line-height:5.28px;color:#c4c6d0;width:30.00px;text-align:right;letter-spacing:0.15px;">(6)</div>
<div class="t" style="left:1084.90px;top:412.85px;font-size:5.5px;line-height:6.60px;color:#ececf0;font-weight:700;letter-spacing:0.2px;">Panner</div>
<div class="t" style="left:1228.80px;top:413.80px;font-size:4.4px;line-height:5.28px;color:#c4c6d0;width:30.00px;text-align:right;letter-spacing:0.15px;">(4)</div>
<div class="t" style="left:1084.90px;top:428.26px;font-size:5.5px;line-height:6.60px;color:#ececf0;font-weight:700;letter-spacing:0.2px;">Mixer</div>
<div class="t" style="left:1228.80px;top:429.21px;font-size:4.4px;line-height:5.28px;color:#c4c6d0;width:30.00px;text-align:right;letter-spacing:0.15px;">(6)</div>
<div class="t" style="left:1084.90px;top:443.66px;font-size:5.5px;line-height:6.60px;color:#ececf0;font-weight:700;letter-spacing:0.2px;">Effect</div>
<div class="t" style="left:1228.80px;top:444.61px;font-size:4.4px;line-height:5.28px;color:#c4c6d0;width:30.00px;text-align:right;letter-spacing:0.15px;">(25)</div>
<div class="t" style="left:1084.90px;top:459.07px;font-size:5.5px;line-height:6.60px;color:#ececf0;font-weight:700;letter-spacing:0.2px;">Generator</div>
<div class="t" style="left:1228.80px;top:460.02px;font-size:4.4px;line-height:5.28px;color:#c4c6d0;width:30.00px;text-align:right;letter-spacing:0.15px;">(4)</div>
<div class="t" style="left:1084.90px;top:474.47px;font-size:5.5px;line-height:6.60px;color:#ececf0;font-weight:700;letter-spacing:0.2px;">Fx|Delay</div>
<div class="t" style="left:1228.80px;top:475.42px;font-size:4.4px;line-height:5.28px;color:#c4c6d0;width:30.00px;text-align:right;letter-spacing:0.15px;">(17)</div>
<div class="t" style="left:1084.90px;top:489.88px;font-size:5.5px;line-height:6.60px;color:#ececf0;font-weight:700;letter-spacing:0.2px;">Fx|Analyzer</div>
<div class="t" style="left:1228.80px;top:490.83px;font-size:4.4px;line-height:5.28px;color:#c4c6d0;width:30.00px;text-align:right;letter-spacing:0.15px;">(4)</div>
<div class="t" style="left:1084.90px;top:505.28px;font-size:5.5px;line-height:6.60px;color:#ececf0;font-weight:700;letter-spacing:0.2px;">Fx|Distortion|EQ</div>
<div class="t" style="left:1228.80px;top:506.23px;font-size:4.4px;line-height:5.28px;color:#c4c6d0;width:30.00px;text-align:right;letter-spacing:0.15px;">(2)</div>
<div class="t" style="left:1084.90px;top:520.69px;font-size:5.5px;line-height:6.60px;color:#ececf0;font-weight:700;letter-spacing:0.2px;">Fx|Filter|EQ|Modulation|Distortion</div>
<div class="t" style="left:1228.80px;top:521.64px;font-size:4.4px;line-height:5.28px;color:#c4c6d0;width:30.00px;text-align:right;letter-spacing:0.15px;">(2)</div>
<div class="t" style="left:1084.90px;top:536.09px;font-size:5.5px;line-height:6.60px;color:#ececf0;font-weight:700;letter-spacing:0.2px;">Fx|Dynamics|Distortion</div>
<div class="t" style="left:1228.80px;top:537.04px;font-size:4.4px;line-height:5.28px;color:#c4c6d0;width:30.00px;text-align:right;letter-spacing:0.15px;">(2)</div>
<div class="t" style="left:1084.90px;top:551.50px;font-size:5.5px;line-height:6.60px;color:#ececf0;font-weight:700;letter-spacing:0.2px;">Fx|Pitch Shift|Spatial</div>
<div class="t" style="left:1228.80px;top:552.45px;font-size:4.4px;line-height:5.28px;color:#c4c6d0;width:30.00px;text-align:right;letter-spacing:0.15px;">(2)</div>
<svg style="left:0;top:0;" width="1400" height="700" viewBox="0 0 1400 700"><path d="M1062.20 136.60h4.8l-2.4 4.3z" fill="#d8d8dc"/><path d="M1074.50 151.71v4.8l4.2-2.4z" fill="#d8d8dc"/><path d="M1074.50 167.11v4.8l4.2-2.4z" fill="#d8d8dc"/><path d="M1074.50 182.52v4.8l4.2-2.4z" fill="#d8d8dc"/><path d="M1074.50 197.92v4.8l4.2-2.4z" fill="#d8d8dc"/><path d="M1074.50 213.32v4.8l4.2-2.4z" fill="#d8d8dc"/><path d="M1074.50 228.73v4.8l4.2-2.4z" fill="#d8d8dc"/><path d="M1074.50 244.13v4.8l4.2-2.4z" fill="#d8d8dc"/><path d="M1074.50 259.54v4.8l4.2-2.4z" fill="#d8d8dc"/><path d="M1074.50 274.94v4.8l4.2-2.4z" fill="#d8d8dc"/><path d="M1074.50 290.35v4.8l4.2-2.4z" fill="#d8d8dc"/><path d="M1074.50 305.75v4.8l4.2-2.4z" fill="#d8d8dc"/><path d="M1074.50 321.16v4.8l4.2-2.4z" fill="#d8d8dc"/><path d="M1074.50 336.56v4.8l4.2-2.4z" fill="#d8d8dc"/><path d="M1074.50 351.97v4.8l4.2-2.4z" fill="#d8d8dc"/><path d="M1074.50 367.38v4.8l4.2-2.4z" fill="#d8d8dc"/><path d="M1074.50 382.78v4.8l4.2-2.4z" fill="#d8d8dc"/><path d="M1074.50 398.19v4.8l4.2-2.4z" fill="#d8d8dc"/><path d="M1074.50 413.59v4.8l4.2-2.4z" fill="#d8d8dc"/><path d="M1074.50 429.00v4.8l4.2-2.4z" fill="#d8d8dc"/><path d="M1074.50 444.40v4.8l4.2-2.4z" fill="#d8d8dc"/><path d="M1074.50 459.81v4.8l4.2-2.4z" fill="#d8d8dc"/><path d="M1074.50 475.21v4.8l4.2-2.4z" fill="#d8d8dc"/><path d="M1074.50 490.62v4.8l4.2-2.4z" fill="#d8d8dc"/><path d="M1074.50 506.02v4.8l4.2-2.4z" fill="#d8d8dc"/><path d="M1074.50 521.42v4.8l4.2-2.4z" fill="#d8d8dc"/><path d="M1074.50 536.83v4.8l4.2-2.4z" fill="#d8d8dc"/><path d="M1074.50 552.24v4.8l4.2-2.4z" fill="#d8d8dc"/></svg>
<div style="left:1101.60px;top:567.20px;width:0.80px;height:0.70px;background:#c8c8cc;"></div>
<div style="left:1133.00px;top:567.20px;width:0.80px;height:0.70px;background:#c8c8cc;"></div>
<div style="left:1054.10px;top:572.00px;width:213.90px;height:19.40px;background:#1c1e27;border-top:1px solid #2e303a;"></div>
<svg style="left:1058.40px;top:578.40px;" width="8" height="8" viewBox="0 0 8 8"><rect x="0.6" y="0.6" width="6.4" height="6.6" rx="0.5" fill="none" stroke="#dcdce0" stroke-width="0.9"/><path d="M4.8 0.6v6.6" stroke="#dcdce0" stroke-width="0.8"/><path d="M1.6 3.9h2" stroke="#dcdce0" stroke-width="0.8"/></svg>
<div style="left:1153.80px;top:575.60px;width:13.30px;height:12.60px;background:#2b2f3f;border-radius:1.5px;"></div>
<svg style="left:1155.40px;top:576.90px;" width="10" height="10" viewBox="0 0 10 10"><g fill="none" stroke="#b0b2c0" stroke-width="0.9"><rect x="1.2" y="5.2" width="4" height="3" rx="1.4" transform="rotate(-45 3.2 6.7)"/><rect x="4.8" y="1.7" width="4" height="3" rx="1.4" transform="rotate(-45 6.8 3.2)"/><path d="M3.8 6.2l2.4-2.4"/></g></svg>
<svg style="left:1174.00px;top:577.00px;" width="10.4" height="10.2" viewBox="0 0 10.4 10.2"><g fill="none" stroke="#dcdce0" stroke-width="0.9"><rect x="0.7" y="0.7" width="3.2" height="3.6"/><rect x="6" y="0.7" width="3.6" height="2"/><rect x="0.7" y="6.6" width="3.2" height="2.6"/><rect x="6" y="5.2" width="3.6" height="4"/></g></svg>
<div style="left:132.00px;top:591.20px;width:1136.00px;height:38.80px;background:linear-gradient(#1f212b 0%,#20222c 70%,#1d1f28 90%,#14151a 97%,#101014 100%);"></div>
<div style="left:132.00px;top:590.60px;width:1136.00px;height:0.80px;background:#2a2c36;"></div>
<svg style="left:664.30px;top:610.40px;" width="14.6" height="14.6" viewBox="0 0 14.6 14.6"><g fill="none" stroke="#e0e0e6" stroke-width="1.3"><rect x="0.9" y="0.9" width="12.8" height="12.8" rx="0.9"/><path d="M5.1 0.9v12.8M9.5 0.9v12.8M0.9 7.3h12.8"/></g></svg>
<svg style="left:692.70px;top:610.40px;" width="14.6" height="14.6" viewBox="0 0 14.6 14.6"><g fill="none" stroke="#e0e0e6" stroke-width="1.3"><rect x="0.9" y="0.9" width="12.8" height="12.8" rx="0.9"/><path d="M7.2 4.4h4M5.4 7.3h3.6M3.6 10.2h3.8"/></g></svg>
<svg style="left:721.30px;top:610.40px;" width="14.6" height="14.6" viewBox="0 0 14.6 14.6"><g fill="none" stroke="#e0e0e6" stroke-width="1.3"><rect x="0.9" y="0.9" width="12.8" height="12.8" rx="0.9"/><path d="M3.4 3.2v8.4M7.3 3.2v8.4M11.2 3.2v8.4" stroke-width="1.1"/><path d="M2.3 5.6h2.2M6.2 9.4h2.2M10.1 6.2h2.2" stroke-width="1.6"/></g></svg>
<svg style="left:1253.80px;top:613.80px;" width="8.4" height="7.8" viewBox="0 0 8.4 7.8"><rect x="0.5" y="0.5" width="7.4" height="6.6" fill="none" stroke="#c4c4cc" stroke-width="0.9"/><path d="M0.5 5.2h7.4" stroke="#c4c4cc" stroke-width="0.9"/><rect x="3" y="2.2" width="2.4" height="1.2" fill="#c4c4cc"/></svg>
</div></body></html>
